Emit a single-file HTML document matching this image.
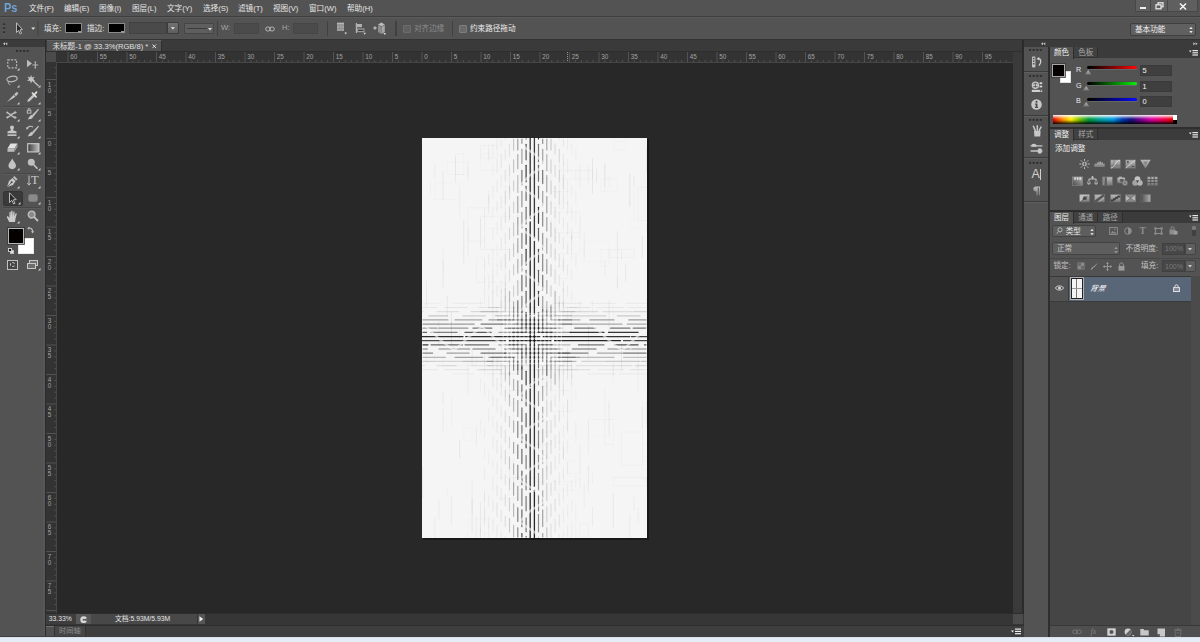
<!DOCTYPE html>
<html lang="zh-CN"><head><meta charset="utf-8"><title>Photoshop</title>
<style>
html,body{margin:0;padding:0;background:#535353;}
body{width:1200px;height:642px;overflow:hidden;position:relative;font-family:"Liberation Sans","Noto Sans CJK SC",sans-serif;}
#root{position:absolute;left:0;top:0;width:1200px;height:642px;overflow:hidden;background:#535353;}
#root div{position:absolute;box-sizing:border-box;}
#root svg{position:absolute;overflow:visible;}
.t{position:absolute;white-space:nowrap;line-height:10px;height:10px;}
</style></head>
<body><div id="root">
<div style="left:0px;top:0px;width:1200px;height:17px;background:#535353;"></div>
<div style="left:0px;top:16px;width:1200px;height:1px;background:#3e3e3e;"></div>
<div style="left:0px;top:17px;width:1200px;height:1px;background:#5c5c5c;"></div>
<span class="t" style="left:4px;top:2.3px;font-size:12.8px;color:#6fa4d9;font-weight:bold;line-height:12px;height:12px;transform:scaleX(0.86);transform-origin:0 0">Ps</span>
<span class="t" style="left:29px;top:3.5px;font-size:7.6px;color:#e6e6e6;">文件(F)</span>
<span class="t" style="left:64px;top:3.5px;font-size:7.6px;color:#e6e6e6;">编辑(E)</span>
<span class="t" style="left:99px;top:3.5px;font-size:7.6px;color:#e6e6e6;">图像(I)</span>
<span class="t" style="left:132px;top:3.5px;font-size:7.6px;color:#e6e6e6;">图层(L)</span>
<span class="t" style="left:167px;top:3.5px;font-size:7.6px;color:#e6e6e6;">文字(Y)</span>
<span class="t" style="left:203px;top:3.5px;font-size:7.6px;color:#e6e6e6;">选择(S)</span>
<span class="t" style="left:238px;top:3.5px;font-size:7.6px;color:#e6e6e6;">滤镜(T)</span>
<span class="t" style="left:273px;top:3.5px;font-size:7.6px;color:#e6e6e6;">视图(V)</span>
<span class="t" style="left:309px;top:3.5px;font-size:7.6px;color:#e6e6e6;">窗口(W)</span>
<span class="t" style="left:347px;top:3.5px;font-size:7.6px;color:#e6e6e6;">帮助(H)</span>
<div style="left:1135px;top:0px;width:16px;height:12px;background:#5f5f5f;border:1px solid #484848;border-top:none"></div>
<div style="left:1151px;top:0px;width:17px;height:12px;background:#5f5f5f;border:1px solid #484848;border-top:none;border-left:none"></div>
<div style="left:1168px;top:0px;width:30px;height:12px;background:#5f5f5f;border:1px solid #484848;border-top:none;border-left:none"></div>
<div style="left:1140px;top:7px;width:6px;height:2px;background:#f0f0f0;"></div>
<svg style="left:1155px;top:2px" width="10" height="8" viewBox="0 0 10 8"><rect x="3" y="0.8" width="5" height="4" fill="none" stroke="#f0f0f0" stroke-width="1.2"/><rect x="1" y="2.8" width="5" height="4" fill="#5f5f5f" stroke="#f0f0f0" stroke-width="1.2"/></svg>
<svg style="left:1179px;top:3px" width="8" height="7" viewBox="0 0 8 7"><path d="M1 0.5 L7 6.5 M7 0.5 L1 6.5" stroke="#f4f4f4" stroke-width="1.5" fill="none"/></svg>
<div style="left:0px;top:18px;width:1200px;height:21px;background:#535353;"></div>
<div style="left:0px;top:39px;width:1200px;height:1px;background:#333;"></div>
<svg style="left:3px;top:23px" width="3" height="13" viewBox="0 0 3 13"><rect x="0" y="0.4" width="2.2" height="1.7" fill="#2d2d2d"/><rect x="0" y="4.4" width="2.2" height="1.7" fill="#2d2d2d"/><rect x="0" y="8.4" width="2.2" height="1.7" fill="#2d2d2d"/><rect x="0" y="2.4" width="2.2" height="0.8" fill="#636363"/><rect x="0" y="6.4" width="2.2" height="0.8" fill="#636363"/><rect x="0" y="10.4" width="2.2" height="0.8" fill="#636363"/></svg>
<svg style="left:15px;top:22px" width="10" height="13" viewBox="0 0 10 13"><path d="M1.5 0.8 L1.5 10.5 L3.6 8.4 L5.2 12 L6.6 11.3 L5 7.9 L7.4 7.6 Z" fill="#2b2b2b" stroke="#cfcfcf" stroke-width="0.85"/></svg>
<svg style="left:30.6px;top:27.2px" width="4.4" height="3" viewBox="0 0 6 4"><path d="M0.3 0.5 L5.7 0.5 L3 3.7 Z" fill="#e8e8e8"/></svg>
<div style="left:37.4px;top:21px;width:1.2px;height:15px;background:#4a4a4a;"></div>
<span class="t" style="left:44px;top:24px;font-size:7.6px;color:#e6e6e6;">填充:</span>
<div style="left:65.2px;top:23px;width:16.6px;height:10.2px;background:#000;border:1px solid #8a8a8a"></div>
<div style="left:78px;top:30.5px;width:3px;height:2px;background:#999;"></div>
<span class="t" style="left:87px;top:24px;font-size:7.6px;color:#e6e6e6;">描边:</span>
<div style="left:108.2px;top:23px;width:16.6px;height:10.2px;background:#000;border:1px solid #8a8a8a"></div>
<div style="left:121px;top:30.5px;width:3px;height:2px;background:#999;"></div>
<div style="left:129px;top:22.4px;width:38.2px;height:11.4px;background:#4a4a4a;border:1px solid #414141"></div>
<div style="left:167.2px;top:22.4px;width:12.2px;height:11.4px;background:linear-gradient(#727272,#5e5e5e);border:1px solid #3c3c3c;border-radius:1px"></div>
<svg style="left:171.4px;top:27.2px" width="3.8" height="2.6" viewBox="0 0 5 3"><path d="M0 0 L5 0 L2.5 3 Z" fill="#f0f0f0"/></svg>
<div style="left:184px;top:22.5px;width:30px;height:11.5px;background:#5e5e5e;border:1px solid #454545;border-radius:1px"></div>
<div style="left:187px;top:28px;width:20px;height:1px;background:#3c3c3c;"></div>
<svg style="left:208px;top:27.5px" width="4" height="3" viewBox="0 0 4 3"><path d="M0 0 L4 0 L2 2.5 Z" fill="#ddd"/></svg>
<div style="left:216.6px;top:21px;width:1.3px;height:15px;background:#404040;"></div>
<span class="t" style="left:221px;top:23.2px;font-size:7.6px;color:#a8a8a8;">W:</span>
<div style="left:234px;top:22.5px;width:25px;height:11.5px;background:#4b4b4b;border:1px solid #464646"></div>
<svg style="left:265px;top:25.5px" width="10" height="6" viewBox="0 0 10 6"><rect x="0.7" y="1" width="4.6" height="4" rx="2" fill="none" stroke="#c0c0c0" stroke-width="0.9"/><rect x="4.7" y="1" width="4.6" height="4" rx="2" fill="none" stroke="#c0c0c0" stroke-width="0.9"/></svg>
<span class="t" style="left:282px;top:23.2px;font-size:7.6px;color:#a8a8a8;">H:</span>
<div style="left:293px;top:22.5px;width:25px;height:11.5px;background:#4b4b4b;border:1px solid #464646"></div>
<div style="left:327.2px;top:21px;width:1.3px;height:15px;background:#404040;"></div>
<svg style="left:336px;top:22px" width="12" height="14" viewBox="0 0 12 14"><rect x="1" y="0.8" width="7" height="8.2" fill="#a2a2a2"/><path d="M1 3.2 L8 3.2 M1 6.6 L8 6.6 M3.4 0.8 L3.4 9 M5.7 0.8 L5.7 9" stroke="#8a8a8a" stroke-width="0.6"/><rect x="1" y="0.8" width="7" height="1" fill="#bdbdbd"/><path d="M8.4 10.6 L11 10.6 L9.7 12.6 Z" fill="#d8d8d8"/></svg>
<svg style="left:355px;top:22px" width="12" height="14" viewBox="0 0 12 14"><rect x="0.8" y="1" width="1.2" height="10" fill="#b4b4b4"/><rect x="2" y="2" width="5" height="3.2" fill="#b0b0b0"/><rect x="2" y="6.4" width="7.5" height="3.8" fill="#9a9a9a"/><rect x="3" y="7.8" width="5.5" height="1" fill="#222"/><path d="M8.4 10.8 L11 10.8 L9.7 12.8 Z" fill="#d8d8d8"/></svg>
<svg style="left:372px;top:22px" width="15" height="14" viewBox="0 0 15 14"><path d="M1.2 6 L4.8 6 M3 4.2 L3 7.8" stroke="#c8c8c8" stroke-width="1.1"/><path d="M9.4 0.6 L12.8 2.6 L9.4 4.6 L6 2.6 Z" fill="#bcbcbc"/><path d="M6 2.9 L9.3 4.9 L9.3 12 L6 10 Z" fill="#8e8e8e"/><path d="M12.8 2.9 L9.5 4.9 L9.5 12 L12.8 10 Z" fill="#a6a6a6"/><path d="M11.4 11 L14 11 L12.7 13 Z" fill="#d8d8d8"/></svg>
<div style="left:395.4px;top:21px;width:1.3px;height:15px;background:#404040;"></div>
<div style="left:403px;top:25px;width:7.5px;height:7.5px;background:#606060;border:1px solid #6c6c6c;border-radius:1px"></div>
<span class="t" style="left:414px;top:24px;font-size:7.6px;color:#8c8c8c;">对齐边缘</span>
<div style="left:451.6px;top:21px;width:1.3px;height:15px;background:#404040;"></div>
<div style="left:459px;top:25px;width:7.5px;height:7.5px;background:#6a6a6a;border:1px solid #7d7d7d;border-radius:1px"></div>
<span class="t" style="left:470px;top:24px;font-size:7.6px;color:#ececec;">约束路径拖动</span>
<div style="left:1130px;top:23px;width:66px;height:12.5px;background:#606060;border:1px solid #3f3f3f;border-radius:2px"></div>
<span class="t" style="left:1135px;top:24.5px;font-size:7.6px;color:#f0f0f0;">基本功能</span>
<svg style="left:1189px;top:26px" width="4" height="8" viewBox="0 0 4 8"><path d="M0.3 3 L3.7 3 L2 0.8 Z M0.3 5 L3.7 5 L2 7.2 Z" fill="#e8e8e8"/></svg>
<div style="left:0px;top:40px;width:44.8px;height:597px;background:#535353;"></div>
<div style="left:0px;top:40px;width:44.8px;height:7px;background:#3b3b3b;"></div>
<div style="left:44.8px;top:40px;width:1.5px;height:597px;background:#2b2b2b;"></div>
<div style="left:43px;top:47px;width:1.8px;height:589px;background:#575757;"></div>
<svg style="left:3.2px;top:41.8px" width="4.6" height="3.4" viewBox="0 0 6 4"><path d="M2.6 0 L2.6 4 L0 2 Z M5.6 0 L5.6 4 L3 2 Z" fill="#c8c8c8"/></svg>
<svg style="left:16.1px;top:49.5px" width="13" height="2" viewBox="0 0 13 2"><rect x="0.0" y="0" width="2.1" height="1.8" fill="#2d2d2d"/><rect x="3.55" y="0" width="2.1" height="1.8" fill="#2d2d2d"/><rect x="7.1" y="0" width="2.1" height="1.8" fill="#2d2d2d"/><rect x="10.649999999999999" y="0" width="2.1" height="1.8" fill="#2d2d2d"/></svg>
<div style="left:3px;top:106px;width:38px;height:1px;background:#474747;"></div>
<div style="left:3px;top:107px;width:38px;height:1px;background:#5b5b5b;"></div>
<div style="left:3px;top:173px;width:38px;height:1px;background:#474747;"></div>
<div style="left:3px;top:174px;width:38px;height:1px;background:#5b5b5b;"></div>
<div style="left:3px;top:207px;width:38px;height:1px;background:#474747;"></div>
<div style="left:3px;top:208px;width:38px;height:1px;background:#5b5b5b;"></div>
<div style="left:2.5px;top:190.5px;width:20px;height:15px;background:#3a3a3a;border-radius:2px;border:1px solid #343434"></div>
<svg style="left:6.6px;top:59.3px" width="11" height="10" viewBox="0 0 11 10"><rect x="0.8" y="0.8" width="8.8" height="8" fill="none" stroke="#b8b8b8" stroke-width="1.2" stroke-dasharray="2 1.3"/></svg>
<svg style="left:17px;top:68px" width="2.5" height="2.5" viewBox="0 0 3 3"><path d="M3 0 L3 3 L0 3 Z" fill="#d4d4d4"/></svg>
<svg style="left:26px;top:59px" width="14" height="11" viewBox="0 0 14 11"><path d="M1 0.8 L1 8.2 L6 4.5 Z" fill="#bcbcbc"/><path d="M9.3 2.6 L9.3 9.4 M6.4 6 L12.2 6" stroke="#c0c0c0" stroke-width="0.9"/><path d="M8.3 3.6 L9.3 2.2 L10.3 3.6 Z M8.3 8.4 L9.3 9.8 L10.3 8.4 Z" fill="#c0c0c0"/></svg>
<svg style="left:6px;top:75px" width="13" height="12" viewBox="0 0 13 12"><ellipse cx="6" cy="4" rx="5.2" ry="2.7" fill="none" stroke="#bababa" stroke-width="1.2" transform="rotate(-8 6 4)"/><path d="M2.6 6 C1.6 7.6 2.6 9.4 4.4 9.8" fill="none" stroke="#bababa" stroke-width="1"/></svg>
<svg style="left:17px;top:85px" width="2.5" height="2.5" viewBox="0 0 3 3"><path d="M3 0 L3 3 L0 3 Z" fill="#d4d4d4"/></svg>
<svg style="left:26px;top:74px" width="14" height="13" viewBox="0 0 14 13"><path d="M5 5 L12.6 12" stroke="#bcbcbc" stroke-width="1.5"/><path d="M5 0.8 L6 3.4 L8.8 2.6 L7.2 5 L9.2 7 L6.2 6.8 L5 9.4 L4 6.8 L1 7 L3 5 L1.4 2.6 L4.2 3.4 Z" fill="#c4c4c4"/></svg>
<svg style="left:38px;top:85px" width="2.5" height="2.5" viewBox="0 0 3 3"><path d="M3 0 L3 3 L0 3 Z" fill="#d4d4d4"/></svg>
<svg style="left:6px;top:91px" width="13" height="12" viewBox="0 0 13 12"><path d="M1 11 L7.5 4 L9.5 5.8 Z" fill="#c6c6c6"/><path d="M8 3.5 L10.8 0.8 L12.5 2.5 L10 5.3 Z" fill="#bdbdbd"/></svg>
<svg style="left:17px;top:101.5px" width="2.5" height="2.5" viewBox="0 0 3 3"><path d="M3 0 L3 3 L0 3 Z" fill="#d4d4d4"/></svg>
<svg style="left:26px;top:91px" width="13" height="12" viewBox="0 0 13 12"><path d="M1.2 11 L2 8.5 L7 3.5 L8.7 5.2 L3.7 10.2 Z" fill="#c6c6c6"/><path d="M6.5 2.2 L10 5.8 M8.5 3.5 L10.5 1.2" stroke="#e0e0e0" stroke-width="1.8" stroke-linecap="round"/></svg>
<svg style="left:38px;top:101.5px" width="2.5" height="2.5" viewBox="0 0 3 3"><path d="M3 0 L3 3 L0 3 Z" fill="#d4d4d4"/></svg>
<svg style="left:6px;top:110px" width="12" height="10" viewBox="0 0 12 10"><path d="M0.5 2.4 C3.6 2.4 6 7.6 9.6 7.6 M0.5 7.6 C3.6 7.6 6 2.4 9.6 2.4" fill="none" stroke="#bcbcbc" stroke-width="1.5"/><path d="M8.6 0.8 L11 2.4 L8.6 4 Z M8.6 6 L11 7.6 L8.6 9.2 Z M2 1.2 L0 2.4 L2 3.6 Z M2 6.4 L0 7.6 L2 8.8 Z" fill="#bcbcbc"/></svg>
<svg style="left:17px;top:119px" width="2.5" height="2.5" viewBox="0 0 3 3"><path d="M3 0 L3 3 L0 3 Z" fill="#d4d4d4"/></svg>
<svg style="left:26px;top:108px" width="14" height="13" viewBox="0 0 14 13"><path d="M13 1.4 L7.6 8.6 L5.8 7.2 L12.2 0.8 Z" fill="#c2c2c2"/><path d="M7.4 8.6 C6.4 11.2 3.6 11.6 1.6 11.2 C3.2 10.2 3 8.2 5.4 6.8 Z" fill="#c6c6c6"/><rect x="0.8" y="2.2" width="4.6" height="3.4" fill="#bebebe"/><rect x="1.8" y="3.2" width="2.6" height="1.4" fill="#444"/><path d="M2 2 L2 0.8 L4.2 0.8 L4.2 2" fill="none" stroke="#bebebe" stroke-width="0.9"/></svg>
<svg style="left:38px;top:119px" width="2.5" height="2.5" viewBox="0 0 3 3"><path d="M3 0 L3 3 L0 3 Z" fill="#d4d4d4"/></svg>
<svg style="left:6px;top:125px" width="13" height="12" viewBox="0 0 13 12"><path d="M4.6 0.8 L7.4 0.8 L8 2.6 L7 5.2 L10.5 6.4 L10.5 8.2 L1.5 8.2 L1.5 6.4 L5 5.2 L4 2.6 Z" fill="#c6c6c6"/><rect x="1.5" y="9.3" width="9" height="1.7" fill="#c0c0c0"/></svg>
<svg style="left:17px;top:135.5px" width="2.5" height="2.5" viewBox="0 0 3 3"><path d="M3 0 L3 3 L0 3 Z" fill="#d4d4d4"/></svg>
<svg style="left:26px;top:125px" width="14" height="13" viewBox="0 0 14 13"><path d="M13 1.4 L7.6 8.6 L5.8 7.2 L12.2 0.8 Z" fill="#c2c2c2"/><path d="M7.4 8.6 C6.4 11.2 3.6 11.6 1.6 11.2 C3.2 10.2 3 8.2 5.4 6.8 Z" fill="#c6c6c6"/><path d="M1 3.8 C2 1.2 5 0.6 7 2" fill="none" stroke="#bebebe" stroke-width="1.2"/><path d="M0 2.2 L2.6 3 L0.8 5 Z" fill="#bebebe"/></svg>
<svg style="left:38px;top:135.5px" width="2.5" height="2.5" viewBox="0 0 3 3"><path d="M3 0 L3 3 L0 3 Z" fill="#d4d4d4"/></svg>
<svg style="left:6px;top:142px" width="13" height="12" viewBox="0 0 13 12"><path d="M4.5 1.5 L11.5 1.5 L8.5 6.5 L1.5 6.5 Z" fill="#e2e2e2"/><path d="M1.5 6.5 L8.5 6.5 L8.5 9.8 L1.5 9.8 Z" fill="#bcbcbc"/><path d="M8.5 6.5 L11.5 1.5 L11.5 4.8 L8.5 9.8 Z" fill="#9d9d9d"/></svg>
<svg style="left:17px;top:152px" width="2.5" height="2.5" viewBox="0 0 3 3"><path d="M3 0 L3 3 L0 3 Z" fill="#d4d4d4"/></svg>
<svg style="left:26.5px;top:142.5px" width="13" height="10" viewBox="0 0 13 10"><defs><linearGradient id="gtool" x1="0" x2="1" y1="0" y2="0"><stop offset="0" stop-color="#3a3a3a"/><stop offset="1" stop-color="#c0c0c0"/></linearGradient></defs><rect x="0.7" y="0.7" width="11.2" height="8.2" fill="url(#gtool)" stroke="#c6c6c6" stroke-width="1.2"/></svg>
<svg style="left:38px;top:152px" width="2.5" height="2.5" viewBox="0 0 3 3"><path d="M3 0 L3 3 L0 3 Z" fill="#d4d4d4"/></svg>
<svg style="left:7px;top:158px" width="11" height="12" viewBox="0 0 11 12"><path d="M5.2 0.5 C6.5 3.5 9 5.2 9 7.6 C9 9.8 7.3 11.2 5.2 11.2 C3.1 11.2 1.4 9.8 1.4 7.6 C1.4 5.2 4 3.5 5.2 0.5 Z" fill="#c4c4c4"/></svg>
<svg style="left:17px;top:168px" width="2.5" height="2.5" viewBox="0 0 3 3"><path d="M3 0 L3 3 L0 3 Z" fill="#d4d4d4"/></svg>
<svg style="left:27px;top:158px" width="12" height="12" viewBox="0 0 12 12"><circle cx="4.3" cy="4.3" r="3.5" fill="#bebebe"/><path d="M6.5 6.5 L10.5 10.8" stroke="#c6c6c6" stroke-width="1.6"/></svg>
<svg style="left:38px;top:168px" width="2.5" height="2.5" viewBox="0 0 3 3"><path d="M3 0 L3 3 L0 3 Z" fill="#d4d4d4"/></svg>
<svg style="left:6px;top:175px" width="13" height="13" viewBox="0 0 13 13"><path d="M8.3 1 L11.6 4.3 L10.2 5.6 L7 2.4 Z" fill="#c0c0c0"/><path d="M6.5 3 L9.6 6 L7 10 L1 12 L3 6 Z" fill="#c8c8c8"/><circle cx="5.6" cy="7.2" r="1" fill="#444"/><path d="M1.2 11.8 L5 8" stroke="#444" stroke-width="0.7"/></svg>
<svg style="left:17px;top:186px" width="2.5" height="2.5" viewBox="0 0 3 3"><path d="M3 0 L3 3 L0 3 Z" fill="#d4d4d4"/></svg>
<svg style="left:26.5px;top:175px" width="14" height="12" viewBox="0 0 14 12"><path d="M2 0.5 L2 9.5 M0.3 8 L2 10.2 L3.7 8" stroke="#bebebe" stroke-width="1" fill="none"/></svg>
<span class="t" style="left:31px;top:174px;font-size:12.5px;color:#cacaca;font-family:'Liberation Serif',serif;line-height:13px;height:13px">T</span>
<svg style="left:38px;top:186px" width="2.5" height="2.5" viewBox="0 0 3 3"><path d="M3 0 L3 3 L0 3 Z" fill="#d4d4d4"/></svg>
<svg style="left:8px;top:192px" width="10" height="13" viewBox="0 0 10 13"><path d="M1.5 0.8 L1.5 10.5 L3.8 8.3 L5.6 12 L7 11.3 L5.3 7.8 L8.2 7.6 Z" fill="#2b2b2b" stroke="#c6c6c6" stroke-width="0.9"/></svg>
<svg style="left:18px;top:201.5px" width="2.5" height="2.5" viewBox="0 0 3 3"><path d="M3 0 L3 3 L0 3 Z" fill="#d4d4d4"/></svg>
<div style="left:27.5px;top:193.5px;width:10px;height:8px;background:#8a8a8a;border-radius:2.5px;border:1px solid #7a7a7a"></div>
<svg style="left:38px;top:202px" width="2.5" height="2.5" viewBox="0 0 3 3"><path d="M3 0 L3 3 L0 3 Z" fill="#d4d4d4"/></svg>
<svg style="left:6px;top:210px" width="13" height="13" viewBox="0 0 13 13"><path d="M3.2 12 L1 7.5 C0.5 6.3 1.8 5.8 2.5 6.8 L3.4 8 L3.4 2.5 C3.4 1.5 4.8 1.5 4.8 2.5 L4.9 6 L5.2 1.3 C5.3 0.3 6.6 0.4 6.6 1.4 L6.6 6 L7.3 2 C7.5 1 8.8 1.3 8.6 2.3 L8.2 6.4 L9.5 3.6 C10 2.8 11 3.3 10.7 4.2 L9.5 8.5 L9 12 Z" fill="#cacaca"/></svg>
<svg style="left:17px;top:220.5px" width="2.5" height="2.5" viewBox="0 0 3 3"><path d="M3 0 L3 3 L0 3 Z" fill="#d4d4d4"/></svg>
<svg style="left:27px;top:210px" width="13" height="13" viewBox="0 0 13 13"><circle cx="4.6" cy="4.6" r="3.4" fill="#8a8a8a" stroke="#bebebe" stroke-width="1.3"/><path d="M7.2 7.2 L11 11" stroke="#bebebe" stroke-width="1.9"/></svg>
<div style="left:17.5px;top:237.5px;width:16px;height:16px;background:#fff;border:1px solid #e8e8e8"></div>
<div style="left:7.7px;top:227.5px;width:16.3px;height:16px;background:#050100;border:1.4px solid #b4b4b4;box-shadow:0 0 0 0.8px #3a3a3a"></div>
<svg style="left:27px;top:226px" width="8" height="8" viewBox="0 0 8 8"><path d="M1 2.2 C4 1.5 5.8 3 5.6 6" fill="none" stroke="#c0c0c0" stroke-width="1.1"/><path d="M0.2 2.4 L2.3 0.6 L2.4 3.8 Z M4 5.2 L7.2 5.2 L5.6 7.6 Z" fill="#c0c0c0"/></svg>
<div style="left:9.5px;top:249.5px;width:4.5px;height:4.5px;background:#e8e8e8;border:0.8px solid #bbb"></div>
<div style="left:7.5px;top:247.5px;width:4.5px;height:4.5px;background:#111;border:0.8px solid #ccc"></div>
<div style="left:6.5px;top:260px;width:11.5px;height:9.5px;background:#444;border:1px solid #c0c0c0"></div>
<div style="left:9.5px;top:262.3px;width:5.5px;height:5px;background:transparent;border:1px dashed #c6c6c6;border-radius:2.5px"></div>
<div style="left:29px;top:259.5px;width:9px;height:6px;background:#6e6e6e;border:1px solid #c8c8c8"></div>
<div style="left:26.5px;top:262.5px;width:9px;height:6px;background:#6e6e6e;border:1px solid #c8c8c8"></div>
<svg style="left:38px;top:268px" width="2.5" height="2.5" viewBox="0 0 3 3"><path d="M3 0 L3 3 L0 3 Z" fill="#d4d4d4"/></svg>
<div style="left:46.3px;top:40px;width:977.7px;height:12px;background:#3a3a3a;"></div>
<div style="left:46.5px;top:40px;width:115px;height:11.5px;background:#535353;border-top:1px solid #626262;border-right:1px solid #2e2e2e"></div>
<span class="t" style="left:52.4px;top:41.5px;font-size:7.6px;color:#e0e0e0;">未标题-1 @ 33.3%(RGB/8) * </span>
<svg style="left:151.8px;top:43.7px" width="4.6" height="4.6" viewBox="0 0 5 5"><path d="M0.5 0.5 L4.5 4.5 M4.5 0.5 L0.5 4.5" stroke="#e8e8e8" stroke-width="1"/></svg>
<div style="left:46.3px;top:51.2px;width:977.7px;height:0.8px;background:#2e2e2e;"></div>
<div style="left:46.3px;top:52px;width:966.7px;height:562px;background:#282828;"></div>
<div style="left:46.3px;top:52px;width:966.7px;height:10px;background:#333333;"></div>
<div style="left:46.3px;top:52px;width:10px;height:562px;background:#333333;"></div>
<div style="left:46.3px;top:52px;width:10px;height:10px;background:#4b4b4b;"></div>
<div style="left:56.3px;top:62px;width:956.7px;height:1px;background:#464646;"></div>
<div style="left:56.1px;top:62px;width:1px;height:552px;background:#464646;"></div>
<svg style="left:0;top:0" width="1200" height="642" viewBox="0 0 1200 642" font-family="Liberation Sans, sans-serif"><rect x="67.50" y="52" width="1" height="10" fill="#525252"/><text x="70.20" y="59" font-size="6.3" fill="#a4a4a4">60</text><rect x="73.40" y="60" width="1" height="2" fill="#525252"/><rect x="79.30" y="60" width="1" height="2" fill="#525252"/><rect x="85.20" y="60" width="1" height="2" fill="#525252"/><rect x="91.10" y="60" width="1" height="2" fill="#525252"/><rect x="97.00" y="52" width="1" height="10" fill="#525252"/><text x="99.70" y="59" font-size="6.3" fill="#a4a4a4">55</text><rect x="102.90" y="60" width="1" height="2" fill="#525252"/><rect x="108.80" y="60" width="1" height="2" fill="#525252"/><rect x="114.70" y="60" width="1" height="2" fill="#525252"/><rect x="120.60" y="60" width="1" height="2" fill="#525252"/><rect x="126.50" y="52" width="1" height="10" fill="#525252"/><text x="129.20" y="59" font-size="6.3" fill="#a4a4a4">50</text><rect x="132.40" y="60" width="1" height="2" fill="#525252"/><rect x="138.30" y="60" width="1" height="2" fill="#525252"/><rect x="144.20" y="60" width="1" height="2" fill="#525252"/><rect x="150.10" y="60" width="1" height="2" fill="#525252"/><rect x="156.00" y="52" width="1" height="10" fill="#525252"/><text x="158.70" y="59" font-size="6.3" fill="#a4a4a4">45</text><rect x="161.90" y="60" width="1" height="2" fill="#525252"/><rect x="167.80" y="60" width="1" height="2" fill="#525252"/><rect x="173.70" y="60" width="1" height="2" fill="#525252"/><rect x="179.60" y="60" width="1" height="2" fill="#525252"/><rect x="185.50" y="52" width="1" height="10" fill="#525252"/><text x="188.20" y="59" font-size="6.3" fill="#a4a4a4">40</text><rect x="191.40" y="60" width="1" height="2" fill="#525252"/><rect x="197.30" y="60" width="1" height="2" fill="#525252"/><rect x="203.20" y="60" width="1" height="2" fill="#525252"/><rect x="209.10" y="60" width="1" height="2" fill="#525252"/><rect x="215.00" y="52" width="1" height="10" fill="#525252"/><text x="217.70" y="59" font-size="6.3" fill="#a4a4a4">35</text><rect x="220.90" y="60" width="1" height="2" fill="#525252"/><rect x="226.80" y="60" width="1" height="2" fill="#525252"/><rect x="232.70" y="60" width="1" height="2" fill="#525252"/><rect x="238.60" y="60" width="1" height="2" fill="#525252"/><rect x="244.50" y="52" width="1" height="10" fill="#525252"/><text x="247.20" y="59" font-size="6.3" fill="#a4a4a4">30</text><rect x="250.40" y="60" width="1" height="2" fill="#525252"/><rect x="256.30" y="60" width="1" height="2" fill="#525252"/><rect x="262.20" y="60" width="1" height="2" fill="#525252"/><rect x="268.10" y="60" width="1" height="2" fill="#525252"/><rect x="274.00" y="52" width="1" height="10" fill="#525252"/><text x="276.70" y="59" font-size="6.3" fill="#a4a4a4">25</text><rect x="279.90" y="60" width="1" height="2" fill="#525252"/><rect x="285.80" y="60" width="1" height="2" fill="#525252"/><rect x="291.70" y="60" width="1" height="2" fill="#525252"/><rect x="297.60" y="60" width="1" height="2" fill="#525252"/><rect x="303.50" y="52" width="1" height="10" fill="#525252"/><text x="306.20" y="59" font-size="6.3" fill="#a4a4a4">20</text><rect x="309.40" y="60" width="1" height="2" fill="#525252"/><rect x="315.30" y="60" width="1" height="2" fill="#525252"/><rect x="321.20" y="60" width="1" height="2" fill="#525252"/><rect x="327.10" y="60" width="1" height="2" fill="#525252"/><rect x="333.00" y="52" width="1" height="10" fill="#525252"/><text x="335.70" y="59" font-size="6.3" fill="#a4a4a4">15</text><rect x="338.90" y="60" width="1" height="2" fill="#525252"/><rect x="344.80" y="60" width="1" height="2" fill="#525252"/><rect x="350.70" y="60" width="1" height="2" fill="#525252"/><rect x="356.60" y="60" width="1" height="2" fill="#525252"/><rect x="362.50" y="52" width="1" height="10" fill="#525252"/><text x="365.20" y="59" font-size="6.3" fill="#a4a4a4">10</text><rect x="368.40" y="60" width="1" height="2" fill="#525252"/><rect x="374.30" y="60" width="1" height="2" fill="#525252"/><rect x="380.20" y="60" width="1" height="2" fill="#525252"/><rect x="386.10" y="60" width="1" height="2" fill="#525252"/><rect x="392.00" y="52" width="1" height="10" fill="#525252"/><text x="394.70" y="59" font-size="6.3" fill="#a4a4a4">5</text><rect x="397.90" y="60" width="1" height="2" fill="#525252"/><rect x="403.80" y="60" width="1" height="2" fill="#525252"/><rect x="409.70" y="60" width="1" height="2" fill="#525252"/><rect x="415.60" y="60" width="1" height="2" fill="#525252"/><rect x="421.50" y="52" width="1" height="10" fill="#525252"/><text x="424.20" y="59" font-size="6.3" fill="#a4a4a4">0</text><rect x="427.40" y="60" width="1" height="2" fill="#525252"/><rect x="433.30" y="60" width="1" height="2" fill="#525252"/><rect x="439.20" y="60" width="1" height="2" fill="#525252"/><rect x="445.10" y="60" width="1" height="2" fill="#525252"/><rect x="451.00" y="52" width="1" height="10" fill="#525252"/><text x="453.70" y="59" font-size="6.3" fill="#a4a4a4">5</text><rect x="456.90" y="60" width="1" height="2" fill="#525252"/><rect x="462.80" y="60" width="1" height="2" fill="#525252"/><rect x="468.70" y="60" width="1" height="2" fill="#525252"/><rect x="474.60" y="60" width="1" height="2" fill="#525252"/><rect x="480.50" y="52" width="1" height="10" fill="#525252"/><text x="483.20" y="59" font-size="6.3" fill="#a4a4a4">10</text><rect x="486.40" y="60" width="1" height="2" fill="#525252"/><rect x="492.30" y="60" width="1" height="2" fill="#525252"/><rect x="498.20" y="60" width="1" height="2" fill="#525252"/><rect x="504.10" y="60" width="1" height="2" fill="#525252"/><rect x="510.00" y="52" width="1" height="10" fill="#525252"/><text x="512.70" y="59" font-size="6.3" fill="#a4a4a4">15</text><rect x="515.90" y="60" width="1" height="2" fill="#525252"/><rect x="521.80" y="60" width="1" height="2" fill="#525252"/><rect x="527.70" y="60" width="1" height="2" fill="#525252"/><rect x="533.60" y="60" width="1" height="2" fill="#525252"/><rect x="539.50" y="52" width="1" height="10" fill="#525252"/><text x="542.20" y="59" font-size="6.3" fill="#a4a4a4">20</text><rect x="545.40" y="60" width="1" height="2" fill="#525252"/><rect x="551.30" y="60" width="1" height="2" fill="#525252"/><rect x="557.20" y="60" width="1" height="2" fill="#525252"/><rect x="563.10" y="60" width="1" height="2" fill="#525252"/><rect x="569.00" y="52" width="1" height="10" fill="#525252"/><text x="571.70" y="59" font-size="6.3" fill="#a4a4a4">25</text><rect x="574.90" y="60" width="1" height="2" fill="#525252"/><rect x="580.80" y="60" width="1" height="2" fill="#525252"/><rect x="586.70" y="60" width="1" height="2" fill="#525252"/><rect x="592.60" y="60" width="1" height="2" fill="#525252"/><rect x="598.50" y="52" width="1" height="10" fill="#525252"/><text x="601.20" y="59" font-size="6.3" fill="#a4a4a4">30</text><rect x="604.40" y="60" width="1" height="2" fill="#525252"/><rect x="610.30" y="60" width="1" height="2" fill="#525252"/><rect x="616.20" y="60" width="1" height="2" fill="#525252"/><rect x="622.10" y="60" width="1" height="2" fill="#525252"/><rect x="628.00" y="52" width="1" height="10" fill="#525252"/><text x="630.70" y="59" font-size="6.3" fill="#a4a4a4">35</text><rect x="633.90" y="60" width="1" height="2" fill="#525252"/><rect x="639.80" y="60" width="1" height="2" fill="#525252"/><rect x="645.70" y="60" width="1" height="2" fill="#525252"/><rect x="651.60" y="60" width="1" height="2" fill="#525252"/><rect x="657.50" y="52" width="1" height="10" fill="#525252"/><text x="660.20" y="59" font-size="6.3" fill="#a4a4a4">40</text><rect x="663.40" y="60" width="1" height="2" fill="#525252"/><rect x="669.30" y="60" width="1" height="2" fill="#525252"/><rect x="675.20" y="60" width="1" height="2" fill="#525252"/><rect x="681.10" y="60" width="1" height="2" fill="#525252"/><rect x="687.00" y="52" width="1" height="10" fill="#525252"/><text x="689.70" y="59" font-size="6.3" fill="#a4a4a4">45</text><rect x="692.90" y="60" width="1" height="2" fill="#525252"/><rect x="698.80" y="60" width="1" height="2" fill="#525252"/><rect x="704.70" y="60" width="1" height="2" fill="#525252"/><rect x="710.60" y="60" width="1" height="2" fill="#525252"/><rect x="716.50" y="52" width="1" height="10" fill="#525252"/><text x="719.20" y="59" font-size="6.3" fill="#a4a4a4">50</text><rect x="722.40" y="60" width="1" height="2" fill="#525252"/><rect x="728.30" y="60" width="1" height="2" fill="#525252"/><rect x="734.20" y="60" width="1" height="2" fill="#525252"/><rect x="740.10" y="60" width="1" height="2" fill="#525252"/><rect x="746.00" y="52" width="1" height="10" fill="#525252"/><text x="748.70" y="59" font-size="6.3" fill="#a4a4a4">55</text><rect x="751.90" y="60" width="1" height="2" fill="#525252"/><rect x="757.80" y="60" width="1" height="2" fill="#525252"/><rect x="763.70" y="60" width="1" height="2" fill="#525252"/><rect x="769.60" y="60" width="1" height="2" fill="#525252"/><rect x="775.50" y="52" width="1" height="10" fill="#525252"/><text x="778.20" y="59" font-size="6.3" fill="#a4a4a4">60</text><rect x="781.40" y="60" width="1" height="2" fill="#525252"/><rect x="787.30" y="60" width="1" height="2" fill="#525252"/><rect x="793.20" y="60" width="1" height="2" fill="#525252"/><rect x="799.10" y="60" width="1" height="2" fill="#525252"/><rect x="805.00" y="52" width="1" height="10" fill="#525252"/><text x="807.70" y="59" font-size="6.3" fill="#a4a4a4">65</text><rect x="810.90" y="60" width="1" height="2" fill="#525252"/><rect x="816.80" y="60" width="1" height="2" fill="#525252"/><rect x="822.70" y="60" width="1" height="2" fill="#525252"/><rect x="828.60" y="60" width="1" height="2" fill="#525252"/><rect x="834.50" y="52" width="1" height="10" fill="#525252"/><text x="837.20" y="59" font-size="6.3" fill="#a4a4a4">70</text><rect x="840.40" y="60" width="1" height="2" fill="#525252"/><rect x="846.30" y="60" width="1" height="2" fill="#525252"/><rect x="852.20" y="60" width="1" height="2" fill="#525252"/><rect x="858.10" y="60" width="1" height="2" fill="#525252"/><rect x="864.00" y="52" width="1" height="10" fill="#525252"/><text x="866.70" y="59" font-size="6.3" fill="#a4a4a4">75</text><rect x="869.90" y="60" width="1" height="2" fill="#525252"/><rect x="875.80" y="60" width="1" height="2" fill="#525252"/><rect x="881.70" y="60" width="1" height="2" fill="#525252"/><rect x="887.60" y="60" width="1" height="2" fill="#525252"/><rect x="893.50" y="52" width="1" height="10" fill="#525252"/><text x="896.20" y="59" font-size="6.3" fill="#a4a4a4">80</text><rect x="899.40" y="60" width="1" height="2" fill="#525252"/><rect x="905.30" y="60" width="1" height="2" fill="#525252"/><rect x="911.20" y="60" width="1" height="2" fill="#525252"/><rect x="917.10" y="60" width="1" height="2" fill="#525252"/><rect x="923.00" y="52" width="1" height="10" fill="#525252"/><text x="925.70" y="59" font-size="6.3" fill="#a4a4a4">85</text><rect x="928.90" y="60" width="1" height="2" fill="#525252"/><rect x="934.80" y="60" width="1" height="2" fill="#525252"/><rect x="940.70" y="60" width="1" height="2" fill="#525252"/><rect x="946.60" y="60" width="1" height="2" fill="#525252"/><rect x="952.50" y="52" width="1" height="10" fill="#525252"/><text x="955.20" y="59" font-size="6.3" fill="#a4a4a4">90</text><rect x="958.40" y="60" width="1" height="2" fill="#525252"/><rect x="964.30" y="60" width="1" height="2" fill="#525252"/><rect x="970.20" y="60" width="1" height="2" fill="#525252"/><rect x="976.10" y="60" width="1" height="2" fill="#525252"/><rect x="982.00" y="52" width="1" height="10" fill="#525252"/><text x="984.70" y="59" font-size="6.3" fill="#a4a4a4">95</text><rect x="987.90" y="60" width="1" height="2" fill="#525252"/><rect x="993.80" y="60" width="1" height="2" fill="#525252"/><rect x="999.70" y="60" width="1" height="2" fill="#525252"/><rect x="1005.60" y="60" width="1" height="2" fill="#525252"/><rect x="54.3" y="67.20" width="2" height="1" fill="#525252"/><rect x="54.3" y="73.10" width="2" height="1" fill="#525252"/><rect x="46.3" y="79.00" width="10" height="1" fill="#525252"/><text x="47.8" y="86.50" font-size="6.3" fill="#a4a4a4">1</text><text x="47.8" y="92.50" font-size="6.3" fill="#a4a4a4">0</text><rect x="54.3" y="84.90" width="2" height="1" fill="#525252"/><rect x="54.3" y="90.80" width="2" height="1" fill="#525252"/><rect x="54.3" y="96.70" width="2" height="1" fill="#525252"/><rect x="54.3" y="102.60" width="2" height="1" fill="#525252"/><rect x="46.3" y="108.50" width="10" height="1" fill="#525252"/><text x="47.8" y="116.00" font-size="6.3" fill="#a4a4a4">5</text><rect x="54.3" y="114.40" width="2" height="1" fill="#525252"/><rect x="54.3" y="120.30" width="2" height="1" fill="#525252"/><rect x="54.3" y="126.20" width="2" height="1" fill="#525252"/><rect x="54.3" y="132.10" width="2" height="1" fill="#525252"/><rect x="46.3" y="138.00" width="10" height="1" fill="#525252"/><text x="47.8" y="145.50" font-size="6.3" fill="#a4a4a4">0</text><rect x="54.3" y="143.90" width="2" height="1" fill="#525252"/><rect x="54.3" y="149.80" width="2" height="1" fill="#525252"/><rect x="54.3" y="155.70" width="2" height="1" fill="#525252"/><rect x="54.3" y="161.60" width="2" height="1" fill="#525252"/><rect x="46.3" y="167.50" width="10" height="1" fill="#525252"/><text x="47.8" y="175.00" font-size="6.3" fill="#a4a4a4">5</text><rect x="54.3" y="173.40" width="2" height="1" fill="#525252"/><rect x="54.3" y="179.30" width="2" height="1" fill="#525252"/><rect x="54.3" y="185.20" width="2" height="1" fill="#525252"/><rect x="54.3" y="191.10" width="2" height="1" fill="#525252"/><rect x="46.3" y="197.00" width="10" height="1" fill="#525252"/><text x="47.8" y="204.50" font-size="6.3" fill="#a4a4a4">1</text><text x="47.8" y="210.50" font-size="6.3" fill="#a4a4a4">0</text><rect x="54.3" y="202.90" width="2" height="1" fill="#525252"/><rect x="54.3" y="208.80" width="2" height="1" fill="#525252"/><rect x="54.3" y="214.70" width="2" height="1" fill="#525252"/><rect x="54.3" y="220.60" width="2" height="1" fill="#525252"/><rect x="46.3" y="226.50" width="10" height="1" fill="#525252"/><text x="47.8" y="234.00" font-size="6.3" fill="#a4a4a4">1</text><text x="47.8" y="240.00" font-size="6.3" fill="#a4a4a4">5</text><rect x="54.3" y="232.40" width="2" height="1" fill="#525252"/><rect x="54.3" y="238.30" width="2" height="1" fill="#525252"/><rect x="54.3" y="244.20" width="2" height="1" fill="#525252"/><rect x="54.3" y="250.10" width="2" height="1" fill="#525252"/><rect x="46.3" y="256.00" width="10" height="1" fill="#525252"/><text x="47.8" y="263.50" font-size="6.3" fill="#a4a4a4">2</text><text x="47.8" y="269.50" font-size="6.3" fill="#a4a4a4">0</text><rect x="54.3" y="261.90" width="2" height="1" fill="#525252"/><rect x="54.3" y="267.80" width="2" height="1" fill="#525252"/><rect x="54.3" y="273.70" width="2" height="1" fill="#525252"/><rect x="54.3" y="279.60" width="2" height="1" fill="#525252"/><rect x="46.3" y="285.50" width="10" height="1" fill="#525252"/><text x="47.8" y="293.00" font-size="6.3" fill="#a4a4a4">2</text><text x="47.8" y="299.00" font-size="6.3" fill="#a4a4a4">5</text><rect x="54.3" y="291.40" width="2" height="1" fill="#525252"/><rect x="54.3" y="297.30" width="2" height="1" fill="#525252"/><rect x="54.3" y="303.20" width="2" height="1" fill="#525252"/><rect x="54.3" y="309.10" width="2" height="1" fill="#525252"/><rect x="46.3" y="315.00" width="10" height="1" fill="#525252"/><text x="47.8" y="322.50" font-size="6.3" fill="#a4a4a4">3</text><text x="47.8" y="328.50" font-size="6.3" fill="#a4a4a4">0</text><rect x="54.3" y="320.90" width="2" height="1" fill="#525252"/><rect x="54.3" y="326.80" width="2" height="1" fill="#525252"/><rect x="54.3" y="332.70" width="2" height="1" fill="#525252"/><rect x="54.3" y="338.60" width="2" height="1" fill="#525252"/><rect x="46.3" y="344.50" width="10" height="1" fill="#525252"/><text x="47.8" y="352.00" font-size="6.3" fill="#a4a4a4">3</text><text x="47.8" y="358.00" font-size="6.3" fill="#a4a4a4">5</text><rect x="54.3" y="350.40" width="2" height="1" fill="#525252"/><rect x="54.3" y="356.30" width="2" height="1" fill="#525252"/><rect x="54.3" y="362.20" width="2" height="1" fill="#525252"/><rect x="54.3" y="368.10" width="2" height="1" fill="#525252"/><rect x="46.3" y="374.00" width="10" height="1" fill="#525252"/><text x="47.8" y="381.50" font-size="6.3" fill="#a4a4a4">4</text><text x="47.8" y="387.50" font-size="6.3" fill="#a4a4a4">0</text><rect x="54.3" y="379.90" width="2" height="1" fill="#525252"/><rect x="54.3" y="385.80" width="2" height="1" fill="#525252"/><rect x="54.3" y="391.70" width="2" height="1" fill="#525252"/><rect x="54.3" y="397.60" width="2" height="1" fill="#525252"/><rect x="46.3" y="403.50" width="10" height="1" fill="#525252"/><text x="47.8" y="411.00" font-size="6.3" fill="#a4a4a4">4</text><text x="47.8" y="417.00" font-size="6.3" fill="#a4a4a4">5</text><rect x="54.3" y="409.40" width="2" height="1" fill="#525252"/><rect x="54.3" y="415.30" width="2" height="1" fill="#525252"/><rect x="54.3" y="421.20" width="2" height="1" fill="#525252"/><rect x="54.3" y="427.10" width="2" height="1" fill="#525252"/><rect x="46.3" y="433.00" width="10" height="1" fill="#525252"/><text x="47.8" y="440.50" font-size="6.3" fill="#a4a4a4">5</text><text x="47.8" y="446.50" font-size="6.3" fill="#a4a4a4">0</text><rect x="54.3" y="438.90" width="2" height="1" fill="#525252"/><rect x="54.3" y="444.80" width="2" height="1" fill="#525252"/><rect x="54.3" y="450.70" width="2" height="1" fill="#525252"/><rect x="54.3" y="456.60" width="2" height="1" fill="#525252"/><rect x="46.3" y="462.50" width="10" height="1" fill="#525252"/><text x="47.8" y="470.00" font-size="6.3" fill="#a4a4a4">5</text><text x="47.8" y="476.00" font-size="6.3" fill="#a4a4a4">5</text><rect x="54.3" y="468.40" width="2" height="1" fill="#525252"/><rect x="54.3" y="474.30" width="2" height="1" fill="#525252"/><rect x="54.3" y="480.20" width="2" height="1" fill="#525252"/><rect x="54.3" y="486.10" width="2" height="1" fill="#525252"/><rect x="46.3" y="492.00" width="10" height="1" fill="#525252"/><text x="47.8" y="499.50" font-size="6.3" fill="#a4a4a4">6</text><text x="47.8" y="505.50" font-size="6.3" fill="#a4a4a4">0</text><rect x="54.3" y="497.90" width="2" height="1" fill="#525252"/><rect x="54.3" y="503.80" width="2" height="1" fill="#525252"/><rect x="54.3" y="509.70" width="2" height="1" fill="#525252"/><rect x="54.3" y="515.60" width="2" height="1" fill="#525252"/><rect x="46.3" y="521.50" width="10" height="1" fill="#525252"/><text x="47.8" y="529.00" font-size="6.3" fill="#a4a4a4">6</text><text x="47.8" y="535.00" font-size="6.3" fill="#a4a4a4">5</text><rect x="54.3" y="527.40" width="2" height="1" fill="#525252"/><rect x="54.3" y="533.30" width="2" height="1" fill="#525252"/><rect x="54.3" y="539.20" width="2" height="1" fill="#525252"/><rect x="54.3" y="545.10" width="2" height="1" fill="#525252"/><rect x="46.3" y="551.00" width="10" height="1" fill="#525252"/><text x="47.8" y="558.50" font-size="6.3" fill="#a4a4a4">7</text><text x="47.8" y="564.50" font-size="6.3" fill="#a4a4a4">0</text><rect x="54.3" y="556.90" width="2" height="1" fill="#525252"/><rect x="54.3" y="562.80" width="2" height="1" fill="#525252"/><rect x="54.3" y="568.70" width="2" height="1" fill="#525252"/><rect x="54.3" y="574.60" width="2" height="1" fill="#525252"/><rect x="46.3" y="580.50" width="10" height="1" fill="#525252"/><text x="47.8" y="588.00" font-size="6.3" fill="#a4a4a4">7</text><text x="47.8" y="594.00" font-size="6.3" fill="#a4a4a4">5</text><rect x="54.3" y="586.40" width="2" height="1" fill="#525252"/><rect x="54.3" y="592.30" width="2" height="1" fill="#525252"/><rect x="54.3" y="598.20" width="2" height="1" fill="#525252"/><rect x="54.3" y="604.10" width="2" height="1" fill="#525252"/><rect x="46.3" y="610.00" width="10" height="1" fill="#525252"/><text x="47.8" y="617.50" font-size="6.3" fill="#a4a4a4">8</text><text x="47.8" y="623.50" font-size="6.3" fill="#a4a4a4">0</text></svg>
<svg style="left:567px;top:52px" width="1" height="10" viewBox="0 0 1 10"><path d="M0.5 0 L0.5 10" stroke="#9a9a9a" stroke-width="1" stroke-dasharray="1 1"/></svg>
<div style="left:1013px;top:52px;width:10px;height:562px;background:#3a3a3a;"></div>
<div style="left:1022.4px;top:40px;width:1.9px;height:597px;background:#2b2b2b;"></div>
<div style="left:46.3px;top:614px;width:977.7px;height:10.5px;background:#363636;"></div>
<div style="left:46.3px;top:613.3px;width:977.7px;height:0.9px;background:#2c2c2c;"></div>
<div style="left:46.3px;top:614.2px;width:30px;height:10px;background:#3e3e3e;"></div>
<span class="t" style="left:48.8px;top:614.3px;font-size:6.8px;color:#e2e2e2;">33.33%</span>
<div style="left:76.3px;top:614.2px;width:14.5px;height:10px;background:#585858;"></div>
<svg style="left:80.2px;top:615.6px" width="7.4" height="7.4" viewBox="0 0 7 7"><circle cx="3.5" cy="3.5" r="3.2" fill="#d8d8d8"/><path d="M3.5 3.5 L6.5 1.8 L6.5 5.2 Z" fill="#585858"/><circle cx="3.5" cy="3.5" r="1" fill="#585858"/></svg>
<div style="left:91.2px;top:614.2px;width:106.3px;height:10px;background:#484848;"></div>
<div style="left:197.7px;top:614.2px;width:7.6px;height:10px;background:#555;"></div>
<span class="t" style="left:115px;top:614.3px;font-size:6.8px;color:#e6e6e6;">文档:5.93M/5.93M</span>
<svg style="left:199.3px;top:616.2px" width="4.6" height="6" viewBox="0 0 5 6"><path d="M0.5 0 L4.5 3 L0.5 6 Z" fill="#f0f0f0"/></svg>
<div style="left:1013px;top:614.2px;width:10px;height:10px;background:#4c4c4c;"></div>
<div style="left:46.3px;top:624.5px;width:977.7px;height:12.5px;background:#3e3e3e;"></div>
<div style="left:46.3px;top:624.5px;width:977.7px;height:1.2px;background:#2d2d2d;"></div>
<div style="left:46.3px;top:625.7px;width:8px;height:11px;background:#505050;border-top:1px solid #707070"></div>
<div style="left:54.3px;top:625.7px;width:31.5px;height:11px;background:#464646;border-right:1px solid #333;border-left:1px solid #333"></div>
<span class="t" style="left:59px;top:626.3px;font-size:7.2px;color:#8e8e8e;">时间轴</span>
<svg style="left:1011px;top:627.5px" width="10" height="7" viewBox="0 0 10 7"><path d="M0 2.5 L3 2.5 L1.5 4.5 Z" fill="#eee"/><rect x="4" y="0.5" width="6" height="1.2" fill="#eee"/><rect x="4" y="2.8" width="6" height="1.2" fill="#eee"/><rect x="4" y="5.1" width="6" height="1.2" fill="#eee"/></svg>
<div style="left:0px;top:636px;width:1200px;height:1px;background:#3d3d3d;"></div>
<div style="left:0px;top:636.9px;width:1200px;height:5.1px;background:linear-gradient(to bottom,#d4deea 0%,#e3ebf6 30%,#e6eef8 100%);"></div>
<div style="left:423px;top:139px;width:225.6px;height:400.6px;background:rgba(0,0,0,0.4);filter:blur(0.6px)"></div>
<svg style="left:422px;top:138px;overflow:hidden;background:#f5f5f5" width="225" height="400" viewBox="0 0 225 400"><defs><filter id="cvb" x="-5%" y="-5%" width="110%" height="110%"><feGaussianBlur stdDeviation="0.7"/></filter><filter id="cvs" x="0" y="0" width="100%" height="100%"><feGaussianBlur stdDeviation="0.35"/></filter></defs><g filter="url(#cvs)"><rect x="0" y="0" width="225" height="400" fill="#f5f5f5"/><rect x="104.1" y="227.6" width="20.8" height="20.8" fill="none" stroke="#000" stroke-opacity="0.03" stroke-width="0.8"/><rect x="133.1" y="74.0" width="24.9" height="20.8" fill="none" stroke="#000" stroke-opacity="0.03" stroke-width="0.8"/><rect x="178.8" y="40.8" width="16.6" height="12.5" fill="none" stroke="#000" stroke-opacity="0.02" stroke-width="0.8"/><rect x="182.9" y="281.5" width="8.3" height="24.9" fill="none" stroke="#000" stroke-opacity="0.03" stroke-width="0.8"/><rect x="220.3" y="264.9" width="24.9" height="33.2" fill="none" stroke="#000" stroke-opacity="0.02" stroke-width="0.8"/><rect x="4.5" y="215.1" width="8.3" height="8.3" fill="none" stroke="#000" stroke-opacity="0.02" stroke-width="0.8"/><rect x="58.4" y="15.9" width="20.8" height="16.6" fill="none" stroke="#000" stroke-opacity="0.02" stroke-width="0.8"/><rect x="191.2" y="211.0" width="33.2" height="16.6" fill="none" stroke="#000" stroke-opacity="0.02" stroke-width="0.8"/><rect x="149.7" y="186.1" width="16.6" height="20.8" fill="none" stroke="#000" stroke-opacity="0.03" stroke-width="0.8"/><rect x="224.4" y="339.6" width="33.2" height="16.6" fill="none" stroke="#000" stroke-opacity="0.02" stroke-width="0.8"/><rect x="54.3" y="119.7" width="8.3" height="24.9" fill="none" stroke="#000" stroke-opacity="0.03" stroke-width="0.8"/><rect x="91.6" y="339.6" width="20.8" height="8.3" fill="none" stroke="#000" stroke-opacity="0.03" stroke-width="0.8"/><rect x="191.2" y="3.5" width="12.5" height="8.3" fill="none" stroke="#000" stroke-opacity="0.02" stroke-width="0.8"/><rect x="224.4" y="161.2" width="8.3" height="24.9" fill="none" stroke="#000" stroke-opacity="0.03" stroke-width="0.8"/><rect x="178.8" y="111.4" width="8.3" height="16.6" fill="none" stroke="#000" stroke-opacity="0.02" stroke-width="0.8"/><rect x="220.3" y="306.4" width="8.3" height="12.5" fill="none" stroke="#000" stroke-opacity="0.02" stroke-width="0.8"/><rect x="25.2" y="24.2" width="20.8" height="12.5" fill="none" stroke="#000" stroke-opacity="0.03" stroke-width="0.8"/><rect x="46.0" y="206.8" width="33.2" height="12.5" fill="none" stroke="#000" stroke-opacity="0.02" stroke-width="0.8"/><rect x="87.5" y="161.2" width="12.5" height="8.3" fill="none" stroke="#000" stroke-opacity="0.02" stroke-width="0.8"/><rect x="220.3" y="323.0" width="16.6" height="8.3" fill="none" stroke="#000" stroke-opacity="0.02" stroke-width="0.8"/><rect x="91.6" y="343.8" width="33.2" height="24.9" fill="none" stroke="#000" stroke-opacity="0.02" stroke-width="0.8"/><rect x="224.4" y="86.5" width="16.6" height="8.3" fill="none" stroke="#000" stroke-opacity="0.03" stroke-width="0.8"/><rect x="75.0" y="119.7" width="8.3" height="8.3" fill="none" stroke="#000" stroke-opacity="0.02" stroke-width="0.8"/><rect x="133.1" y="98.9" width="24.9" height="16.6" fill="none" stroke="#000" stroke-opacity="0.02" stroke-width="0.8"/><rect x="104.1" y="385.3" width="20.8" height="24.9" fill="none" stroke="#000" stroke-opacity="0.02" stroke-width="0.8"/><rect x="87.5" y="252.5" width="16.6" height="12.5" fill="none" stroke="#000" stroke-opacity="0.03" stroke-width="0.8"/><rect x="58.4" y="78.2" width="33.2" height="33.2" fill="none" stroke="#000" stroke-opacity="0.03" stroke-width="0.8"/><rect x="46.0" y="381.1" width="20.8" height="24.9" fill="none" stroke="#000" stroke-opacity="0.02" stroke-width="0.8"/><rect x="12.8" y="45.0" width="24.9" height="16.6" fill="none" stroke="#000" stroke-opacity="0.02" stroke-width="0.8"/><rect x="162.2" y="103.1" width="24.9" height="20.8" fill="none" stroke="#000" stroke-opacity="0.02" stroke-width="0.8"/><rect x="41.8" y="289.8" width="8.3" height="12.5" fill="none" stroke="#000" stroke-opacity="0.02" stroke-width="0.8"/><rect x="129.0" y="343.8" width="24.9" height="8.3" fill="none" stroke="#000" stroke-opacity="0.02" stroke-width="0.8"/><rect x="207.8" y="82.3" width="8.3" height="8.3" fill="none" stroke="#000" stroke-opacity="0.02" stroke-width="0.8"/><rect x="104.1" y="24.2" width="12.5" height="16.6" fill="none" stroke="#000" stroke-opacity="0.02" stroke-width="0.8"/><rect x="129.0" y="53.3" width="16.6" height="12.5" fill="none" stroke="#000" stroke-opacity="0.03" stroke-width="0.8"/><rect x="224.4" y="264.9" width="33.2" height="24.9" fill="none" stroke="#000" stroke-opacity="0.03" stroke-width="0.8"/><rect x="33.5" y="15.9" width="8.3" height="20.8" fill="none" stroke="#000" stroke-opacity="0.03" stroke-width="0.8"/><rect x="158.0" y="385.3" width="8.3" height="24.9" fill="none" stroke="#000" stroke-opacity="0.03" stroke-width="0.8"/><rect x="112.4" y="294.0" width="16.6" height="12.5" fill="none" stroke="#000" stroke-opacity="0.03" stroke-width="0.8"/><rect x="21.1" y="219.3" width="33.2" height="8.3" fill="none" stroke="#000" stroke-opacity="0.03" stroke-width="0.8"/><rect x="166.3" y="281.5" width="16.6" height="16.6" fill="none" stroke="#000" stroke-opacity="0.02" stroke-width="0.8"/><rect x="108.2" y="32.5" width="20.8" height="8.3" fill="none" stroke="#000" stroke-opacity="0.03" stroke-width="0.8"/><rect x="129.0" y="252.5" width="20.8" height="20.8" fill="none" stroke="#000" stroke-opacity="0.03" stroke-width="0.8"/><rect x="137.3" y="32.5" width="33.2" height="8.3" fill="none" stroke="#000" stroke-opacity="0.03" stroke-width="0.8"/><rect x="199.5" y="294.0" width="20.8" height="33.2" fill="none" stroke="#000" stroke-opacity="0.03" stroke-width="0.8"/><rect x="104.1" y="186.1" width="24.9" height="8.3" fill="none" stroke="#000" stroke-opacity="0.03" stroke-width="0.8"/><rect x="116.5" y="128.0" width="8.3" height="20.8" fill="none" stroke="#000" stroke-opacity="0.02" stroke-width="0.8"/><rect x="216.1" y="49.1" width="24.9" height="33.2" fill="none" stroke="#000" stroke-opacity="0.03" stroke-width="0.8"/><rect x="58.4" y="7.6" width="16.6" height="12.5" fill="none" stroke="#000" stroke-opacity="0.03" stroke-width="0.8"/><rect x="46.0" y="69.9" width="16.6" height="33.2" fill="none" stroke="#000" stroke-opacity="0.03" stroke-width="0.8"/><rect x="112.4" y="98.9" width="20.8" height="33.2" fill="none" stroke="#000" stroke-opacity="0.02" stroke-width="0.8"/><rect x="145.6" y="323.0" width="12.5" height="12.5" fill="none" stroke="#000" stroke-opacity="0.02" stroke-width="0.8"/><rect x="133.1" y="128.0" width="12.5" height="12.5" fill="none" stroke="#000" stroke-opacity="0.02" stroke-width="0.8"/><rect x="191.2" y="339.6" width="33.2" height="8.3" fill="none" stroke="#000" stroke-opacity="0.03" stroke-width="0.8"/><rect x="62.6" y="69.9" width="20.8" height="20.8" fill="none" stroke="#000" stroke-opacity="0.02" stroke-width="0.8"/><rect x="50.1" y="169.5" width="33.2" height="24.9" fill="none" stroke="#000" stroke-opacity="0.02" stroke-width="0.8"/><rect x="75.0" y="339.6" width="24.9" height="20.8" fill="none" stroke="#000" stroke-opacity="0.02" stroke-width="0.8"/><rect x="187.1" y="111.4" width="24.9" height="8.3" fill="none" stroke="#000" stroke-opacity="0.03" stroke-width="0.8"/><rect x="66.7" y="144.6" width="33.2" height="24.9" fill="none" stroke="#000" stroke-opacity="0.02" stroke-width="0.8"/><rect x="33.5" y="186.1" width="8.3" height="16.6" fill="none" stroke="#000" stroke-opacity="0.02" stroke-width="0.8"/><line x1="33.5" y1="18.8" x2="33.5" y2="44.4" stroke="#000" stroke-opacity="0.05" stroke-width="0.8" stroke-linecap="butt"/><line x1="145.6" y1="262.0" x2="145.6" y2="292.6" stroke="#000" stroke-opacity="0.08" stroke-width="0.8" stroke-linecap="butt"/><line x1="158.0" y1="79.7" x2="158.0" y2="101.0" stroke="#000" stroke-opacity="0.04" stroke-width="0.8" stroke-linecap="butt"/><line x1="4.5" y1="188.9" x2="4.5" y2="216.9" stroke="#000" stroke-opacity="0.04" stroke-width="0.8" stroke-linecap="butt"/><line x1="62.6" y1="138.3" x2="62.6" y2="165.8" stroke="#000" stroke-opacity="0.06" stroke-width="0.8" stroke-linecap="butt"/><line x1="141.4" y1="302.5" x2="141.4" y2="321.5" stroke="#000" stroke-opacity="0.07" stroke-width="0.8" stroke-linecap="butt"/><line x1="207.8" y1="34.9" x2="207.8" y2="69.0" stroke="#000" stroke-opacity="0.07" stroke-width="0.8" stroke-linecap="butt"/><line x1="29.4" y1="181.4" x2="29.4" y2="206.9" stroke="#000" stroke-opacity="0.08" stroke-width="0.8" stroke-linecap="butt"/><line x1="87.5" y1="227.5" x2="87.5" y2="260.1" stroke="#000" stroke-opacity="0.07" stroke-width="0.8" stroke-linecap="butt"/><line x1="216.1" y1="185.5" x2="216.1" y2="211.7" stroke="#000" stroke-opacity="0.04" stroke-width="0.8" stroke-linecap="butt"/><line x1="166.3" y1="327.3" x2="166.3" y2="353.3" stroke="#000" stroke-opacity="0.07" stroke-width="0.8" stroke-linecap="butt"/><line x1="50.1" y1="360.0" x2="50.1" y2="395.4" stroke="#000" stroke-opacity="0.08" stroke-width="0.8" stroke-linecap="butt"/><line x1="124.8" y1="316.3" x2="124.8" y2="333.3" stroke="#000" stroke-opacity="0.08" stroke-width="0.8" stroke-linecap="butt"/><line x1="195.4" y1="139.4" x2="195.4" y2="149.7" stroke="#000" stroke-opacity="0.05" stroke-width="0.8" stroke-linecap="butt"/><line x1="124.8" y1="307.3" x2="124.8" y2="328.9" stroke="#000" stroke-opacity="0.03" stroke-width="0.8" stroke-linecap="butt"/><line x1="182.9" y1="25.6" x2="182.9" y2="56.0" stroke="#000" stroke-opacity="0.04" stroke-width="0.8" stroke-linecap="butt"/><line x1="79.2" y1="315.2" x2="79.2" y2="327.1" stroke="#000" stroke-opacity="0.04" stroke-width="0.8" stroke-linecap="butt"/><line x1="116.5" y1="289.4" x2="116.5" y2="320.9" stroke="#000" stroke-opacity="0.07" stroke-width="0.8" stroke-linecap="butt"/><line x1="216.1" y1="197.0" x2="216.1" y2="231.6" stroke="#000" stroke-opacity="0.03" stroke-width="0.8" stroke-linecap="butt"/><line x1="50.1" y1="210.7" x2="50.1" y2="226.8" stroke="#000" stroke-opacity="0.07" stroke-width="0.8" stroke-linecap="butt"/><line x1="145.6" y1="209.1" x2="145.6" y2="240.7" stroke="#000" stroke-opacity="0.06" stroke-width="0.8" stroke-linecap="butt"/><line x1="70.9" y1="152.5" x2="70.9" y2="184.2" stroke="#000" stroke-opacity="0.08" stroke-width="0.8" stroke-linecap="butt"/><line x1="50.1" y1="340.3" x2="50.1" y2="375.4" stroke="#000" stroke-opacity="0.06" stroke-width="0.8" stroke-linecap="butt"/><line x1="129.0" y1="80.4" x2="129.0" y2="103.4" stroke="#000" stroke-opacity="0.06" stroke-width="0.8" stroke-linecap="butt"/><line x1="137.3" y1="11.1" x2="137.3" y2="46.2" stroke="#000" stroke-opacity="0.06" stroke-width="0.8" stroke-linecap="butt"/><line x1="91.6" y1="320.4" x2="91.6" y2="344.2" stroke="#000" stroke-opacity="0.06" stroke-width="0.8" stroke-linecap="butt"/><line x1="158.0" y1="26.4" x2="158.0" y2="49.4" stroke="#000" stroke-opacity="0.05" stroke-width="0.8" stroke-linecap="butt"/><line x1="216.1" y1="369.4" x2="216.1" y2="384.9" stroke="#000" stroke-opacity="0.06" stroke-width="0.8" stroke-linecap="butt"/><line x1="29.4" y1="173.5" x2="29.4" y2="204.3" stroke="#000" stroke-opacity="0.08" stroke-width="0.8" stroke-linecap="butt"/><line x1="108.2" y1="126.9" x2="108.2" y2="140.2" stroke="#000" stroke-opacity="0.06" stroke-width="0.8" stroke-linecap="butt"/><line x1="212.0" y1="51.8" x2="212.0" y2="81.6" stroke="#000" stroke-opacity="0.03" stroke-width="0.8" stroke-linecap="butt"/><line x1="46.0" y1="90.9" x2="46.0" y2="118.1" stroke="#000" stroke-opacity="0.05" stroke-width="0.8" stroke-linecap="butt"/><line x1="83.3" y1="247.9" x2="83.3" y2="258.8" stroke="#000" stroke-opacity="0.07" stroke-width="0.8" stroke-linecap="butt"/><line x1="29.4" y1="204.2" x2="29.4" y2="219.2" stroke="#000" stroke-opacity="0.04" stroke-width="0.8" stroke-linecap="butt"/><line x1="120.7" y1="174.7" x2="120.7" y2="193.2" stroke="#000" stroke-opacity="0.05" stroke-width="0.8" stroke-linecap="butt"/><line x1="120.7" y1="63.9" x2="120.7" y2="77.6" stroke="#000" stroke-opacity="0.06" stroke-width="0.8" stroke-linecap="butt"/><line x1="145.6" y1="211.8" x2="145.6" y2="243.7" stroke="#000" stroke-opacity="0.06" stroke-width="0.8" stroke-linecap="butt"/><line x1="195.4" y1="93.1" x2="195.4" y2="121.8" stroke="#000" stroke-opacity="0.07" stroke-width="0.8" stroke-linecap="butt"/><line x1="203.7" y1="126.3" x2="203.7" y2="143.2" stroke="#000" stroke-opacity="0.08" stroke-width="0.8" stroke-linecap="butt"/><line x1="50.1" y1="399.3" x2="50.1" y2="400.0" stroke="#000" stroke-opacity="0.04" stroke-width="0.8" stroke-linecap="butt"/><line x1="54.3" y1="290.6" x2="54.3" y2="305.9" stroke="#000" stroke-opacity="0.04" stroke-width="0.8" stroke-linecap="butt"/><line x1="191.2" y1="168.7" x2="191.2" y2="198.8" stroke="#000" stroke-opacity="0.04" stroke-width="0.8" stroke-linecap="butt"/><line x1="91.6" y1="274.1" x2="91.6" y2="282.6" stroke="#000" stroke-opacity="0.04" stroke-width="0.8" stroke-linecap="butt"/><line x1="153.9" y1="364.5" x2="153.9" y2="399.7" stroke="#000" stroke-opacity="0.04" stroke-width="0.8" stroke-linecap="butt"/><line x1="116.5" y1="303.3" x2="116.5" y2="325.3" stroke="#000" stroke-opacity="0.07" stroke-width="0.8" stroke-linecap="butt"/><line x1="46.0" y1="28.2" x2="46.0" y2="39.2" stroke="#000" stroke-opacity="0.03" stroke-width="0.8" stroke-linecap="butt"/><line x1="124.8" y1="205.9" x2="124.8" y2="229.9" stroke="#000" stroke-opacity="0.04" stroke-width="0.8" stroke-linecap="butt"/><line x1="41.8" y1="81.6" x2="41.8" y2="113.1" stroke="#000" stroke-opacity="0.08" stroke-width="0.8" stroke-linecap="butt"/><line x1="212.0" y1="38.1" x2="212.0" y2="47.8" stroke="#000" stroke-opacity="0.08" stroke-width="0.8" stroke-linecap="butt"/><line x1="104.1" y1="305.9" x2="104.1" y2="323.0" stroke="#000" stroke-opacity="0.06" stroke-width="0.8" stroke-linecap="butt"/><line x1="116.5" y1="172.0" x2="116.5" y2="196.9" stroke="#000" stroke-opacity="0.03" stroke-width="0.8" stroke-linecap="butt"/><line x1="158.0" y1="337.7" x2="158.0" y2="350.8" stroke="#000" stroke-opacity="0.05" stroke-width="0.8" stroke-linecap="butt"/><line x1="170.5" y1="162.1" x2="170.5" y2="175.6" stroke="#000" stroke-opacity="0.04" stroke-width="0.8" stroke-linecap="butt"/><line x1="116.5" y1="6.2" x2="116.5" y2="39.2" stroke="#000" stroke-opacity="0.07" stroke-width="0.8" stroke-linecap="butt"/><line x1="162.2" y1="344.3" x2="162.2" y2="369.9" stroke="#000" stroke-opacity="0.05" stroke-width="0.8" stroke-linecap="butt"/><line x1="137.3" y1="201.7" x2="137.3" y2="237.2" stroke="#000" stroke-opacity="0.07" stroke-width="0.8" stroke-linecap="butt"/><line x1="58.4" y1="364.5" x2="58.4" y2="393.4" stroke="#000" stroke-opacity="0.07" stroke-width="0.8" stroke-linecap="butt"/><line x1="187.1" y1="162.3" x2="187.1" y2="195.4" stroke="#000" stroke-opacity="0.08" stroke-width="0.8" stroke-linecap="butt"/><line x1="158.0" y1="306.9" x2="158.0" y2="336.3" stroke="#000" stroke-opacity="0.05" stroke-width="0.8" stroke-linecap="butt"/><line x1="166.3" y1="28.2" x2="166.3" y2="45.8" stroke="#000" stroke-opacity="0.06" stroke-width="0.8" stroke-linecap="butt"/><line x1="4.5" y1="142.3" x2="4.5" y2="168.1" stroke="#000" stroke-opacity="0.06" stroke-width="0.8" stroke-linecap="butt"/><line x1="54.3" y1="377.9" x2="54.3" y2="400.0" stroke="#000" stroke-opacity="0.05" stroke-width="0.8" stroke-linecap="butt"/><line x1="149.7" y1="227.8" x2="149.7" y2="250.8" stroke="#000" stroke-opacity="0.05" stroke-width="0.8" stroke-linecap="butt"/><line x1="228.6" y1="256.9" x2="228.6" y2="284.5" stroke="#000" stroke-opacity="0.07" stroke-width="0.8" stroke-linecap="butt"/><line x1="224.4" y1="9.1" x2="224.4" y2="34.4" stroke="#000" stroke-opacity="0.07" stroke-width="0.8" stroke-linecap="butt"/><line x1="58.4" y1="160.6" x2="58.4" y2="170.0" stroke="#000" stroke-opacity="0.04" stroke-width="0.8" stroke-linecap="butt"/><line x1="87.5" y1="39.4" x2="87.5" y2="54.4" stroke="#000" stroke-opacity="0.08" stroke-width="0.8" stroke-linecap="butt"/><line x1="124.8" y1="203.1" x2="124.8" y2="238.2" stroke="#000" stroke-opacity="0.06" stroke-width="0.8" stroke-linecap="butt"/><line x1="224.4" y1="255.2" x2="224.4" y2="285.9" stroke="#000" stroke-opacity="0.03" stroke-width="0.8" stroke-linecap="butt"/><line x1="137.3" y1="303.7" x2="137.3" y2="313.0" stroke="#000" stroke-opacity="0.08" stroke-width="0.8" stroke-linecap="butt"/><line x1="37.7" y1="188.7" x2="37.7" y2="201.4" stroke="#000" stroke-opacity="0.06" stroke-width="0.8" stroke-linecap="butt"/><line x1="141.4" y1="23.4" x2="141.4" y2="57.9" stroke="#000" stroke-opacity="0.05" stroke-width="0.8" stroke-linecap="butt"/><line x1="120.7" y1="239.1" x2="120.7" y2="257.4" stroke="#000" stroke-opacity="0.05" stroke-width="0.8" stroke-linecap="butt"/><line x1="149.7" y1="224.3" x2="149.7" y2="240.2" stroke="#000" stroke-opacity="0.07" stroke-width="0.8" stroke-linecap="butt"/><line x1="66.7" y1="5.6" x2="66.7" y2="20.5" stroke="#000" stroke-opacity="0.03" stroke-width="0.8" stroke-linecap="butt"/><line x1="37.7" y1="301.9" x2="37.7" y2="320.8" stroke="#000" stroke-opacity="0.08" stroke-width="0.8" stroke-linecap="butt"/><line x1="170.5" y1="20.1" x2="170.5" y2="55.7" stroke="#000" stroke-opacity="0.08" stroke-width="0.8" stroke-linecap="butt"/><line x1="16.9" y1="362.2" x2="16.9" y2="382.2" stroke="#000" stroke-opacity="0.06" stroke-width="0.8" stroke-linecap="butt"/><line x1="220.3" y1="97.5" x2="220.3" y2="120.1" stroke="#000" stroke-opacity="0.08" stroke-width="0.8" stroke-linecap="butt"/><line x1="166.3" y1="187.3" x2="166.3" y2="222.7" stroke="#000" stroke-opacity="0.07" stroke-width="0.8" stroke-linecap="butt"/><line x1="137.3" y1="46.0" x2="137.3" y2="71.5" stroke="#000" stroke-opacity="0.06" stroke-width="0.8" stroke-linecap="butt"/><line x1="46.0" y1="20.8" x2="46.0" y2="43.6" stroke="#000" stroke-opacity="0.04" stroke-width="0.8" stroke-linecap="butt"/><line x1="99.9" y1="267.2" x2="99.9" y2="287.9" stroke="#000" stroke-opacity="0.04" stroke-width="0.8" stroke-linecap="butt"/><line x1="133.1" y1="167.8" x2="133.1" y2="197.6" stroke="#000" stroke-opacity="0.06" stroke-width="0.8" stroke-linecap="butt"/><line x1="228.6" y1="381.1" x2="228.6" y2="400.0" stroke="#000" stroke-opacity="0.04" stroke-width="0.8" stroke-linecap="butt"/><line x1="29.4" y1="357.1" x2="29.4" y2="387.0" stroke="#000" stroke-opacity="0.06" stroke-width="0.8" stroke-linecap="butt"/><line x1="83.3" y1="108.6" x2="83.3" y2="135.8" stroke="#000" stroke-opacity="0.06" stroke-width="0.8" stroke-linecap="butt"/><line x1="137.3" y1="253.2" x2="137.3" y2="282.3" stroke="#000" stroke-opacity="0.04" stroke-width="0.8" stroke-linecap="butt"/><line x1="58.4" y1="391.9" x2="58.4" y2="400.0" stroke="#000" stroke-opacity="0.08" stroke-width="0.8" stroke-linecap="butt"/><line x1="12.8" y1="24.3" x2="12.8" y2="39.9" stroke="#000" stroke-opacity="0.05" stroke-width="0.8" stroke-linecap="butt"/><line x1="141.4" y1="41.0" x2="141.4" y2="64.2" stroke="#000" stroke-opacity="0.03" stroke-width="0.8" stroke-linecap="butt"/><line x1="21.1" y1="270.5" x2="21.1" y2="293.9" stroke="#000" stroke-opacity="0.06" stroke-width="0.8" stroke-linecap="butt"/><line x1="87.5" y1="191.4" x2="87.5" y2="205.3" stroke="#000" stroke-opacity="0.05" stroke-width="0.8" stroke-linecap="butt"/><line x1="170.5" y1="335.4" x2="170.5" y2="345.5" stroke="#000" stroke-opacity="0.04" stroke-width="0.8" stroke-linecap="butt"/><line x1="182.9" y1="249.5" x2="182.9" y2="279.0" stroke="#000" stroke-opacity="0.04" stroke-width="0.8" stroke-linecap="butt"/><line x1="95.8" y1="103.2" x2="95.8" y2="133.9" stroke="#000" stroke-opacity="0.05" stroke-width="0.8" stroke-linecap="butt"/><line x1="149.7" y1="395.7" x2="149.7" y2="400.0" stroke="#000" stroke-opacity="0.06" stroke-width="0.8" stroke-linecap="butt"/><line x1="170.5" y1="368.3" x2="170.5" y2="388.3" stroke="#000" stroke-opacity="0.05" stroke-width="0.8" stroke-linecap="butt"/><line x1="25.2" y1="350.1" x2="25.2" y2="360.3" stroke="#000" stroke-opacity="0.03" stroke-width="0.8" stroke-linecap="butt"/><line x1="129.0" y1="193.9" x2="129.0" y2="221.1" stroke="#000" stroke-opacity="0.05" stroke-width="0.8" stroke-linecap="butt"/><line x1="174.6" y1="30.4" x2="174.6" y2="44.4" stroke="#000" stroke-opacity="0.07" stroke-width="0.8" stroke-linecap="butt"/><line x1="21.1" y1="121.5" x2="21.1" y2="149.8" stroke="#000" stroke-opacity="0.07" stroke-width="0.8" stroke-linecap="butt"/><line x1="66.7" y1="57.2" x2="66.7" y2="75.2" stroke="#000" stroke-opacity="0.07" stroke-width="0.8" stroke-linecap="butt"/><line x1="83.3" y1="47.0" x2="83.3" y2="74.8" stroke="#000" stroke-opacity="0.06" stroke-width="0.8" stroke-linecap="butt"/><line x1="207.8" y1="376.0" x2="207.8" y2="400.0" stroke="#000" stroke-opacity="0.05" stroke-width="0.8" stroke-linecap="butt"/><line x1="182.9" y1="121.9" x2="182.9" y2="138.8" stroke="#000" stroke-opacity="0.05" stroke-width="0.8" stroke-linecap="butt"/><line x1="212.0" y1="357.9" x2="212.0" y2="372.8" stroke="#000" stroke-opacity="0.05" stroke-width="0.8" stroke-linecap="butt"/><line x1="83.3" y1="145.3" x2="83.3" y2="164.4" stroke="#000" stroke-opacity="0.05" stroke-width="0.8" stroke-linecap="butt"/><line x1="46.0" y1="225.5" x2="46.0" y2="255.8" stroke="#000" stroke-opacity="0.06" stroke-width="0.8" stroke-linecap="butt"/><line x1="191.2" y1="225.1" x2="191.2" y2="238.1" stroke="#000" stroke-opacity="0.07" stroke-width="0.8" stroke-linecap="butt"/><line x1="199.5" y1="112.6" x2="199.5" y2="121.2" stroke="#000" stroke-opacity="0.06" stroke-width="0.8" stroke-linecap="butt"/><line x1="124.8" y1="227.0" x2="124.8" y2="262.0" stroke="#000" stroke-opacity="0.07" stroke-width="0.8" stroke-linecap="butt"/><line x1="182.9" y1="25.6" x2="182.9" y2="48.9" stroke="#000" stroke-opacity="0.07" stroke-width="0.8" stroke-linecap="butt"/><line x1="21.1" y1="32.7" x2="21.1" y2="61.3" stroke="#000" stroke-opacity="0.08" stroke-width="0.8" stroke-linecap="butt"/><line x1="21.1" y1="253.7" x2="21.1" y2="265.7" stroke="#000" stroke-opacity="0.07" stroke-width="0.8" stroke-linecap="butt"/><line x1="149.7" y1="98.2" x2="149.7" y2="112.4" stroke="#000" stroke-opacity="0.07" stroke-width="0.8" stroke-linecap="butt"/><line x1="120.7" y1="305.9" x2="120.7" y2="324.9" stroke="#000" stroke-opacity="0.05" stroke-width="0.8" stroke-linecap="butt"/><line x1="220.3" y1="269.0" x2="220.3" y2="290.8" stroke="#000" stroke-opacity="0.06" stroke-width="0.8" stroke-linecap="butt"/><line x1="166.3" y1="283.3" x2="166.3" y2="316.9" stroke="#000" stroke-opacity="0.05" stroke-width="0.8" stroke-linecap="butt"/><line x1="187.1" y1="266.7" x2="187.1" y2="298.6" stroke="#000" stroke-opacity="0.07" stroke-width="0.8" stroke-linecap="butt"/><line x1="191.2" y1="355.5" x2="191.2" y2="390.3" stroke="#000" stroke-opacity="0.07" stroke-width="0.8" stroke-linecap="butt"/><line x1="120.7" y1="284.0" x2="120.7" y2="314.5" stroke="#000" stroke-opacity="0.05" stroke-width="0.8" stroke-linecap="butt"/><line x1="95.8" y1="58.5" x2="95.8" y2="87.2" stroke="#000" stroke-opacity="0.08" stroke-width="0.8" stroke-linecap="butt"/><line x1="87.5" y1="67.1" x2="87.5" y2="80.8" stroke="#000" stroke-opacity="0.05" stroke-width="0.8" stroke-linecap="butt"/><line x1="66.7" y1="387.9" x2="66.7" y2="397.6" stroke="#000" stroke-opacity="0.05" stroke-width="0.8" stroke-linecap="butt"/><line x1="29.4" y1="259.2" x2="29.4" y2="288.9" stroke="#000" stroke-opacity="0.04" stroke-width="0.8" stroke-linecap="butt"/><line x1="16.9" y1="183.5" x2="16.9" y2="207.9" stroke="#000" stroke-opacity="0.08" stroke-width="0.8" stroke-linecap="butt"/><line x1="8.6" y1="43.5" x2="8.6" y2="56.6" stroke="#000" stroke-opacity="0.04" stroke-width="0.8" stroke-linecap="butt"/><line x1="54.3" y1="286.9" x2="54.3" y2="311.6" stroke="#000" stroke-opacity="0.04" stroke-width="0.8" stroke-linecap="butt"/><line x1="41.8" y1="112.4" x2="41.8" y2="125.3" stroke="#000" stroke-opacity="0.07" stroke-width="0.8" stroke-linecap="butt"/><line x1="70.9" y1="219.3" x2="70.9" y2="250.2" stroke="#000" stroke-opacity="0.06" stroke-width="0.8" stroke-linecap="butt"/><line x1="62.6" y1="355.0" x2="62.6" y2="388.6" stroke="#000" stroke-opacity="0.05" stroke-width="0.8" stroke-linecap="butt"/><line x1="124.8" y1="382.8" x2="124.8" y2="400.0" stroke="#000" stroke-opacity="0.04" stroke-width="0.8" stroke-linecap="butt"/><line x1="12.8" y1="379.0" x2="12.8" y2="400.0" stroke="#000" stroke-opacity="0.05" stroke-width="0.8" stroke-linecap="butt"/><line x1="120.7" y1="206.3" x2="120.7" y2="222.0" stroke="#000" stroke-opacity="0.08" stroke-width="0.8" stroke-linecap="butt"/><line x1="149.7" y1="95.0" x2="149.7" y2="103.4" stroke="#000" stroke-opacity="0.06" stroke-width="0.8" stroke-linecap="butt"/><line x1="87.5" y1="318.7" x2="87.5" y2="346.7" stroke="#000" stroke-opacity="0.06" stroke-width="0.8" stroke-linecap="butt"/><line x1="37.7" y1="62.8" x2="37.7" y2="79.8" stroke="#000" stroke-opacity="0.04" stroke-width="0.8" stroke-linecap="butt"/><line x1="199.5" y1="206.5" x2="199.5" y2="232.3" stroke="#000" stroke-opacity="0.08" stroke-width="0.8" stroke-linecap="butt"/><line x1="62.6" y1="213.8" x2="62.6" y2="226.0" stroke="#000" stroke-opacity="0.07" stroke-width="0.8" stroke-linecap="butt"/><line x1="0.3" y1="328.6" x2="0.3" y2="360.3" stroke="#000" stroke-opacity="0.08" stroke-width="0.8" stroke-linecap="butt"/><line x1="21.1" y1="108.0" x2="21.1" y2="136.0" stroke="#000" stroke-opacity="0.04" stroke-width="0.8" stroke-linecap="butt"/><line x1="108.2" y1="187.5" x2="108.2" y2="222.2" stroke="#000" stroke-opacity="0.06" stroke-width="0.8" stroke-linecap="butt"/><line x1="195.4" y1="121.4" x2="195.4" y2="151.5" stroke="#000" stroke-opacity="0.05" stroke-width="0.8" stroke-linecap="butt"/><line x1="207.8" y1="36.4" x2="207.8" y2="67.5" stroke="#000" stroke-opacity="0.04" stroke-width="0.8" stroke-linecap="butt"/><line x1="124.8" y1="210.3" x2="124.8" y2="222.7" stroke="#000" stroke-opacity="0.08" stroke-width="0.8" stroke-linecap="butt"/><line x1="70.9" y1="124.3" x2="70.9" y2="134.4" stroke="#000" stroke-opacity="0.05" stroke-width="0.8" stroke-linecap="butt"/><line x1="108.2" y1="286.1" x2="108.2" y2="304.1" stroke="#000" stroke-opacity="0.07" stroke-width="0.8" stroke-linecap="butt"/><line x1="25.2" y1="157.7" x2="25.2" y2="178.6" stroke="#000" stroke-opacity="0.08" stroke-width="0.8" stroke-linecap="butt"/><line x1="187.1" y1="261.6" x2="187.1" y2="269.9" stroke="#000" stroke-opacity="0.05" stroke-width="0.8" stroke-linecap="butt"/><line x1="162.2" y1="95.0" x2="162.2" y2="118.8" stroke="#000" stroke-opacity="0.06" stroke-width="0.8" stroke-linecap="butt"/><line x1="4.5" y1="396.6" x2="4.5" y2="400.0" stroke="#000" stroke-opacity="0.04" stroke-width="0.8" stroke-linecap="butt"/><line x1="141.4" y1="116.2" x2="141.4" y2="134.7" stroke="#000" stroke-opacity="0.06" stroke-width="0.8" stroke-linecap="butt"/><line x1="70.9" y1="135.0" x2="70.9" y2="153.9" stroke="#000" stroke-opacity="0.07" stroke-width="0.8" stroke-linecap="butt"/><line x1="58.4" y1="80.0" x2="58.4" y2="108.5" stroke="#000" stroke-opacity="0.05" stroke-width="0.8" stroke-linecap="butt"/><line x1="216.1" y1="225.1" x2="216.1" y2="253.4" stroke="#000" stroke-opacity="0.05" stroke-width="0.8" stroke-linecap="butt"/><line x1="187.1" y1="36.9" x2="187.1" y2="48.9" stroke="#000" stroke-opacity="0.04" stroke-width="0.8" stroke-linecap="butt"/><line x1="153.9" y1="283.3" x2="153.9" y2="296.4" stroke="#000" stroke-opacity="0.05" stroke-width="0.8" stroke-linecap="butt"/><line x1="191.2" y1="237.1" x2="191.2" y2="247.6" stroke="#000" stroke-opacity="0.04" stroke-width="0.8" stroke-linecap="butt"/><line x1="37.7" y1="49.6" x2="37.7" y2="69.0" stroke="#000" stroke-opacity="0.03" stroke-width="0.8" stroke-linecap="butt"/><line x1="58.4" y1="388.7" x2="58.4" y2="399.0" stroke="#111" stroke-opacity="0.03" stroke-width="1.15" stroke-linecap="round"/><line x1="58.4" y1="281.2" x2="58.4" y2="294.6" stroke="#111" stroke-opacity="0.03" stroke-width="1.15" stroke-linecap="round"/><line x1="58.4" y1="240.4" x2="58.4" y2="252.6" stroke="#111" stroke-opacity="0.03" stroke-width="1.15" stroke-linecap="round"/><line x1="62.6" y1="100.2" x2="62.6" y2="110.2" stroke="#111" stroke-opacity="0.03" stroke-width="1.15" stroke-linecap="round"/><line x1="62.6" y1="121.2" x2="62.6" y2="131.6" stroke="#111" stroke-opacity="0.03" stroke-width="1.15" stroke-linecap="round"/><line x1="62.6" y1="393.2" x2="62.6" y2="399.0" stroke="#111" stroke-opacity="0.04" stroke-width="1.15" stroke-linecap="round"/><line x1="62.6" y1="371.0" x2="62.6" y2="383.8" stroke="#111" stroke-opacity="0.04" stroke-width="1.15" stroke-linecap="round"/><line x1="62.6" y1="351.5" x2="62.6" y2="362.8" stroke="#111" stroke-opacity="0.03" stroke-width="1.15" stroke-linecap="round"/><line x1="62.6" y1="329.9" x2="62.6" y2="341.8" stroke="#111" stroke-opacity="0.04" stroke-width="1.15" stroke-linecap="round"/><line x1="62.6" y1="309.1" x2="62.6" y2="320.8" stroke="#111" stroke-opacity="0.03" stroke-width="1.15" stroke-linecap="round"/><line x1="62.6" y1="288.4" x2="62.6" y2="299.8" stroke="#111" stroke-opacity="0.04" stroke-width="1.15" stroke-linecap="round"/><line x1="62.6" y1="245.4" x2="62.6" y2="257.8" stroke="#111" stroke-opacity="0.04" stroke-width="1.15" stroke-linecap="round"/><line x1="62.6" y1="224.3" x2="62.6" y2="236.8" stroke="#111" stroke-opacity="0.03" stroke-width="1.15" stroke-linecap="round"/><line x1="66.7" y1="11.0" x2="66.7" y2="22.5" stroke="#111" stroke-opacity="0.03" stroke-width="1.15" stroke-linecap="round"/><line x1="66.7" y1="53.0" x2="66.7" y2="65.3" stroke="#111" stroke-opacity="0.03" stroke-width="1.15" stroke-linecap="round"/><line x1="66.7" y1="116.0" x2="66.7" y2="126.1" stroke="#111" stroke-opacity="0.04" stroke-width="1.15" stroke-linecap="round"/><line x1="66.7" y1="137.0" x2="66.7" y2="150.3" stroke="#111" stroke-opacity="0.03" stroke-width="1.15" stroke-linecap="round"/><line x1="66.7" y1="158.0" x2="66.7" y2="170.9" stroke="#111" stroke-opacity="0.03" stroke-width="1.15" stroke-linecap="round"/><line x1="66.7" y1="398.1" x2="66.7" y2="399.0" stroke="#111" stroke-opacity="0.04" stroke-width="1.15" stroke-linecap="round"/><line x1="66.7" y1="378.8" x2="66.7" y2="389.0" stroke="#111" stroke-opacity="0.04" stroke-width="1.15" stroke-linecap="round"/><line x1="66.7" y1="357.7" x2="66.7" y2="368.0" stroke="#111" stroke-opacity="0.04" stroke-width="1.15" stroke-linecap="round"/><line x1="66.7" y1="315.2" x2="66.7" y2="326.0" stroke="#111" stroke-opacity="0.03" stroke-width="1.15" stroke-linecap="round"/><line x1="66.7" y1="271.0" x2="66.7" y2="284.0" stroke="#111" stroke-opacity="0.04" stroke-width="1.15" stroke-linecap="round"/><line x1="66.7" y1="251.7" x2="66.7" y2="263.0" stroke="#111" stroke-opacity="0.03" stroke-width="1.15" stroke-linecap="round"/><line x1="66.7" y1="211.0" x2="66.7" y2="221.0" stroke="#111" stroke-opacity="0.03" stroke-width="1.15" stroke-linecap="round"/><line x1="70.9" y1="5.8" x2="70.9" y2="19.1" stroke="#111" stroke-opacity="0.04" stroke-width="1.15" stroke-linecap="round"/><line x1="70.9" y1="26.8" x2="70.9" y2="37.4" stroke="#111" stroke-opacity="0.03" stroke-width="1.15" stroke-linecap="round"/><line x1="70.9" y1="47.8" x2="70.9" y2="60.9" stroke="#111" stroke-opacity="0.04" stroke-width="1.15" stroke-linecap="round"/><line x1="70.9" y1="68.8" x2="70.9" y2="79.4" stroke="#111" stroke-opacity="0.04" stroke-width="1.15" stroke-linecap="round"/><line x1="70.9" y1="89.8" x2="70.9" y2="100.9" stroke="#111" stroke-opacity="0.04" stroke-width="1.15" stroke-linecap="round"/><line x1="70.9" y1="110.8" x2="70.9" y2="121.3" stroke="#111" stroke-opacity="0.04" stroke-width="1.15" stroke-linecap="round"/><line x1="70.9" y1="131.8" x2="70.9" y2="145.2" stroke="#111" stroke-opacity="0.03" stroke-width="1.15" stroke-linecap="round"/><line x1="70.9" y1="152.8" x2="70.9" y2="164.9" stroke="#111" stroke-opacity="0.03" stroke-width="1.15" stroke-linecap="round"/><line x1="70.9" y1="381.3" x2="70.9" y2="394.2" stroke="#111" stroke-opacity="0.05" stroke-width="1.15" stroke-linecap="round"/><line x1="70.9" y1="362.8" x2="70.9" y2="373.2" stroke="#111" stroke-opacity="0.05" stroke-width="1.15" stroke-linecap="round"/><line x1="70.9" y1="339.0" x2="70.9" y2="352.2" stroke="#111" stroke-opacity="0.04" stroke-width="1.15" stroke-linecap="round"/><line x1="70.9" y1="321.0" x2="70.9" y2="331.2" stroke="#111" stroke-opacity="0.04" stroke-width="1.15" stroke-linecap="round"/><line x1="70.9" y1="299.2" x2="70.9" y2="310.2" stroke="#111" stroke-opacity="0.05" stroke-width="1.15" stroke-linecap="round"/><line x1="70.9" y1="278.6" x2="70.9" y2="289.2" stroke="#111" stroke-opacity="0.04" stroke-width="1.15" stroke-linecap="round"/><line x1="70.9" y1="257.5" x2="70.9" y2="268.2" stroke="#111" stroke-opacity="0.05" stroke-width="1.15" stroke-linecap="round"/><line x1="70.9" y1="234.5" x2="70.9" y2="247.2" stroke="#111" stroke-opacity="0.04" stroke-width="1.15" stroke-linecap="round"/><line x1="70.9" y1="214.0" x2="70.9" y2="226.2" stroke="#111" stroke-opacity="0.04" stroke-width="1.15" stroke-linecap="round"/><line x1="75.0" y1="1.0" x2="75.0" y2="11.3" stroke="#111" stroke-opacity="0.04" stroke-width="1.15" stroke-linecap="round"/><line x1="75.0" y1="21.6" x2="75.0" y2="34.7" stroke="#111" stroke-opacity="0.05" stroke-width="1.15" stroke-linecap="round"/><line x1="75.0" y1="42.6" x2="75.0" y2="53.5" stroke="#111" stroke-opacity="0.05" stroke-width="1.15" stroke-linecap="round"/><line x1="75.0" y1="63.6" x2="75.0" y2="73.8" stroke="#111" stroke-opacity="0.05" stroke-width="1.15" stroke-linecap="round"/><line x1="75.0" y1="84.6" x2="75.0" y2="96.0" stroke="#111" stroke-opacity="0.04" stroke-width="1.15" stroke-linecap="round"/><line x1="75.0" y1="105.6" x2="75.0" y2="117.4" stroke="#111" stroke-opacity="0.03" stroke-width="1.15" stroke-linecap="round"/><line x1="75.0" y1="126.6" x2="75.0" y2="138.6" stroke="#111" stroke-opacity="0.04" stroke-width="1.15" stroke-linecap="round"/><line x1="75.0" y1="147.6" x2="75.0" y2="158.4" stroke="#111" stroke-opacity="0.05" stroke-width="1.15" stroke-linecap="round"/><line x1="75.0" y1="168.6" x2="75.0" y2="178.8" stroke="#111" stroke-opacity="0.04" stroke-width="1.15" stroke-linecap="round"/><line x1="75.0" y1="387.6" x2="75.0" y2="399.0" stroke="#111" stroke-opacity="0.05" stroke-width="1.15" stroke-linecap="round"/><line x1="75.0" y1="365.4" x2="75.0" y2="378.4" stroke="#111" stroke-opacity="0.07" stroke-width="1.15" stroke-linecap="round"/><line x1="75.0" y1="347.4" x2="75.0" y2="357.4" stroke="#111" stroke-opacity="0.05" stroke-width="1.15" stroke-linecap="round"/><line x1="75.0" y1="323.9" x2="75.0" y2="336.4" stroke="#111" stroke-opacity="0.05" stroke-width="1.15" stroke-linecap="round"/><line x1="75.0" y1="302.2" x2="75.0" y2="315.4" stroke="#111" stroke-opacity="0.06" stroke-width="1.15" stroke-linecap="round"/><line x1="75.0" y1="283.9" x2="75.0" y2="294.4" stroke="#111" stroke-opacity="0.06" stroke-width="1.15" stroke-linecap="round"/><line x1="75.0" y1="261.2" x2="75.0" y2="273.4" stroke="#111" stroke-opacity="0.05" stroke-width="1.15" stroke-linecap="round"/><line x1="75.0" y1="240.2" x2="75.0" y2="252.4" stroke="#111" stroke-opacity="0.06" stroke-width="1.15" stroke-linecap="round"/><line x1="75.0" y1="219.7" x2="75.0" y2="231.4" stroke="#111" stroke-opacity="0.05" stroke-width="1.15" stroke-linecap="round"/><line x1="79.2" y1="1.0" x2="79.2" y2="8.6" stroke="#111" stroke-opacity="0.05" stroke-width="1.15" stroke-linecap="round"/><line x1="79.2" y1="16.4" x2="79.2" y2="29.0" stroke="#111" stroke-opacity="0.05" stroke-width="1.15" stroke-linecap="round"/><line x1="79.2" y1="37.4" x2="79.2" y2="49.4" stroke="#111" stroke-opacity="0.05" stroke-width="1.15" stroke-linecap="round"/><line x1="79.2" y1="58.4" x2="79.2" y2="69.8" stroke="#111" stroke-opacity="0.06" stroke-width="1.15" stroke-linecap="round"/><line x1="79.2" y1="79.4" x2="79.2" y2="92.1" stroke="#111" stroke-opacity="0.06" stroke-width="1.15" stroke-linecap="round"/><line x1="79.2" y1="100.4" x2="79.2" y2="111.1" stroke="#111" stroke-opacity="0.06" stroke-width="1.15" stroke-linecap="round"/><line x1="79.2" y1="121.4" x2="79.2" y2="132.1" stroke="#111" stroke-opacity="0.06" stroke-width="1.15" stroke-linecap="round"/><line x1="79.2" y1="142.4" x2="79.2" y2="154.0" stroke="#111" stroke-opacity="0.04" stroke-width="1.15" stroke-linecap="round"/><line x1="79.2" y1="163.4" x2="79.2" y2="175.4" stroke="#111" stroke-opacity="0.06" stroke-width="1.15" stroke-linecap="round"/><line x1="79.2" y1="184.4" x2="79.2" y2="196.3" stroke="#111" stroke-opacity="0.04" stroke-width="1.15" stroke-linecap="round"/><line x1="79.2" y1="394.2" x2="79.2" y2="399.0" stroke="#111" stroke-opacity="0.05" stroke-width="1.15" stroke-linecap="round"/><line x1="79.2" y1="372.0" x2="79.2" y2="383.6" stroke="#111" stroke-opacity="0.07" stroke-width="1.15" stroke-linecap="round"/><line x1="79.2" y1="351.2" x2="79.2" y2="362.6" stroke="#111" stroke-opacity="0.06" stroke-width="1.15" stroke-linecap="round"/><line x1="79.2" y1="328.9" x2="79.2" y2="341.6" stroke="#111" stroke-opacity="0.06" stroke-width="1.15" stroke-linecap="round"/><line x1="79.2" y1="307.5" x2="79.2" y2="320.6" stroke="#111" stroke-opacity="0.07" stroke-width="1.15" stroke-linecap="round"/><line x1="79.2" y1="287.8" x2="79.2" y2="299.6" stroke="#111" stroke-opacity="0.08" stroke-width="1.15" stroke-linecap="round"/><line x1="79.2" y1="267.9" x2="79.2" y2="278.6" stroke="#111" stroke-opacity="0.06" stroke-width="1.15" stroke-linecap="round"/><line x1="79.2" y1="246.6" x2="79.2" y2="257.6" stroke="#111" stroke-opacity="0.06" stroke-width="1.15" stroke-linecap="round"/><line x1="79.2" y1="225.6" x2="79.2" y2="236.6" stroke="#111" stroke-opacity="0.08" stroke-width="1.15" stroke-linecap="round"/><line x1="79.2" y1="203.9" x2="79.2" y2="215.6" stroke="#111" stroke-opacity="0.04" stroke-width="1.15" stroke-linecap="round"/><line x1="83.3" y1="1.0" x2="83.3" y2="0.4" stroke="#111" stroke-opacity="0.08" stroke-width="1.15" stroke-linecap="round"/><line x1="83.3" y1="11.2" x2="83.3" y2="21.7" stroke="#111" stroke-opacity="0.06" stroke-width="1.15" stroke-linecap="round"/><line x1="83.3" y1="32.2" x2="83.3" y2="42.7" stroke="#111" stroke-opacity="0.08" stroke-width="1.15" stroke-linecap="round"/><line x1="83.3" y1="53.2" x2="83.3" y2="66.0" stroke="#111" stroke-opacity="0.08" stroke-width="1.15" stroke-linecap="round"/><line x1="83.3" y1="74.2" x2="83.3" y2="84.3" stroke="#111" stroke-opacity="0.07" stroke-width="1.15" stroke-linecap="round"/><line x1="83.3" y1="95.2" x2="83.3" y2="106.4" stroke="#111" stroke-opacity="0.06" stroke-width="1.15" stroke-linecap="round"/><line x1="83.3" y1="116.2" x2="83.3" y2="129.5" stroke="#111" stroke-opacity="0.06" stroke-width="1.15" stroke-linecap="round"/><line x1="83.3" y1="137.2" x2="83.3" y2="148.8" stroke="#111" stroke-opacity="0.08" stroke-width="1.15" stroke-linecap="round"/><line x1="83.3" y1="158.2" x2="83.3" y2="171.6" stroke="#111" stroke-opacity="0.06" stroke-width="1.15" stroke-linecap="round"/><line x1="83.3" y1="179.2" x2="83.3" y2="190.7" stroke="#111" stroke-opacity="0.06" stroke-width="1.15" stroke-linecap="round"/><line x1="83.3" y1="399.1" x2="83.3" y2="399.0" stroke="#111" stroke-opacity="0.12" stroke-width="1.15" stroke-linecap="round"/><line x1="83.3" y1="378.4" x2="83.3" y2="388.8" stroke="#111" stroke-opacity="0.10" stroke-width="1.15" stroke-linecap="round"/><line x1="83.3" y1="356.9" x2="83.3" y2="367.8" stroke="#111" stroke-opacity="0.10" stroke-width="1.15" stroke-linecap="round"/><line x1="83.3" y1="336.6" x2="83.3" y2="346.8" stroke="#111" stroke-opacity="0.08" stroke-width="1.15" stroke-linecap="round"/><line x1="83.3" y1="312.4" x2="83.3" y2="325.8" stroke="#111" stroke-opacity="0.12" stroke-width="1.15" stroke-linecap="round"/><line x1="83.3" y1="292.3" x2="83.3" y2="304.8" stroke="#111" stroke-opacity="0.09" stroke-width="1.15" stroke-linecap="round"/><line x1="83.3" y1="273.0" x2="83.3" y2="283.8" stroke="#111" stroke-opacity="0.11" stroke-width="1.15" stroke-linecap="round"/><line x1="83.3" y1="252.1" x2="83.3" y2="262.8" stroke="#111" stroke-opacity="0.10" stroke-width="1.15" stroke-linecap="round"/><line x1="83.3" y1="228.6" x2="83.3" y2="241.8" stroke="#111" stroke-opacity="0.10" stroke-width="1.15" stroke-linecap="round"/><line x1="83.3" y1="209.7" x2="83.3" y2="220.8" stroke="#111" stroke-opacity="0.09" stroke-width="1.15" stroke-linecap="round"/><line x1="87.5" y1="6.0" x2="87.5" y2="18.2" stroke="#111" stroke-opacity="0.08" stroke-width="1.15" stroke-linecap="round"/><line x1="87.5" y1="27.0" x2="87.5" y2="38.1" stroke="#111" stroke-opacity="0.11" stroke-width="1.15" stroke-linecap="round"/><line x1="87.5" y1="48.0" x2="87.5" y2="60.9" stroke="#111" stroke-opacity="0.11" stroke-width="1.15" stroke-linecap="round"/><line x1="87.5" y1="69.0" x2="87.5" y2="82.0" stroke="#111" stroke-opacity="0.10" stroke-width="1.15" stroke-linecap="round"/><line x1="87.5" y1="90.0" x2="87.5" y2="101.3" stroke="#111" stroke-opacity="0.12" stroke-width="1.15" stroke-linecap="round"/><line x1="87.5" y1="111.0" x2="87.5" y2="122.2" stroke="#111" stroke-opacity="0.12" stroke-width="1.15" stroke-linecap="round"/><line x1="87.5" y1="132.0" x2="87.5" y2="142.7" stroke="#111" stroke-opacity="0.10" stroke-width="1.15" stroke-linecap="round"/><line x1="87.5" y1="153.0" x2="87.5" y2="163.5" stroke="#111" stroke-opacity="0.11" stroke-width="1.15" stroke-linecap="round"/><line x1="87.5" y1="174.0" x2="87.5" y2="184.5" stroke="#111" stroke-opacity="0.08" stroke-width="1.15" stroke-linecap="round"/><line x1="87.5" y1="195.0" x2="87.5" y2="205.7" stroke="#111" stroke-opacity="0.04" stroke-width="1.15" stroke-linecap="round"/><line x1="87.5" y1="380.6" x2="87.5" y2="394.0" stroke="#111" stroke-opacity="0.19" stroke-width="1.15" stroke-linecap="round"/><line x1="87.5" y1="360.1" x2="87.5" y2="373.0" stroke="#111" stroke-opacity="0.15" stroke-width="1.15" stroke-linecap="round"/><line x1="87.5" y1="340.8" x2="87.5" y2="352.0" stroke="#111" stroke-opacity="0.14" stroke-width="1.15" stroke-linecap="round"/><line x1="87.5" y1="318.7" x2="87.5" y2="331.0" stroke="#111" stroke-opacity="0.16" stroke-width="1.15" stroke-linecap="round"/><line x1="87.5" y1="299.1" x2="87.5" y2="310.0" stroke="#111" stroke-opacity="0.13" stroke-width="1.15" stroke-linecap="round"/><line x1="87.5" y1="278.5" x2="87.5" y2="289.0" stroke="#111" stroke-opacity="0.16" stroke-width="1.15" stroke-linecap="round"/><line x1="87.5" y1="256.7" x2="87.5" y2="268.0" stroke="#111" stroke-opacity="0.21" stroke-width="1.15" stroke-linecap="round"/><line x1="87.5" y1="234.6" x2="87.5" y2="247.0" stroke="#111" stroke-opacity="0.16" stroke-width="1.15" stroke-linecap="round"/><line x1="87.5" y1="214.8" x2="87.5" y2="226.0" stroke="#111" stroke-opacity="0.12" stroke-width="1.15" stroke-linecap="round"/><line x1="91.6" y1="1.0" x2="91.6" y2="12.0" stroke="#111" stroke-opacity="0.20" stroke-width="1.15" stroke-linecap="round"/><line x1="91.6" y1="21.8" x2="91.6" y2="34.2" stroke="#111" stroke-opacity="0.21" stroke-width="1.15" stroke-linecap="round"/><line x1="91.6" y1="42.8" x2="91.6" y2="52.8" stroke="#111" stroke-opacity="0.16" stroke-width="1.15" stroke-linecap="round"/><line x1="91.6" y1="63.8" x2="91.6" y2="75.0" stroke="#111" stroke-opacity="0.14" stroke-width="1.15" stroke-linecap="round"/><line x1="91.6" y1="84.8" x2="91.6" y2="97.8" stroke="#111" stroke-opacity="0.16" stroke-width="1.15" stroke-linecap="round"/><line x1="91.6" y1="105.8" x2="91.6" y2="118.4" stroke="#111" stroke-opacity="0.18" stroke-width="1.15" stroke-linecap="round"/><line x1="91.6" y1="126.8" x2="91.6" y2="136.9" stroke="#111" stroke-opacity="0.17" stroke-width="1.15" stroke-linecap="round"/><line x1="91.6" y1="147.8" x2="91.6" y2="158.5" stroke="#111" stroke-opacity="0.14" stroke-width="1.15" stroke-linecap="round"/><line x1="91.6" y1="168.8" x2="91.6" y2="179.2" stroke="#111" stroke-opacity="0.18" stroke-width="1.15" stroke-linecap="round"/><line x1="91.6" y1="189.8" x2="91.6" y2="199.8" stroke="#111" stroke-opacity="0.08" stroke-width="1.15" stroke-linecap="round"/><line x1="91.6" y1="387.4" x2="91.6" y2="399.0" stroke="#111" stroke-opacity="0.25" stroke-width="1.15" stroke-linecap="round"/><line x1="91.6" y1="365.8" x2="91.6" y2="378.2" stroke="#111" stroke-opacity="0.27" stroke-width="1.15" stroke-linecap="round"/><line x1="91.6" y1="344.8" x2="91.6" y2="357.2" stroke="#111" stroke-opacity="0.33" stroke-width="1.15" stroke-linecap="round"/><line x1="91.6" y1="325.8" x2="91.6" y2="336.2" stroke="#111" stroke-opacity="0.26" stroke-width="1.15" stroke-linecap="round"/><line x1="91.6" y1="304.3" x2="91.6" y2="315.2" stroke="#111" stroke-opacity="0.34" stroke-width="1.15" stroke-linecap="round"/><line x1="91.6" y1="282.9" x2="91.6" y2="294.2" stroke="#111" stroke-opacity="0.29" stroke-width="1.15" stroke-linecap="round"/><line x1="91.6" y1="260.3" x2="91.6" y2="273.2" stroke="#111" stroke-opacity="0.26" stroke-width="1.15" stroke-linecap="round"/><line x1="91.6" y1="241.3" x2="91.6" y2="252.2" stroke="#111" stroke-opacity="0.28" stroke-width="1.15" stroke-linecap="round"/><line x1="91.6" y1="220.5" x2="91.6" y2="231.2" stroke="#111" stroke-opacity="0.22" stroke-width="1.15" stroke-linecap="round"/><line x1="91.6" y1="200.2" x2="91.6" y2="210.2" stroke="#111" stroke-opacity="0.16" stroke-width="1.15" stroke-linecap="round"/><line x1="95.8" y1="1.0" x2="95.8" y2="12.0" stroke="#111" stroke-opacity="0.38" stroke-width="1.15" stroke-linecap="round"/><line x1="95.8" y1="16.6" x2="95.8" y2="30.8" stroke="#111" stroke-opacity="0.33" stroke-width="1.15" stroke-linecap="round"/><line x1="95.8" y1="37.6" x2="95.8" y2="54.5" stroke="#111" stroke-opacity="0.26" stroke-width="1.15" stroke-linecap="round"/><line x1="95.8" y1="58.6" x2="95.8" y2="74.5" stroke="#111" stroke-opacity="0.33" stroke-width="1.15" stroke-linecap="round"/><line x1="95.8" y1="79.6" x2="95.8" y2="96.7" stroke="#111" stroke-opacity="0.36" stroke-width="1.15" stroke-linecap="round"/><line x1="95.8" y1="100.6" x2="95.8" y2="114.5" stroke="#111" stroke-opacity="0.32" stroke-width="1.15" stroke-linecap="round"/><line x1="95.8" y1="121.6" x2="95.8" y2="134.9" stroke="#111" stroke-opacity="0.29" stroke-width="1.15" stroke-linecap="round"/><line x1="95.8" y1="142.6" x2="95.8" y2="157.2" stroke="#111" stroke-opacity="0.24" stroke-width="1.15" stroke-linecap="round"/><line x1="95.8" y1="163.6" x2="95.8" y2="178.2" stroke="#111" stroke-opacity="0.28" stroke-width="1.15" stroke-linecap="round"/><line x1="95.8" y1="184.6" x2="95.8" y2="199.6" stroke="#111" stroke-opacity="0.16" stroke-width="1.15" stroke-linecap="round"/><line x1="95.8" y1="389.8" x2="95.8" y2="399.0" stroke="#111" stroke-opacity="0.49" stroke-width="1.15" stroke-linecap="round"/><line x1="95.8" y1="369.8" x2="95.8" y2="383.4" stroke="#111" stroke-opacity="0.54" stroke-width="1.15" stroke-linecap="round"/><line x1="95.8" y1="348.5" x2="95.8" y2="362.4" stroke="#111" stroke-opacity="0.40" stroke-width="1.15" stroke-linecap="round"/><line x1="95.8" y1="327.0" x2="95.8" y2="341.4" stroke="#111" stroke-opacity="0.48" stroke-width="1.15" stroke-linecap="round"/><line x1="95.8" y1="306.9" x2="95.8" y2="320.4" stroke="#111" stroke-opacity="0.52" stroke-width="1.15" stroke-linecap="round"/><line x1="95.8" y1="283.5" x2="95.8" y2="299.4" stroke="#111" stroke-opacity="0.51" stroke-width="1.15" stroke-linecap="round"/><line x1="95.8" y1="262.5" x2="95.8" y2="278.4" stroke="#111" stroke-opacity="0.38" stroke-width="1.15" stroke-linecap="round"/><line x1="95.8" y1="242.8" x2="95.8" y2="257.4" stroke="#111" stroke-opacity="0.46" stroke-width="1.15" stroke-linecap="round"/><line x1="95.8" y1="223.2" x2="95.8" y2="236.4" stroke="#111" stroke-opacity="0.47" stroke-width="1.15" stroke-linecap="round"/><line x1="95.8" y1="202.3" x2="95.8" y2="215.4" stroke="#111" stroke-opacity="0.29" stroke-width="1.15" stroke-linecap="round"/><line x1="99.9" y1="1.0" x2="99.9" y2="5.3" stroke="#111" stroke-opacity="0.45" stroke-width="1.15" stroke-linecap="round"/><line x1="99.9" y1="11.4" x2="99.9" y2="25.4" stroke="#111" stroke-opacity="0.38" stroke-width="1.15" stroke-linecap="round"/><line x1="99.9" y1="32.4" x2="99.9" y2="46.8" stroke="#111" stroke-opacity="0.59" stroke-width="1.15" stroke-linecap="round"/><line x1="99.9" y1="53.4" x2="99.9" y2="68.8" stroke="#111" stroke-opacity="0.44" stroke-width="1.15" stroke-linecap="round"/><line x1="99.9" y1="74.4" x2="99.9" y2="90.2" stroke="#111" stroke-opacity="0.42" stroke-width="1.15" stroke-linecap="round"/><line x1="99.9" y1="95.4" x2="99.9" y2="110.3" stroke="#111" stroke-opacity="0.52" stroke-width="1.15" stroke-linecap="round"/><line x1="99.9" y1="116.4" x2="99.9" y2="133.5" stroke="#111" stroke-opacity="0.46" stroke-width="1.15" stroke-linecap="round"/><line x1="99.9" y1="137.4" x2="99.9" y2="152.8" stroke="#111" stroke-opacity="0.61" stroke-width="1.15" stroke-linecap="round"/><line x1="99.9" y1="158.4" x2="99.9" y2="174.7" stroke="#111" stroke-opacity="0.53" stroke-width="1.15" stroke-linecap="round"/><line x1="99.9" y1="179.4" x2="99.9" y2="195.0" stroke="#111" stroke-opacity="0.33" stroke-width="1.15" stroke-linecap="round"/><line x1="99.9" y1="395.5" x2="99.9" y2="399.0" stroke="#111" stroke-opacity="0.80" stroke-width="1.15" stroke-linecap="round"/><line x1="99.9" y1="371.9" x2="99.9" y2="388.6" stroke="#111" stroke-opacity="0.65" stroke-width="1.15" stroke-linecap="round"/><line x1="99.9" y1="350.7" x2="99.9" y2="367.6" stroke="#111" stroke-opacity="0.53" stroke-width="1.15" stroke-linecap="round"/><line x1="99.9" y1="333.1" x2="99.9" y2="346.6" stroke="#111" stroke-opacity="0.69" stroke-width="1.15" stroke-linecap="round"/><line x1="99.9" y1="311.4" x2="99.9" y2="325.6" stroke="#111" stroke-opacity="0.64" stroke-width="1.15" stroke-linecap="round"/><line x1="99.9" y1="287.5" x2="99.9" y2="304.6" stroke="#111" stroke-opacity="0.57" stroke-width="1.15" stroke-linecap="round"/><line x1="99.9" y1="269.9" x2="99.9" y2="283.6" stroke="#111" stroke-opacity="0.59" stroke-width="1.15" stroke-linecap="round"/><line x1="99.9" y1="246.7" x2="99.9" y2="262.6" stroke="#111" stroke-opacity="0.60" stroke-width="1.15" stroke-linecap="round"/><line x1="99.9" y1="228.7" x2="99.9" y2="241.6" stroke="#111" stroke-opacity="0.70" stroke-width="1.15" stroke-linecap="round"/><line x1="99.9" y1="206.0" x2="99.9" y2="220.6" stroke="#111" stroke-opacity="0.40" stroke-width="1.15" stroke-linecap="round"/><line x1="104.1" y1="1.0" x2="104.1" y2="0.9" stroke="#111" stroke-opacity="0.70" stroke-width="1.15" stroke-linecap="round"/><line x1="104.1" y1="6.2" x2="104.1" y2="21.8" stroke="#111" stroke-opacity="0.71" stroke-width="1.15" stroke-linecap="round"/><line x1="104.1" y1="27.2" x2="104.1" y2="43.7" stroke="#111" stroke-opacity="0.85" stroke-width="1.15" stroke-linecap="round"/><line x1="104.1" y1="48.2" x2="104.1" y2="62.5" stroke="#111" stroke-opacity="0.64" stroke-width="1.15" stroke-linecap="round"/><line x1="104.1" y1="69.2" x2="104.1" y2="86.0" stroke="#111" stroke-opacity="0.62" stroke-width="1.15" stroke-linecap="round"/><line x1="104.1" y1="90.2" x2="104.1" y2="106.2" stroke="#111" stroke-opacity="0.76" stroke-width="1.15" stroke-linecap="round"/><line x1="104.1" y1="111.2" x2="104.1" y2="127.1" stroke="#111" stroke-opacity="0.85" stroke-width="1.15" stroke-linecap="round"/><line x1="104.1" y1="132.2" x2="104.1" y2="148.7" stroke="#111" stroke-opacity="0.57" stroke-width="1.15" stroke-linecap="round"/><line x1="104.1" y1="153.2" x2="104.1" y2="168.8" stroke="#111" stroke-opacity="0.68" stroke-width="1.15" stroke-linecap="round"/><line x1="104.1" y1="174.2" x2="104.1" y2="189.5" stroke="#111" stroke-opacity="0.52" stroke-width="1.15" stroke-linecap="round"/><line x1="104.1" y1="398.6" x2="104.1" y2="399.0" stroke="#111" stroke-opacity="0.70" stroke-width="1.15" stroke-linecap="round"/><line x1="104.1" y1="379.9" x2="104.1" y2="393.8" stroke="#111" stroke-opacity="0.60" stroke-width="1.15" stroke-linecap="round"/><line x1="104.1" y1="358.5" x2="104.1" y2="372.8" stroke="#111" stroke-opacity="0.58" stroke-width="1.15" stroke-linecap="round"/><line x1="104.1" y1="336.7" x2="104.1" y2="351.8" stroke="#111" stroke-opacity="0.56" stroke-width="1.15" stroke-linecap="round"/><line x1="104.1" y1="317.6" x2="104.1" y2="330.8" stroke="#111" stroke-opacity="0.54" stroke-width="1.15" stroke-linecap="round"/><line x1="104.1" y1="296.5" x2="104.1" y2="309.8" stroke="#111" stroke-opacity="0.76" stroke-width="1.15" stroke-linecap="round"/><line x1="104.1" y1="275.4" x2="104.1" y2="288.8" stroke="#111" stroke-opacity="0.67" stroke-width="1.15" stroke-linecap="round"/><line x1="104.1" y1="251.5" x2="104.1" y2="267.8" stroke="#111" stroke-opacity="0.68" stroke-width="1.15" stroke-linecap="round"/><line x1="104.1" y1="233.2" x2="104.1" y2="246.8" stroke="#111" stroke-opacity="0.81" stroke-width="1.15" stroke-linecap="round"/><line x1="104.1" y1="209.1" x2="104.1" y2="225.8" stroke="#111" stroke-opacity="0.41" stroke-width="1.15" stroke-linecap="round"/><line x1="108.2" y1="0.0" x2="108.2" y2="80.4" stroke="#111" stroke-opacity="0.86" stroke-width="1.3" stroke-linecap="round"/><line x1="108.2" y1="83.9" x2="108.2" y2="176.9" stroke="#111" stroke-opacity="0.91" stroke-width="1.3" stroke-linecap="round"/><line x1="108.2" y1="179.0" x2="108.2" y2="248.6" stroke="#111" stroke-opacity="0.92" stroke-width="1.3" stroke-linecap="round"/><line x1="108.2" y1="251.0" x2="108.2" y2="351.5" stroke="#111" stroke-opacity="0.89" stroke-width="1.3" stroke-linecap="round"/><line x1="108.2" y1="355.1" x2="108.2" y2="400.0" stroke="#111" stroke-opacity="0.90" stroke-width="1.3" stroke-linecap="round"/><line x1="112.4" y1="0.0" x2="112.4" y2="99.9" stroke="#111" stroke-opacity="0.83" stroke-width="1.3" stroke-linecap="round"/><line x1="112.4" y1="103.4" x2="112.4" y2="176.0" stroke="#111" stroke-opacity="0.84" stroke-width="1.3" stroke-linecap="round"/><line x1="112.4" y1="179.2" x2="112.4" y2="240.2" stroke="#111" stroke-opacity="0.89" stroke-width="1.3" stroke-linecap="round"/><line x1="112.4" y1="241.8" x2="112.4" y2="348.2" stroke="#111" stroke-opacity="0.83" stroke-width="1.3" stroke-linecap="round"/><line x1="112.4" y1="352.2" x2="112.4" y2="400.0" stroke="#111" stroke-opacity="0.90" stroke-width="1.3" stroke-linecap="round"/><line x1="116.5" y1="1.0" x2="116.5" y2="-0.2" stroke="#111" stroke-opacity="0.84" stroke-width="1.15" stroke-linecap="round"/><line x1="116.5" y1="6.2" x2="116.5" y2="23.4" stroke="#111" stroke-opacity="0.53" stroke-width="1.15" stroke-linecap="round"/><line x1="116.5" y1="27.2" x2="116.5" y2="43.2" stroke="#111" stroke-opacity="0.56" stroke-width="1.15" stroke-linecap="round"/><line x1="116.5" y1="48.2" x2="116.5" y2="61.3" stroke="#111" stroke-opacity="0.61" stroke-width="1.15" stroke-linecap="round"/><line x1="116.5" y1="69.2" x2="116.5" y2="85.3" stroke="#111" stroke-opacity="0.86" stroke-width="1.15" stroke-linecap="round"/><line x1="116.5" y1="90.2" x2="116.5" y2="103.6" stroke="#111" stroke-opacity="0.63" stroke-width="1.15" stroke-linecap="round"/><line x1="116.5" y1="111.2" x2="116.5" y2="124.2" stroke="#111" stroke-opacity="0.70" stroke-width="1.15" stroke-linecap="round"/><line x1="116.5" y1="132.2" x2="116.5" y2="147.2" stroke="#111" stroke-opacity="0.64" stroke-width="1.15" stroke-linecap="round"/><line x1="116.5" y1="153.2" x2="116.5" y2="167.4" stroke="#111" stroke-opacity="0.79" stroke-width="1.15" stroke-linecap="round"/><line x1="116.5" y1="174.2" x2="116.5" y2="190.7" stroke="#111" stroke-opacity="0.48" stroke-width="1.15" stroke-linecap="round"/><line x1="116.5" y1="399.2" x2="116.5" y2="399.0" stroke="#111" stroke-opacity="0.56" stroke-width="1.15" stroke-linecap="round"/><line x1="116.5" y1="376.6" x2="116.5" y2="393.8" stroke="#111" stroke-opacity="0.47" stroke-width="1.15" stroke-linecap="round"/><line x1="116.5" y1="356.9" x2="116.5" y2="372.8" stroke="#111" stroke-opacity="0.51" stroke-width="1.15" stroke-linecap="round"/><line x1="116.5" y1="335.4" x2="116.5" y2="351.8" stroke="#111" stroke-opacity="0.41" stroke-width="1.15" stroke-linecap="round"/><line x1="116.5" y1="317.2" x2="116.5" y2="330.8" stroke="#111" stroke-opacity="0.40" stroke-width="1.15" stroke-linecap="round"/><line x1="116.5" y1="292.8" x2="116.5" y2="309.8" stroke="#111" stroke-opacity="0.43" stroke-width="1.15" stroke-linecap="round"/><line x1="116.5" y1="273.8" x2="116.5" y2="288.8" stroke="#111" stroke-opacity="0.40" stroke-width="1.15" stroke-linecap="round"/><line x1="116.5" y1="253.5" x2="116.5" y2="267.8" stroke="#111" stroke-opacity="0.38" stroke-width="1.15" stroke-linecap="round"/><line x1="116.5" y1="231.4" x2="116.5" y2="246.8" stroke="#111" stroke-opacity="0.41" stroke-width="1.15" stroke-linecap="round"/><line x1="116.5" y1="210.2" x2="116.5" y2="225.8" stroke="#111" stroke-opacity="0.34" stroke-width="1.15" stroke-linecap="round"/><line x1="120.7" y1="1.0" x2="120.7" y2="5.4" stroke="#111" stroke-opacity="0.46" stroke-width="1.15" stroke-linecap="round"/><line x1="120.7" y1="11.4" x2="120.7" y2="25.4" stroke="#111" stroke-opacity="0.38" stroke-width="1.15" stroke-linecap="round"/><line x1="120.7" y1="32.4" x2="120.7" y2="45.6" stroke="#111" stroke-opacity="0.59" stroke-width="1.15" stroke-linecap="round"/><line x1="120.7" y1="53.4" x2="120.7" y2="67.6" stroke="#111" stroke-opacity="0.39" stroke-width="1.15" stroke-linecap="round"/><line x1="120.7" y1="74.4" x2="120.7" y2="88.1" stroke="#111" stroke-opacity="0.49" stroke-width="1.15" stroke-linecap="round"/><line x1="120.7" y1="95.4" x2="120.7" y2="112.6" stroke="#111" stroke-opacity="0.42" stroke-width="1.15" stroke-linecap="round"/><line x1="120.7" y1="116.4" x2="120.7" y2="133.1" stroke="#111" stroke-opacity="0.49" stroke-width="1.15" stroke-linecap="round"/><line x1="120.7" y1="137.4" x2="120.7" y2="152.1" stroke="#111" stroke-opacity="0.57" stroke-width="1.15" stroke-linecap="round"/><line x1="120.7" y1="158.4" x2="120.7" y2="173.0" stroke="#111" stroke-opacity="0.39" stroke-width="1.15" stroke-linecap="round"/><line x1="120.7" y1="179.4" x2="120.7" y2="194.7" stroke="#111" stroke-opacity="0.37" stroke-width="1.15" stroke-linecap="round"/><line x1="120.7" y1="395.5" x2="120.7" y2="399.0" stroke="#111" stroke-opacity="0.37" stroke-width="1.15" stroke-linecap="round"/><line x1="120.7" y1="371.9" x2="120.7" y2="388.6" stroke="#111" stroke-opacity="0.38" stroke-width="1.15" stroke-linecap="round"/><line x1="120.7" y1="352.8" x2="120.7" y2="367.6" stroke="#111" stroke-opacity="0.35" stroke-width="1.15" stroke-linecap="round"/><line x1="120.7" y1="330.6" x2="120.7" y2="346.6" stroke="#111" stroke-opacity="0.25" stroke-width="1.15" stroke-linecap="round"/><line x1="120.7" y1="312.6" x2="120.7" y2="325.6" stroke="#111" stroke-opacity="0.25" stroke-width="1.15" stroke-linecap="round"/><line x1="120.7" y1="291.2" x2="120.7" y2="304.6" stroke="#111" stroke-opacity="0.24" stroke-width="1.15" stroke-linecap="round"/><line x1="120.7" y1="269.2" x2="120.7" y2="283.6" stroke="#111" stroke-opacity="0.34" stroke-width="1.15" stroke-linecap="round"/><line x1="120.7" y1="248.4" x2="120.7" y2="262.6" stroke="#111" stroke-opacity="0.31" stroke-width="1.15" stroke-linecap="round"/><line x1="120.7" y1="228.7" x2="120.7" y2="241.6" stroke="#111" stroke-opacity="0.26" stroke-width="1.15" stroke-linecap="round"/><line x1="120.7" y1="203.5" x2="120.7" y2="220.6" stroke="#111" stroke-opacity="0.15" stroke-width="1.15" stroke-linecap="round"/><line x1="124.8" y1="1.0" x2="124.8" y2="12.0" stroke="#111" stroke-opacity="0.35" stroke-width="1.15" stroke-linecap="round"/><line x1="124.8" y1="16.6" x2="124.8" y2="32.7" stroke="#111" stroke-opacity="0.29" stroke-width="1.15" stroke-linecap="round"/><line x1="124.8" y1="37.6" x2="124.8" y2="54.0" stroke="#111" stroke-opacity="0.35" stroke-width="1.15" stroke-linecap="round"/><line x1="124.8" y1="58.6" x2="124.8" y2="74.8" stroke="#111" stroke-opacity="0.38" stroke-width="1.15" stroke-linecap="round"/><line x1="124.8" y1="79.6" x2="124.8" y2="92.9" stroke="#111" stroke-opacity="0.37" stroke-width="1.15" stroke-linecap="round"/><line x1="124.8" y1="100.6" x2="124.8" y2="115.2" stroke="#111" stroke-opacity="0.34" stroke-width="1.15" stroke-linecap="round"/><line x1="124.8" y1="121.6" x2="124.8" y2="135.6" stroke="#111" stroke-opacity="0.37" stroke-width="1.15" stroke-linecap="round"/><line x1="124.8" y1="142.6" x2="124.8" y2="155.6" stroke="#111" stroke-opacity="0.32" stroke-width="1.15" stroke-linecap="round"/><line x1="124.8" y1="163.6" x2="124.8" y2="177.5" stroke="#111" stroke-opacity="0.29" stroke-width="1.15" stroke-linecap="round"/><line x1="124.8" y1="184.6" x2="124.8" y2="199.1" stroke="#111" stroke-opacity="0.19" stroke-width="1.15" stroke-linecap="round"/><line x1="124.8" y1="389.9" x2="124.8" y2="399.0" stroke="#111" stroke-opacity="0.19" stroke-width="1.15" stroke-linecap="round"/><line x1="124.8" y1="369.0" x2="124.8" y2="383.4" stroke="#111" stroke-opacity="0.16" stroke-width="1.15" stroke-linecap="round"/><line x1="124.8" y1="345.6" x2="124.8" y2="362.4" stroke="#111" stroke-opacity="0.16" stroke-width="1.15" stroke-linecap="round"/><line x1="124.8" y1="328.1" x2="124.8" y2="341.4" stroke="#111" stroke-opacity="0.16" stroke-width="1.15" stroke-linecap="round"/><line x1="124.8" y1="304.3" x2="124.8" y2="320.4" stroke="#111" stroke-opacity="0.15" stroke-width="1.15" stroke-linecap="round"/><line x1="124.8" y1="283.3" x2="124.8" y2="299.4" stroke="#111" stroke-opacity="0.18" stroke-width="1.15" stroke-linecap="round"/><line x1="124.8" y1="262.5" x2="124.8" y2="278.4" stroke="#111" stroke-opacity="0.15" stroke-width="1.15" stroke-linecap="round"/><line x1="124.8" y1="244.1" x2="124.8" y2="257.4" stroke="#111" stroke-opacity="0.14" stroke-width="1.15" stroke-linecap="round"/><line x1="124.8" y1="222.0" x2="124.8" y2="236.4" stroke="#111" stroke-opacity="0.17" stroke-width="1.15" stroke-linecap="round"/><line x1="124.8" y1="202.5" x2="124.8" y2="215.4" stroke="#111" stroke-opacity="0.10" stroke-width="1.15" stroke-linecap="round"/><line x1="129.0" y1="1.0" x2="129.0" y2="11.8" stroke="#111" stroke-opacity="0.18" stroke-width="1.15" stroke-linecap="round"/><line x1="129.0" y1="21.8" x2="129.0" y2="35.0" stroke="#111" stroke-opacity="0.15" stroke-width="1.15" stroke-linecap="round"/><line x1="129.0" y1="42.8" x2="129.0" y2="55.8" stroke="#111" stroke-opacity="0.16" stroke-width="1.15" stroke-linecap="round"/><line x1="129.0" y1="63.8" x2="129.0" y2="76.3" stroke="#111" stroke-opacity="0.14" stroke-width="1.15" stroke-linecap="round"/><line x1="129.0" y1="84.8" x2="129.0" y2="98.2" stroke="#111" stroke-opacity="0.17" stroke-width="1.15" stroke-linecap="round"/><line x1="129.0" y1="105.8" x2="129.0" y2="119.1" stroke="#111" stroke-opacity="0.15" stroke-width="1.15" stroke-linecap="round"/><line x1="129.0" y1="126.8" x2="129.0" y2="138.1" stroke="#111" stroke-opacity="0.19" stroke-width="1.15" stroke-linecap="round"/><line x1="129.0" y1="147.8" x2="129.0" y2="158.3" stroke="#111" stroke-opacity="0.16" stroke-width="1.15" stroke-linecap="round"/><line x1="129.0" y1="168.8" x2="129.0" y2="181.1" stroke="#111" stroke-opacity="0.20" stroke-width="1.15" stroke-linecap="round"/><line x1="129.0" y1="189.8" x2="129.0" y2="200.8" stroke="#111" stroke-opacity="0.08" stroke-width="1.15" stroke-linecap="round"/><line x1="129.0" y1="385.8" x2="129.0" y2="399.0" stroke="#111" stroke-opacity="0.09" stroke-width="1.15" stroke-linecap="round"/><line x1="129.0" y1="366.1" x2="129.0" y2="378.2" stroke="#111" stroke-opacity="0.10" stroke-width="1.15" stroke-linecap="round"/><line x1="129.0" y1="345.0" x2="129.0" y2="357.2" stroke="#111" stroke-opacity="0.09" stroke-width="1.15" stroke-linecap="round"/><line x1="129.0" y1="324.1" x2="129.0" y2="336.2" stroke="#111" stroke-opacity="0.12" stroke-width="1.15" stroke-linecap="round"/><line x1="129.0" y1="302.3" x2="129.0" y2="315.2" stroke="#111" stroke-opacity="0.11" stroke-width="1.15" stroke-linecap="round"/><line x1="129.0" y1="282.5" x2="129.0" y2="294.2" stroke="#111" stroke-opacity="0.11" stroke-width="1.15" stroke-linecap="round"/><line x1="129.0" y1="262.9" x2="129.0" y2="273.2" stroke="#111" stroke-opacity="0.12" stroke-width="1.15" stroke-linecap="round"/><line x1="129.0" y1="239.9" x2="129.0" y2="252.2" stroke="#111" stroke-opacity="0.10" stroke-width="1.15" stroke-linecap="round"/><line x1="129.0" y1="219.0" x2="129.0" y2="231.2" stroke="#111" stroke-opacity="0.09" stroke-width="1.15" stroke-linecap="round"/><line x1="129.0" y1="199.0" x2="129.0" y2="210.2" stroke="#111" stroke-opacity="0.04" stroke-width="1.15" stroke-linecap="round"/><line x1="133.1" y1="6.0" x2="133.1" y2="16.0" stroke="#111" stroke-opacity="0.11" stroke-width="1.15" stroke-linecap="round"/><line x1="133.1" y1="27.0" x2="133.1" y2="38.5" stroke="#111" stroke-opacity="0.11" stroke-width="1.15" stroke-linecap="round"/><line x1="133.1" y1="48.0" x2="133.1" y2="60.0" stroke="#111" stroke-opacity="0.13" stroke-width="1.15" stroke-linecap="round"/><line x1="133.1" y1="69.0" x2="133.1" y2="79.4" stroke="#111" stroke-opacity="0.10" stroke-width="1.15" stroke-linecap="round"/><line x1="133.1" y1="90.0" x2="133.1" y2="103.4" stroke="#111" stroke-opacity="0.12" stroke-width="1.15" stroke-linecap="round"/><line x1="133.1" y1="111.0" x2="133.1" y2="122.0" stroke="#111" stroke-opacity="0.12" stroke-width="1.15" stroke-linecap="round"/><line x1="133.1" y1="132.0" x2="133.1" y2="145.4" stroke="#111" stroke-opacity="0.10" stroke-width="1.15" stroke-linecap="round"/><line x1="133.1" y1="153.0" x2="133.1" y2="165.9" stroke="#111" stroke-opacity="0.08" stroke-width="1.15" stroke-linecap="round"/><line x1="133.1" y1="174.0" x2="133.1" y2="187.4" stroke="#111" stroke-opacity="0.09" stroke-width="1.15" stroke-linecap="round"/><line x1="133.1" y1="195.0" x2="133.1" y2="205.7" stroke="#111" stroke-opacity="0.05" stroke-width="1.15" stroke-linecap="round"/><line x1="133.1" y1="381.2" x2="133.1" y2="394.0" stroke="#111" stroke-opacity="0.08" stroke-width="1.15" stroke-linecap="round"/><line x1="133.1" y1="361.3" x2="133.1" y2="373.0" stroke="#111" stroke-opacity="0.09" stroke-width="1.15" stroke-linecap="round"/><line x1="133.1" y1="341.9" x2="133.1" y2="352.0" stroke="#111" stroke-opacity="0.09" stroke-width="1.15" stroke-linecap="round"/><line x1="133.1" y1="318.6" x2="133.1" y2="331.0" stroke="#111" stroke-opacity="0.06" stroke-width="1.15" stroke-linecap="round"/><line x1="133.1" y1="297.3" x2="133.1" y2="310.0" stroke="#111" stroke-opacity="0.07" stroke-width="1.15" stroke-linecap="round"/><line x1="133.1" y1="277.2" x2="133.1" y2="289.0" stroke="#111" stroke-opacity="0.09" stroke-width="1.15" stroke-linecap="round"/><line x1="133.1" y1="257.4" x2="133.1" y2="268.0" stroke="#111" stroke-opacity="0.06" stroke-width="1.15" stroke-linecap="round"/><line x1="133.1" y1="234.8" x2="133.1" y2="247.0" stroke="#111" stroke-opacity="0.06" stroke-width="1.15" stroke-linecap="round"/><line x1="133.1" y1="214.2" x2="133.1" y2="226.0" stroke="#111" stroke-opacity="0.07" stroke-width="1.15" stroke-linecap="round"/><line x1="137.3" y1="1.0" x2="137.3" y2="0.9" stroke="#111" stroke-opacity="0.08" stroke-width="1.15" stroke-linecap="round"/><line x1="137.3" y1="11.2" x2="137.3" y2="24.1" stroke="#111" stroke-opacity="0.08" stroke-width="1.15" stroke-linecap="round"/><line x1="137.3" y1="32.2" x2="137.3" y2="44.0" stroke="#111" stroke-opacity="0.09" stroke-width="1.15" stroke-linecap="round"/><line x1="137.3" y1="53.2" x2="137.3" y2="65.9" stroke="#111" stroke-opacity="0.06" stroke-width="1.15" stroke-linecap="round"/><line x1="137.3" y1="74.2" x2="137.3" y2="85.4" stroke="#111" stroke-opacity="0.06" stroke-width="1.15" stroke-linecap="round"/><line x1="137.3" y1="95.2" x2="137.3" y2="105.2" stroke="#111" stroke-opacity="0.07" stroke-width="1.15" stroke-linecap="round"/><line x1="137.3" y1="116.2" x2="137.3" y2="129.1" stroke="#111" stroke-opacity="0.08" stroke-width="1.15" stroke-linecap="round"/><line x1="137.3" y1="137.2" x2="137.3" y2="147.5" stroke="#111" stroke-opacity="0.06" stroke-width="1.15" stroke-linecap="round"/><line x1="137.3" y1="158.2" x2="137.3" y2="169.5" stroke="#111" stroke-opacity="0.08" stroke-width="1.15" stroke-linecap="round"/><line x1="137.3" y1="179.2" x2="137.3" y2="191.3" stroke="#111" stroke-opacity="0.06" stroke-width="1.15" stroke-linecap="round"/><line x1="137.3" y1="396.4" x2="137.3" y2="399.0" stroke="#111" stroke-opacity="0.05" stroke-width="1.15" stroke-linecap="round"/><line x1="137.3" y1="376.7" x2="137.3" y2="388.8" stroke="#111" stroke-opacity="0.07" stroke-width="1.15" stroke-linecap="round"/><line x1="137.3" y1="355.4" x2="137.3" y2="367.8" stroke="#111" stroke-opacity="0.05" stroke-width="1.15" stroke-linecap="round"/><line x1="137.3" y1="334.6" x2="137.3" y2="346.8" stroke="#111" stroke-opacity="0.05" stroke-width="1.15" stroke-linecap="round"/><line x1="137.3" y1="315.8" x2="137.3" y2="325.8" stroke="#111" stroke-opacity="0.05" stroke-width="1.15" stroke-linecap="round"/><line x1="137.3" y1="293.8" x2="137.3" y2="304.8" stroke="#111" stroke-opacity="0.06" stroke-width="1.15" stroke-linecap="round"/><line x1="137.3" y1="272.9" x2="137.3" y2="283.8" stroke="#111" stroke-opacity="0.06" stroke-width="1.15" stroke-linecap="round"/><line x1="137.3" y1="250.5" x2="137.3" y2="262.8" stroke="#111" stroke-opacity="0.05" stroke-width="1.15" stroke-linecap="round"/><line x1="137.3" y1="231.5" x2="137.3" y2="241.8" stroke="#111" stroke-opacity="0.06" stroke-width="1.15" stroke-linecap="round"/><line x1="137.3" y1="209.3" x2="137.3" y2="220.8" stroke="#111" stroke-opacity="0.03" stroke-width="1.15" stroke-linecap="round"/><line x1="141.4" y1="1.0" x2="141.4" y2="8.6" stroke="#111" stroke-opacity="0.06" stroke-width="1.15" stroke-linecap="round"/><line x1="141.4" y1="16.4" x2="141.4" y2="27.6" stroke="#111" stroke-opacity="0.05" stroke-width="1.15" stroke-linecap="round"/><line x1="141.4" y1="37.4" x2="141.4" y2="50.8" stroke="#111" stroke-opacity="0.06" stroke-width="1.15" stroke-linecap="round"/><line x1="141.4" y1="58.4" x2="141.4" y2="70.9" stroke="#111" stroke-opacity="0.05" stroke-width="1.15" stroke-linecap="round"/><line x1="141.4" y1="79.4" x2="141.4" y2="90.4" stroke="#111" stroke-opacity="0.05" stroke-width="1.15" stroke-linecap="round"/><line x1="141.4" y1="100.4" x2="141.4" y2="110.8" stroke="#111" stroke-opacity="0.06" stroke-width="1.15" stroke-linecap="round"/><line x1="141.4" y1="121.4" x2="141.4" y2="132.8" stroke="#111" stroke-opacity="0.06" stroke-width="1.15" stroke-linecap="round"/><line x1="141.4" y1="142.4" x2="141.4" y2="153.7" stroke="#111" stroke-opacity="0.05" stroke-width="1.15" stroke-linecap="round"/><line x1="141.4" y1="163.4" x2="141.4" y2="175.1" stroke="#111" stroke-opacity="0.07" stroke-width="1.15" stroke-linecap="round"/><line x1="141.4" y1="184.4" x2="141.4" y2="195.5" stroke="#111" stroke-opacity="0.04" stroke-width="1.15" stroke-linecap="round"/><line x1="141.4" y1="392.7" x2="141.4" y2="399.0" stroke="#111" stroke-opacity="0.04" stroke-width="1.15" stroke-linecap="round"/><line x1="141.4" y1="370.6" x2="141.4" y2="383.6" stroke="#111" stroke-opacity="0.04" stroke-width="1.15" stroke-linecap="round"/><line x1="141.4" y1="349.7" x2="141.4" y2="362.6" stroke="#111" stroke-opacity="0.05" stroke-width="1.15" stroke-linecap="round"/><line x1="141.4" y1="330.1" x2="141.4" y2="341.6" stroke="#111" stroke-opacity="0.05" stroke-width="1.15" stroke-linecap="round"/><line x1="141.4" y1="309.3" x2="141.4" y2="320.6" stroke="#111" stroke-opacity="0.05" stroke-width="1.15" stroke-linecap="round"/><line x1="141.4" y1="287.6" x2="141.4" y2="299.6" stroke="#111" stroke-opacity="0.04" stroke-width="1.15" stroke-linecap="round"/><line x1="141.4" y1="268.5" x2="141.4" y2="278.6" stroke="#111" stroke-opacity="0.04" stroke-width="1.15" stroke-linecap="round"/><line x1="141.4" y1="246.7" x2="141.4" y2="257.6" stroke="#111" stroke-opacity="0.04" stroke-width="1.15" stroke-linecap="round"/><line x1="141.4" y1="223.4" x2="141.4" y2="236.6" stroke="#111" stroke-opacity="0.04" stroke-width="1.15" stroke-linecap="round"/><line x1="145.6" y1="1.0" x2="145.6" y2="11.9" stroke="#111" stroke-opacity="0.04" stroke-width="1.15" stroke-linecap="round"/><line x1="145.6" y1="21.6" x2="145.6" y2="34.6" stroke="#111" stroke-opacity="0.04" stroke-width="1.15" stroke-linecap="round"/><line x1="145.6" y1="42.6" x2="145.6" y2="54.0" stroke="#111" stroke-opacity="0.04" stroke-width="1.15" stroke-linecap="round"/><line x1="145.6" y1="63.6" x2="145.6" y2="76.4" stroke="#111" stroke-opacity="0.05" stroke-width="1.15" stroke-linecap="round"/><line x1="145.6" y1="84.6" x2="145.6" y2="96.6" stroke="#111" stroke-opacity="0.05" stroke-width="1.15" stroke-linecap="round"/><line x1="145.6" y1="105.6" x2="145.6" y2="115.8" stroke="#111" stroke-opacity="0.05" stroke-width="1.15" stroke-linecap="round"/><line x1="145.6" y1="126.6" x2="145.6" y2="136.8" stroke="#111" stroke-opacity="0.04" stroke-width="1.15" stroke-linecap="round"/><line x1="145.6" y1="147.6" x2="145.6" y2="158.8" stroke="#111" stroke-opacity="0.05" stroke-width="1.15" stroke-linecap="round"/><line x1="145.6" y1="168.6" x2="145.6" y2="180.8" stroke="#111" stroke-opacity="0.04" stroke-width="1.15" stroke-linecap="round"/><line x1="145.6" y1="387.3" x2="145.6" y2="399.0" stroke="#111" stroke-opacity="0.04" stroke-width="1.15" stroke-linecap="round"/><line x1="145.6" y1="367.2" x2="145.6" y2="378.4" stroke="#111" stroke-opacity="0.04" stroke-width="1.15" stroke-linecap="round"/><line x1="145.6" y1="346.4" x2="145.6" y2="357.4" stroke="#111" stroke-opacity="0.04" stroke-width="1.15" stroke-linecap="round"/><line x1="145.6" y1="324.4" x2="145.6" y2="336.4" stroke="#111" stroke-opacity="0.04" stroke-width="1.15" stroke-linecap="round"/><line x1="145.6" y1="302.1" x2="145.6" y2="315.4" stroke="#111" stroke-opacity="0.04" stroke-width="1.15" stroke-linecap="round"/><line x1="145.6" y1="283.1" x2="145.6" y2="294.4" stroke="#111" stroke-opacity="0.04" stroke-width="1.15" stroke-linecap="round"/><line x1="145.6" y1="261.2" x2="145.6" y2="273.4" stroke="#111" stroke-opacity="0.04" stroke-width="1.15" stroke-linecap="round"/><line x1="145.6" y1="219.9" x2="145.6" y2="231.4" stroke="#111" stroke-opacity="0.03" stroke-width="1.15" stroke-linecap="round"/><line x1="149.7" y1="5.8" x2="149.7" y2="16.2" stroke="#111" stroke-opacity="0.03" stroke-width="1.15" stroke-linecap="round"/><line x1="149.7" y1="47.8" x2="149.7" y2="58.3" stroke="#111" stroke-opacity="0.04" stroke-width="1.15" stroke-linecap="round"/><line x1="149.7" y1="68.8" x2="149.7" y2="80.9" stroke="#111" stroke-opacity="0.04" stroke-width="1.15" stroke-linecap="round"/><line x1="149.7" y1="89.8" x2="149.7" y2="100.6" stroke="#111" stroke-opacity="0.04" stroke-width="1.15" stroke-linecap="round"/><line x1="149.7" y1="110.8" x2="149.7" y2="123.3" stroke="#111" stroke-opacity="0.04" stroke-width="1.15" stroke-linecap="round"/><line x1="149.7" y1="131.8" x2="149.7" y2="142.1" stroke="#111" stroke-opacity="0.04" stroke-width="1.15" stroke-linecap="round"/><line x1="149.7" y1="152.8" x2="149.7" y2="162.8" stroke="#111" stroke-opacity="0.04" stroke-width="1.15" stroke-linecap="round"/><line x1="149.7" y1="173.8" x2="149.7" y2="187.0" stroke="#111" stroke-opacity="0.04" stroke-width="1.15" stroke-linecap="round"/><line x1="149.7" y1="383.9" x2="149.7" y2="394.2" stroke="#111" stroke-opacity="0.04" stroke-width="1.15" stroke-linecap="round"/><line x1="149.7" y1="362.2" x2="149.7" y2="373.2" stroke="#111" stroke-opacity="0.03" stroke-width="1.15" stroke-linecap="round"/><line x1="149.7" y1="341.9" x2="149.7" y2="352.2" stroke="#111" stroke-opacity="0.03" stroke-width="1.15" stroke-linecap="round"/><line x1="149.7" y1="236.5" x2="149.7" y2="247.2" stroke="#111" stroke-opacity="0.03" stroke-width="1.15" stroke-linecap="round"/><line x1="153.9" y1="1.0" x2="153.9" y2="0.3" stroke="#111" stroke-opacity="0.04" stroke-width="1.15" stroke-linecap="round"/><line x1="153.9" y1="11.0" x2="153.9" y2="21.4" stroke="#111" stroke-opacity="0.04" stroke-width="1.15" stroke-linecap="round"/><line x1="153.9" y1="32.0" x2="153.9" y2="43.7" stroke="#111" stroke-opacity="0.03" stroke-width="1.15" stroke-linecap="round"/><line x1="153.9" y1="53.0" x2="153.9" y2="65.0" stroke="#111" stroke-opacity="0.04" stroke-width="1.15" stroke-linecap="round"/><line x1="153.9" y1="74.0" x2="153.9" y2="87.3" stroke="#111" stroke-opacity="0.03" stroke-width="1.15" stroke-linecap="round"/><line x1="153.9" y1="116.0" x2="153.9" y2="128.8" stroke="#111" stroke-opacity="0.04" stroke-width="1.15" stroke-linecap="round"/><line x1="153.9" y1="397.8" x2="153.9" y2="399.0" stroke="#111" stroke-opacity="0.03" stroke-width="1.15" stroke-linecap="round"/><line x1="153.9" y1="336.7" x2="153.9" y2="347.0" stroke="#111" stroke-opacity="0.03" stroke-width="1.15" stroke-linecap="round"/><line x1="153.9" y1="292.8" x2="153.9" y2="305.0" stroke="#111" stroke-opacity="0.03" stroke-width="1.15" stroke-linecap="round"/><line x1="153.9" y1="251.3" x2="153.9" y2="263.0" stroke="#111" stroke-opacity="0.03" stroke-width="1.15" stroke-linecap="round"/><line x1="158.0" y1="163.2" x2="158.0" y2="173.9" stroke="#111" stroke-opacity="0.03" stroke-width="1.15" stroke-linecap="round"/><line x1="1.0" y1="165.3" x2="19.0" y2="165.3" stroke="#111" stroke-opacity="0.03" stroke-width="1.2" stroke-linecap="round"/><line x1="31.0" y1="165.3" x2="61.0" y2="165.3" stroke="#111" stroke-opacity="0.04" stroke-width="1.2" stroke-linecap="round"/><line x1="203.7" y1="165.3" x2="224.0" y2="165.3" stroke="#111" stroke-opacity="0.04" stroke-width="1.2" stroke-linecap="round"/><line x1="168.8" y1="165.3" x2="194.0" y2="165.3" stroke="#111" stroke-opacity="0.04" stroke-width="1.2" stroke-linecap="round"/><line x1="132.8" y1="165.3" x2="160.0" y2="165.3" stroke="#111" stroke-opacity="0.05" stroke-width="1.2" stroke-linecap="round"/><line x1="1.0" y1="169.5" x2="14.6" y2="169.5" stroke="#111" stroke-opacity="0.06" stroke-width="1.2" stroke-linecap="round"/><line x1="23.0" y1="169.5" x2="45.0" y2="169.5" stroke="#111" stroke-opacity="0.07" stroke-width="1.2" stroke-linecap="round"/><line x1="57.0" y1="169.5" x2="76.9" y2="169.5" stroke="#111" stroke-opacity="0.06" stroke-width="1.2" stroke-linecap="round"/><line x1="206.6" y1="169.5" x2="224.0" y2="169.5" stroke="#111" stroke-opacity="0.06" stroke-width="1.2" stroke-linecap="round"/><line x1="174.9" y1="169.5" x2="202.0" y2="169.5" stroke="#111" stroke-opacity="0.06" stroke-width="1.2" stroke-linecap="round"/><line x1="147.3" y1="169.5" x2="168.0" y2="169.5" stroke="#111" stroke-opacity="0.08" stroke-width="1.2" stroke-linecap="round"/><line x1="103.5" y1="169.5" x2="134.0" y2="169.5" stroke="#111" stroke-opacity="0.04" stroke-width="1.2" stroke-linecap="round"/><line x1="1.0" y1="173.6" x2="0.9" y2="173.6" stroke="#111" stroke-opacity="0.13" stroke-width="1.2" stroke-linecap="round"/><line x1="15.0" y1="173.6" x2="36.8" y2="173.6" stroke="#111" stroke-opacity="0.09" stroke-width="1.2" stroke-linecap="round"/><line x1="49.0" y1="173.6" x2="75.8" y2="173.6" stroke="#111" stroke-opacity="0.12" stroke-width="1.2" stroke-linecap="round"/><line x1="83.0" y1="173.6" x2="103.2" y2="173.6" stroke="#111" stroke-opacity="0.06" stroke-width="1.2" stroke-linecap="round"/><line x1="211.4" y1="173.6" x2="224.0" y2="173.6" stroke="#111" stroke-opacity="0.14" stroke-width="1.2" stroke-linecap="round"/><line x1="180.7" y1="173.6" x2="210.0" y2="173.6" stroke="#111" stroke-opacity="0.10" stroke-width="1.2" stroke-linecap="round"/><line x1="142.5" y1="173.6" x2="176.0" y2="173.6" stroke="#111" stroke-opacity="0.12" stroke-width="1.2" stroke-linecap="round"/><line x1="119.1" y1="173.6" x2="142.0" y2="173.6" stroke="#111" stroke-opacity="0.07" stroke-width="1.2" stroke-linecap="round"/><line x1="7.0" y1="177.8" x2="25.6" y2="177.8" stroke="#111" stroke-opacity="0.20" stroke-width="1.2" stroke-linecap="round"/><line x1="41.0" y1="177.8" x2="63.3" y2="177.8" stroke="#111" stroke-opacity="0.17" stroke-width="1.2" stroke-linecap="round"/><line x1="75.0" y1="177.8" x2="97.3" y2="177.8" stroke="#111" stroke-opacity="0.08" stroke-width="1.2" stroke-linecap="round"/><line x1="195.3" y1="177.8" x2="218.0" y2="177.8" stroke="#111" stroke-opacity="0.19" stroke-width="1.2" stroke-linecap="round"/><line x1="151.8" y1="177.8" x2="184.0" y2="177.8" stroke="#111" stroke-opacity="0.16" stroke-width="1.2" stroke-linecap="round"/><line x1="118.0" y1="177.8" x2="150.0" y2="177.8" stroke="#111" stroke-opacity="0.12" stroke-width="1.2" stroke-linecap="round"/><line x1="1.0" y1="181.9" x2="26.0" y2="181.9" stroke="#111" stroke-opacity="0.35" stroke-width="1.2" stroke-linecap="round"/><line x1="33.0" y1="181.9" x2="59.8" y2="181.9" stroke="#111" stroke-opacity="0.34" stroke-width="1.2" stroke-linecap="round"/><line x1="67.0" y1="181.9" x2="100.0" y2="181.9" stroke="#111" stroke-opacity="0.36" stroke-width="1.2" stroke-linecap="round"/><line x1="206.8" y1="181.9" x2="224.0" y2="181.9" stroke="#111" stroke-opacity="0.39" stroke-width="1.2" stroke-linecap="round"/><line x1="167.9" y1="181.9" x2="192.0" y2="181.9" stroke="#111" stroke-opacity="0.36" stroke-width="1.2" stroke-linecap="round"/><line x1="136.0" y1="181.9" x2="158.0" y2="181.9" stroke="#111" stroke-opacity="0.30" stroke-width="1.2" stroke-linecap="round"/><line x1="99.8" y1="181.9" x2="124.0" y2="181.9" stroke="#111" stroke-opacity="0.18" stroke-width="1.2" stroke-linecap="round"/><line x1="1.0" y1="186.1" x2="24.4" y2="186.1" stroke="#111" stroke-opacity="0.43" stroke-width="1.2" stroke-linecap="round"/><line x1="25.0" y1="186.1" x2="52.3" y2="186.1" stroke="#111" stroke-opacity="0.39" stroke-width="1.2" stroke-linecap="round"/><line x1="59.0" y1="186.1" x2="81.0" y2="186.1" stroke="#111" stroke-opacity="0.54" stroke-width="1.2" stroke-linecap="round"/><line x1="93.0" y1="186.1" x2="113.1" y2="186.1" stroke="#111" stroke-opacity="0.27" stroke-width="1.2" stroke-linecap="round"/><line x1="205.2" y1="186.1" x2="224.0" y2="186.1" stroke="#111" stroke-opacity="0.32" stroke-width="1.2" stroke-linecap="round"/><line x1="167.3" y1="186.1" x2="200.0" y2="186.1" stroke="#111" stroke-opacity="0.33" stroke-width="1.2" stroke-linecap="round"/><line x1="138.7" y1="186.1" x2="166.0" y2="186.1" stroke="#111" stroke-opacity="0.33" stroke-width="1.2" stroke-linecap="round"/><line x1="97.9" y1="186.1" x2="132.0" y2="186.1" stroke="#111" stroke-opacity="0.19" stroke-width="1.2" stroke-linecap="round"/><line x1="1.0" y1="190.2" x2="15.2" y2="190.2" stroke="#111" stroke-opacity="0.40" stroke-width="1.2" stroke-linecap="round"/><line x1="17.0" y1="190.2" x2="45.9" y2="190.2" stroke="#111" stroke-opacity="0.41" stroke-width="1.2" stroke-linecap="round"/><line x1="51.0" y1="190.2" x2="69.8" y2="190.2" stroke="#111" stroke-opacity="0.56" stroke-width="1.2" stroke-linecap="round"/><line x1="85.0" y1="190.2" x2="119.0" y2="190.2" stroke="#111" stroke-opacity="0.30" stroke-width="1.2" stroke-linecap="round"/><line x1="211.2" y1="190.2" x2="224.0" y2="190.2" stroke="#111" stroke-opacity="0.55" stroke-width="1.2" stroke-linecap="round"/><line x1="188.5" y1="190.2" x2="208.0" y2="190.2" stroke="#111" stroke-opacity="0.55" stroke-width="1.2" stroke-linecap="round"/><line x1="152.8" y1="190.2" x2="174.0" y2="190.2" stroke="#111" stroke-opacity="0.55" stroke-width="1.2" stroke-linecap="round"/><line x1="116.0" y1="190.2" x2="140.0" y2="190.2" stroke="#111" stroke-opacity="0.27" stroke-width="1.2" stroke-linecap="round"/><line x1="1.0" y1="194.4" x2="4.5" y2="194.4" stroke="#111" stroke-opacity="0.63" stroke-width="1.2" stroke-linecap="round"/><line x1="9.0" y1="194.4" x2="35.1" y2="194.4" stroke="#111" stroke-opacity="0.50" stroke-width="1.2" stroke-linecap="round"/><line x1="43.0" y1="194.4" x2="69.1" y2="194.4" stroke="#111" stroke-opacity="0.68" stroke-width="1.2" stroke-linecap="round"/><line x1="77.0" y1="194.4" x2="110.8" y2="194.4" stroke="#111" stroke-opacity="0.34" stroke-width="1.2" stroke-linecap="round"/><line x1="186.5" y1="194.4" x2="216.0" y2="194.4" stroke="#111" stroke-opacity="0.83" stroke-width="1.2" stroke-linecap="round"/><line x1="148.1" y1="194.4" x2="182.0" y2="194.4" stroke="#111" stroke-opacity="0.83" stroke-width="1.2" stroke-linecap="round"/><line x1="114.9" y1="194.4" x2="148.0" y2="194.4" stroke="#111" stroke-opacity="0.40" stroke-width="1.2" stroke-linecap="round"/><line x1="0.0" y1="198.5" x2="41.0" y2="198.5" stroke="#111" stroke-opacity="0.87" stroke-width="1.25" stroke-linecap="round"/><line x1="43.7" y1="198.5" x2="118.0" y2="198.5" stroke="#111" stroke-opacity="0.88" stroke-width="1.25" stroke-linecap="round"/><line x1="121.1" y1="198.5" x2="207.7" y2="198.5" stroke="#111" stroke-opacity="0.86" stroke-width="1.25" stroke-linecap="round"/><line x1="209.4" y1="198.5" x2="225.0" y2="198.5" stroke="#111" stroke-opacity="0.78" stroke-width="1.25" stroke-linecap="round"/><line x1="0.0" y1="202.7" x2="83.5" y2="202.7" stroke="#111" stroke-opacity="0.76" stroke-width="1.25" stroke-linecap="round"/><line x1="87.3" y1="202.7" x2="128.9" y2="202.7" stroke="#111" stroke-opacity="0.89" stroke-width="1.25" stroke-linecap="round"/><line x1="132.5" y1="202.7" x2="198.5" y2="202.7" stroke="#111" stroke-opacity="0.90" stroke-width="1.25" stroke-linecap="round"/><line x1="201.5" y1="202.7" x2="225.0" y2="202.7" stroke="#111" stroke-opacity="0.77" stroke-width="1.25" stroke-linecap="round"/><line x1="1.0" y1="206.8" x2="6.0" y2="206.8" stroke="#111" stroke-opacity="0.84" stroke-width="1.2" stroke-linecap="round"/><line x1="9.0" y1="206.8" x2="40.6" y2="206.8" stroke="#111" stroke-opacity="0.62" stroke-width="1.2" stroke-linecap="round"/><line x1="43.0" y1="206.8" x2="66.7" y2="206.8" stroke="#111" stroke-opacity="0.60" stroke-width="1.2" stroke-linecap="round"/><line x1="77.0" y1="206.8" x2="95.5" y2="206.8" stroke="#111" stroke-opacity="0.38" stroke-width="1.2" stroke-linecap="round"/><line x1="222.4" y1="206.8" x2="224.0" y2="206.8" stroke="#111" stroke-opacity="0.67" stroke-width="1.2" stroke-linecap="round"/><line x1="192.4" y1="206.8" x2="216.0" y2="206.8" stroke="#111" stroke-opacity="0.73" stroke-width="1.2" stroke-linecap="round"/><line x1="156.4" y1="206.8" x2="182.0" y2="206.8" stroke="#111" stroke-opacity="0.56" stroke-width="1.2" stroke-linecap="round"/><line x1="115.6" y1="206.8" x2="148.0" y2="206.8" stroke="#111" stroke-opacity="0.27" stroke-width="1.2" stroke-linecap="round"/><line x1="1.0" y1="211.0" x2="5.3" y2="211.0" stroke="#111" stroke-opacity="0.54" stroke-width="1.2" stroke-linecap="round"/><line x1="17.0" y1="211.0" x2="47.8" y2="211.0" stroke="#111" stroke-opacity="0.49" stroke-width="1.2" stroke-linecap="round"/><line x1="51.0" y1="211.0" x2="73.1" y2="211.0" stroke="#111" stroke-opacity="0.59" stroke-width="1.2" stroke-linecap="round"/><line x1="85.0" y1="211.0" x2="107.5" y2="211.0" stroke="#111" stroke-opacity="0.27" stroke-width="1.2" stroke-linecap="round"/><line x1="209.7" y1="211.0" x2="224.0" y2="211.0" stroke="#111" stroke-opacity="0.44" stroke-width="1.2" stroke-linecap="round"/><line x1="186.0" y1="211.0" x2="208.0" y2="211.0" stroke="#111" stroke-opacity="0.48" stroke-width="1.2" stroke-linecap="round"/><line x1="150.4" y1="211.0" x2="174.0" y2="211.0" stroke="#111" stroke-opacity="0.61" stroke-width="1.2" stroke-linecap="round"/><line x1="110.9" y1="211.0" x2="140.0" y2="211.0" stroke="#111" stroke-opacity="0.32" stroke-width="1.2" stroke-linecap="round"/><line x1="1.0" y1="215.1" x2="10.6" y2="215.1" stroke="#111" stroke-opacity="0.49" stroke-width="1.2" stroke-linecap="round"/><line x1="25.0" y1="215.1" x2="47.2" y2="215.1" stroke="#111" stroke-opacity="0.36" stroke-width="1.2" stroke-linecap="round"/><line x1="59.0" y1="215.1" x2="83.9" y2="215.1" stroke="#111" stroke-opacity="0.55" stroke-width="1.2" stroke-linecap="round"/><line x1="93.0" y1="215.1" x2="117.2" y2="215.1" stroke="#111" stroke-opacity="0.20" stroke-width="1.2" stroke-linecap="round"/><line x1="201.2" y1="215.1" x2="224.0" y2="215.1" stroke="#111" stroke-opacity="0.55" stroke-width="1.2" stroke-linecap="round"/><line x1="175.5" y1="215.1" x2="200.0" y2="215.1" stroke="#111" stroke-opacity="0.34" stroke-width="1.2" stroke-linecap="round"/><line x1="135.1" y1="215.1" x2="166.0" y2="215.1" stroke="#111" stroke-opacity="0.50" stroke-width="1.2" stroke-linecap="round"/><line x1="108.3" y1="215.1" x2="132.0" y2="215.1" stroke="#111" stroke-opacity="0.25" stroke-width="1.2" stroke-linecap="round"/><line x1="1.0" y1="219.3" x2="23.4" y2="219.3" stroke="#111" stroke-opacity="0.27" stroke-width="1.2" stroke-linecap="round"/><line x1="33.0" y1="219.3" x2="60.8" y2="219.3" stroke="#111" stroke-opacity="0.35" stroke-width="1.2" stroke-linecap="round"/><line x1="67.0" y1="219.3" x2="92.9" y2="219.3" stroke="#111" stroke-opacity="0.37" stroke-width="1.2" stroke-linecap="round"/><line x1="101.0" y1="219.3" x2="119.5" y2="219.3" stroke="#111" stroke-opacity="0.15" stroke-width="1.2" stroke-linecap="round"/><line x1="201.6" y1="219.3" x2="224.0" y2="219.3" stroke="#111" stroke-opacity="0.23" stroke-width="1.2" stroke-linecap="round"/><line x1="159.1" y1="219.3" x2="192.0" y2="219.3" stroke="#111" stroke-opacity="0.25" stroke-width="1.2" stroke-linecap="round"/><line x1="136.4" y1="219.3" x2="158.0" y2="219.3" stroke="#111" stroke-opacity="0.38" stroke-width="1.2" stroke-linecap="round"/><line x1="1.0" y1="223.4" x2="6.2" y2="223.4" stroke="#111" stroke-opacity="0.18" stroke-width="1.2" stroke-linecap="round"/><line x1="7.0" y1="223.4" x2="40.1" y2="223.4" stroke="#111" stroke-opacity="0.15" stroke-width="1.2" stroke-linecap="round"/><line x1="41.0" y1="223.4" x2="70.7" y2="223.4" stroke="#111" stroke-opacity="0.24" stroke-width="1.2" stroke-linecap="round"/><line x1="75.0" y1="223.4" x2="96.4" y2="223.4" stroke="#111" stroke-opacity="0.08" stroke-width="1.2" stroke-linecap="round"/><line x1="219.6" y1="223.4" x2="224.0" y2="223.4" stroke="#111" stroke-opacity="0.22" stroke-width="1.2" stroke-linecap="round"/><line x1="184.6" y1="223.4" x2="218.0" y2="223.4" stroke="#111" stroke-opacity="0.19" stroke-width="1.2" stroke-linecap="round"/><line x1="159.8" y1="223.4" x2="184.0" y2="223.4" stroke="#111" stroke-opacity="0.15" stroke-width="1.2" stroke-linecap="round"/><line x1="127.3" y1="223.4" x2="150.0" y2="223.4" stroke="#111" stroke-opacity="0.24" stroke-width="1.2" stroke-linecap="round"/><line x1="1.0" y1="227.6" x2="2.2" y2="227.6" stroke="#111" stroke-opacity="0.10" stroke-width="1.2" stroke-linecap="round"/><line x1="15.0" y1="227.6" x2="34.1" y2="227.6" stroke="#111" stroke-opacity="0.10" stroke-width="1.2" stroke-linecap="round"/><line x1="49.0" y1="227.6" x2="70.2" y2="227.6" stroke="#111" stroke-opacity="0.08" stroke-width="1.2" stroke-linecap="round"/><line x1="83.0" y1="227.6" x2="109.7" y2="227.6" stroke="#111" stroke-opacity="0.06" stroke-width="1.2" stroke-linecap="round"/><line x1="213.5" y1="227.6" x2="224.0" y2="227.6" stroke="#111" stroke-opacity="0.11" stroke-width="1.2" stroke-linecap="round"/><line x1="176.6" y1="227.6" x2="210.0" y2="227.6" stroke="#111" stroke-opacity="0.08" stroke-width="1.2" stroke-linecap="round"/><line x1="154.1" y1="227.6" x2="176.0" y2="227.6" stroke="#111" stroke-opacity="0.08" stroke-width="1.2" stroke-linecap="round"/><line x1="118.8" y1="227.6" x2="142.0" y2="227.6" stroke="#111" stroke-opacity="0.06" stroke-width="1.2" stroke-linecap="round"/><line x1="1.0" y1="231.7" x2="15.3" y2="231.7" stroke="#111" stroke-opacity="0.05" stroke-width="1.2" stroke-linecap="round"/><line x1="23.0" y1="231.7" x2="46.6" y2="231.7" stroke="#111" stroke-opacity="0.06" stroke-width="1.2" stroke-linecap="round"/><line x1="57.0" y1="231.7" x2="80.0" y2="231.7" stroke="#111" stroke-opacity="0.07" stroke-width="1.2" stroke-linecap="round"/><line x1="91.0" y1="231.7" x2="124.8" y2="231.7" stroke="#111" stroke-opacity="0.03" stroke-width="1.2" stroke-linecap="round"/><line x1="208.1" y1="231.7" x2="224.0" y2="231.7" stroke="#111" stroke-opacity="0.07" stroke-width="1.2" stroke-linecap="round"/><line x1="176.3" y1="231.7" x2="202.0" y2="231.7" stroke="#111" stroke-opacity="0.05" stroke-width="1.2" stroke-linecap="round"/><line x1="134.6" y1="231.7" x2="168.0" y2="231.7" stroke="#111" stroke-opacity="0.08" stroke-width="1.2" stroke-linecap="round"/><line x1="115.3" y1="231.7" x2="134.0" y2="231.7" stroke="#111" stroke-opacity="0.04" stroke-width="1.2" stroke-linecap="round"/><line x1="31.0" y1="235.9" x2="51.9" y2="235.9" stroke="#111" stroke-opacity="0.03" stroke-width="1.2" stroke-linecap="round"/><line x1="65.0" y1="235.9" x2="95.0" y2="235.9" stroke="#111" stroke-opacity="0.03" stroke-width="1.2" stroke-linecap="round"/><line x1="197.0" y1="235.9" x2="224.0" y2="235.9" stroke="#111" stroke-opacity="0.04" stroke-width="1.2" stroke-linecap="round"/><line x1="165.3" y1="235.9" x2="194.0" y2="235.9" stroke="#111" stroke-opacity="0.04" stroke-width="1.2" stroke-linecap="round"/><path d="M89.9 194.4 L104.1 194.4 L104.1 174.5" fill="none" stroke="#111" stroke-opacity="0.56" stroke-width="1.1"/><path d="M82.4 190.2 L99.9 190.2 L99.9 170.2" fill="none" stroke="#111" stroke-opacity="0.46" stroke-width="1.1"/><path d="M80.1 186.1 L95.8 186.1 L95.8 161.9" fill="none" stroke="#111" stroke-opacity="0.41" stroke-width="1.1"/><path d="M75.0 181.9 L91.6 181.9 L91.6 163.3" fill="none" stroke="#111" stroke-opacity="0.30" stroke-width="1.1"/><path d="M72.2 177.8 L87.5 177.8 L87.5 153.2" fill="none" stroke="#111" stroke-opacity="0.19" stroke-width="1.1"/><path d="M58.4 173.6 L83.3 173.6 L83.3 150.0" fill="none" stroke="#111" stroke-opacity="0.14" stroke-width="1.1"/><path d="M66.6 169.5 L79.2 169.5 L79.2 151.3" fill="none" stroke="#111" stroke-opacity="0.08" stroke-width="1.1"/><path d="M131.1 194.4 L116.5 194.4 L116.5 181.6" fill="none" stroke="#111" stroke-opacity="0.63" stroke-width="1.1"/><path d="M134.4 190.2 L120.7 190.2 L120.7 170.9" fill="none" stroke="#111" stroke-opacity="0.43" stroke-width="1.1"/><path d="M150.0 186.1 L124.8 186.1 L124.8 171.5" fill="none" stroke="#111" stroke-opacity="0.34" stroke-width="1.1"/><path d="M150.0 181.9 L129.0 181.9 L129.0 166.4" fill="none" stroke="#111" stroke-opacity="0.31" stroke-width="1.1"/><path d="M151.1 177.8 L133.1 177.8 L133.1 153.0" fill="none" stroke="#111" stroke-opacity="0.21" stroke-width="1.1"/><path d="M153.3 173.6 L137.3 173.6 L137.3 163.6" fill="none" stroke="#111" stroke-opacity="0.12" stroke-width="1.1"/><path d="M155.7 169.5 L141.4 169.5 L141.4 150.3" fill="none" stroke="#111" stroke-opacity="0.07" stroke-width="1.1"/><path d="M86.7 206.8 L104.1 206.8 L104.1 218.3" fill="none" stroke="#111" stroke-opacity="0.59" stroke-width="1.1"/><path d="M82.2 211.0 L99.9 211.0 L99.9 231.2" fill="none" stroke="#111" stroke-opacity="0.57" stroke-width="1.1"/><path d="M81.3 215.1 L95.8 215.1 L95.8 232.2" fill="none" stroke="#111" stroke-opacity="0.34" stroke-width="1.1"/><path d="M68.8 219.3 L91.6 219.3 L91.6 233.0" fill="none" stroke="#111" stroke-opacity="0.34" stroke-width="1.1"/><path d="M64.7 223.4 L87.5 223.4 L87.5 237.5" fill="none" stroke="#111" stroke-opacity="0.24" stroke-width="1.1"/><path d="M65.3 227.6 L83.3 227.6 L83.3 244.4" fill="none" stroke="#111" stroke-opacity="0.12" stroke-width="1.1"/><path d="M54.0 231.7 L79.2 231.7 L79.2 249.6" fill="none" stroke="#111" stroke-opacity="0.07" stroke-width="1.1"/><path d="M131.2 206.8 L116.5 206.8 L116.5 230.3" fill="none" stroke="#111" stroke-opacity="0.59" stroke-width="1.1"/><path d="M136.2 211.0 L120.7 211.0 L120.7 224.1" fill="none" stroke="#111" stroke-opacity="0.44" stroke-width="1.1"/><path d="M148.2 215.1 L124.8 215.1 L124.8 238.0" fill="none" stroke="#111" stroke-opacity="0.47" stroke-width="1.1"/><path d="M153.6 219.3 L129.0 219.3 L129.0 240.2" fill="none" stroke="#111" stroke-opacity="0.34" stroke-width="1.1"/><path d="M154.5 223.4 L133.1 223.4 L133.1 246.4" fill="none" stroke="#111" stroke-opacity="0.24" stroke-width="1.1"/><path d="M150.1 227.6 L137.3 227.6 L137.3 250.6" fill="none" stroke="#111" stroke-opacity="0.11" stroke-width="1.1"/><path d="M155.3 231.7 L141.4 231.7 L141.4 256.4" fill="none" stroke="#111" stroke-opacity="0.06" stroke-width="1.1"/><line x1="81.2" y1="174.6" x2="81.2" y2="226.6" stroke="#fff" stroke-opacity="0.40" stroke-width="1.3" stroke-linecap="butt"/><line x1="85.4" y1="174.6" x2="85.4" y2="226.6" stroke="#fff" stroke-opacity="0.40" stroke-width="1.3" stroke-linecap="butt"/><line x1="89.5" y1="174.6" x2="89.5" y2="226.6" stroke="#fff" stroke-opacity="0.40" stroke-width="1.3" stroke-linecap="butt"/><line x1="93.7" y1="174.6" x2="93.7" y2="226.6" stroke="#fff" stroke-opacity="0.40" stroke-width="1.3" stroke-linecap="butt"/><line x1="97.8" y1="174.6" x2="97.8" y2="226.6" stroke="#fff" stroke-opacity="0.40" stroke-width="1.3" stroke-linecap="butt"/><line x1="102.0" y1="174.6" x2="102.0" y2="226.6" stroke="#fff" stroke-opacity="0.40" stroke-width="1.3" stroke-linecap="butt"/><line x1="106.1" y1="174.6" x2="106.1" y2="226.6" stroke="#fff" stroke-opacity="0.40" stroke-width="1.3" stroke-linecap="butt"/><line x1="110.3" y1="174.6" x2="110.3" y2="226.6" stroke="#fff" stroke-opacity="0.40" stroke-width="1.3" stroke-linecap="butt"/><line x1="114.5" y1="174.6" x2="114.5" y2="226.6" stroke="#fff" stroke-opacity="0.40" stroke-width="1.3" stroke-linecap="butt"/><line x1="118.6" y1="174.6" x2="118.6" y2="226.6" stroke="#fff" stroke-opacity="0.40" stroke-width="1.3" stroke-linecap="butt"/><line x1="122.8" y1="174.6" x2="122.8" y2="226.6" stroke="#fff" stroke-opacity="0.40" stroke-width="1.3" stroke-linecap="butt"/><line x1="126.9" y1="174.6" x2="126.9" y2="226.6" stroke="#fff" stroke-opacity="0.40" stroke-width="1.3" stroke-linecap="butt"/><line x1="131.1" y1="174.6" x2="131.1" y2="226.6" stroke="#fff" stroke-opacity="0.40" stroke-width="1.3" stroke-linecap="butt"/><line x1="135.2" y1="174.6" x2="135.2" y2="226.6" stroke="#fff" stroke-opacity="0.40" stroke-width="1.3" stroke-linecap="butt"/><line x1="139.3" y1="174.6" x2="139.3" y2="226.6" stroke="#fff" stroke-opacity="0.40" stroke-width="1.3" stroke-linecap="butt"/><line x1="80.3" y1="175.7" x2="140.3" y2="175.7" stroke="#fff" stroke-opacity="0.40" stroke-width="1.3" stroke-linecap="butt"/><line x1="80.3" y1="179.8" x2="140.3" y2="179.8" stroke="#fff" stroke-opacity="0.40" stroke-width="1.3" stroke-linecap="butt"/><line x1="80.3" y1="184.0" x2="140.3" y2="184.0" stroke="#fff" stroke-opacity="0.40" stroke-width="1.3" stroke-linecap="butt"/><line x1="80.3" y1="188.2" x2="140.3" y2="188.2" stroke="#fff" stroke-opacity="0.40" stroke-width="1.3" stroke-linecap="butt"/><line x1="80.3" y1="192.3" x2="140.3" y2="192.3" stroke="#fff" stroke-opacity="0.40" stroke-width="1.3" stroke-linecap="butt"/><line x1="80.3" y1="196.4" x2="140.3" y2="196.4" stroke="#fff" stroke-opacity="0.40" stroke-width="1.3" stroke-linecap="butt"/><line x1="80.3" y1="200.6" x2="140.3" y2="200.6" stroke="#fff" stroke-opacity="0.40" stroke-width="1.3" stroke-linecap="butt"/><line x1="80.3" y1="204.8" x2="140.3" y2="204.8" stroke="#fff" stroke-opacity="0.40" stroke-width="1.3" stroke-linecap="butt"/><line x1="80.3" y1="208.9" x2="140.3" y2="208.9" stroke="#fff" stroke-opacity="0.40" stroke-width="1.3" stroke-linecap="butt"/><line x1="80.3" y1="213.0" x2="140.3" y2="213.0" stroke="#fff" stroke-opacity="0.40" stroke-width="1.3" stroke-linecap="butt"/><line x1="80.3" y1="217.2" x2="140.3" y2="217.2" stroke="#fff" stroke-opacity="0.40" stroke-width="1.3" stroke-linecap="butt"/><line x1="80.3" y1="221.3" x2="140.3" y2="221.3" stroke="#fff" stroke-opacity="0.40" stroke-width="1.3" stroke-linecap="butt"/><line x1="80.3" y1="225.5" x2="140.3" y2="225.5" stroke="#fff" stroke-opacity="0.40" stroke-width="1.3" stroke-linecap="butt"/><g filter="url(#cvb)"><path d="M97.3 6.0 L112.3 16.0 L123.3 27.0" fill="none" stroke="#f8f8f8" stroke-opacity="0.6" stroke-width="2.4"/><path d="M123.3 27.0 L108.3 37.0 L97.3 48.0" fill="none" stroke="#f8f8f8" stroke-opacity="0.6" stroke-width="2.4"/><path d="M97.3 48.0 L112.3 58.0 L123.3 69.0" fill="none" stroke="#f8f8f8" stroke-opacity="0.6" stroke-width="2.4"/><path d="M123.3 69.0 L108.3 79.0 L97.3 90.0" fill="none" stroke="#f8f8f8" stroke-opacity="0.6" stroke-width="2.4"/><path d="M97.3 90.0 L112.3 100.0 L123.3 111.0" fill="none" stroke="#f8f8f8" stroke-opacity="0.6" stroke-width="2.4"/><path d="M123.3 111.0 L108.3 121.0 L97.3 132.0" fill="none" stroke="#f8f8f8" stroke-opacity="0.6" stroke-width="2.4"/><path d="M97.3 132.0 L112.3 142.0 L123.3 153.0" fill="none" stroke="#f8f8f8" stroke-opacity="0.6" stroke-width="2.4"/><path d="M123.3 153.0 L108.3 163.0 L97.3 174.0" fill="none" stroke="#f8f8f8" stroke-opacity="0.6" stroke-width="2.4"/><path d="M123.3 237.0 L108.3 247.0 L97.3 258.0" fill="none" stroke="#f8f8f8" stroke-opacity="0.6" stroke-width="2.4"/><path d="M97.3 258.0 L112.3 268.0 L123.3 279.0" fill="none" stroke="#f8f8f8" stroke-opacity="0.6" stroke-width="2.4"/><path d="M123.3 279.0 L108.3 289.0 L97.3 300.0" fill="none" stroke="#f8f8f8" stroke-opacity="0.6" stroke-width="2.4"/><path d="M97.3 300.0 L112.3 310.0 L123.3 321.0" fill="none" stroke="#f8f8f8" stroke-opacity="0.6" stroke-width="2.4"/><path d="M123.3 321.0 L108.3 331.0 L97.3 342.0" fill="none" stroke="#f8f8f8" stroke-opacity="0.6" stroke-width="2.4"/><path d="M97.3 342.0 L112.3 352.0 L123.3 363.0" fill="none" stroke="#f8f8f8" stroke-opacity="0.6" stroke-width="2.4"/><path d="M123.3 363.0 L108.3 373.0 L97.3 384.0" fill="none" stroke="#f8f8f8" stroke-opacity="0.6" stroke-width="2.4"/><path d="M97.3 384.0 L112.3 394.0 L123.3 405.0" fill="none" stroke="#f8f8f8" stroke-opacity="0.6" stroke-width="2.4"/><path d="M4.0 188.6 L18.0 201.6 L32.0 212.6" fill="none" stroke="#f8f8f8" stroke-opacity="0.6" stroke-width="2.2"/><path d="M32.0 212.6 L46.0 199.6 L60.0 188.6" fill="none" stroke="#f8f8f8" stroke-opacity="0.6" stroke-width="2.2"/><path d="M60.0 188.6 L74.0 201.6 L88.0 212.6" fill="none" stroke="#f8f8f8" stroke-opacity="0.6" stroke-width="2.2"/><path d="M172.0 188.6 L186.0 201.6 L200.0 212.6" fill="none" stroke="#f8f8f8" stroke-opacity="0.6" stroke-width="2.2"/><path d="M200.0 212.6 L214.0 199.6 L228.0 188.6" fill="none" stroke="#f8f8f8" stroke-opacity="0.6" stroke-width="2.2"/></g></g></svg>
<div style="left:1024.3px;top:40px;width:23.7px;height:597px;background:#535353;"></div>
<div style="left:1024.3px;top:40px;width:175.7px;height:6.6px;background:#3b3b3b;"></div>
<div style="left:1048px;top:47px;width:2px;height:590px;background:#2e2e2e;"></div>
<svg style="left:1040.8px;top:41.6px" width="4.6" height="3.4" viewBox="0 0 6 4"><path d="M2.6 0 L2.6 4 L0 2 Z M5.6 0 L5.6 4 L3 2 Z" fill="#c8c8c8"/></svg>
<svg style="left:1192.5px;top:41.6px" width="4.6" height="3.4" viewBox="0 0 6 4"><path d="M0.4 0 L0.4 4 L3 2 Z M3.4 0 L3.4 4 L6 2 Z" fill="#c8c8c8"/></svg>
<svg style="left:1029.4px;top:49.4px" width="13" height="2" viewBox="0 0 13 2"><rect x="0.0" y="0" width="2.1" height="1.8" fill="#2d2d2d"/><rect x="3.6" y="0" width="2.1" height="1.8" fill="#2d2d2d"/><rect x="7.2" y="0" width="2.1" height="1.8" fill="#2d2d2d"/><rect x="10.8" y="0" width="2.1" height="1.8" fill="#2d2d2d"/></svg>
<svg style="left:1031px;top:55.5px" width="12" height="12" viewBox="0 0 12 12"><rect x="1" y="0.6" width="3.4" height="10.8" rx="0.8" fill="#c4c4c4"/><rect x="1.9" y="1.8" width="1.6" height="1.5" fill="#555"/><rect x="1.9" y="4.4" width="1.6" height="1.5" fill="#555"/><rect x="1.9" y="7" width="1.6" height="1.5" fill="#555"/><path d="M6.8 2.8 C10.2 2 10.8 6 8 9.6" fill="none" stroke="#d0d0d0" stroke-width="1.3"/><path d="M5.6 3 L8.2 0.8 L8.4 4.6 Z" fill="#d0d0d0"/></svg>
<div style="left:1024.3px;top:71.3px;width:23.7px;height:1px;background:#3a3a3a;"></div>
<div style="left:1024.3px;top:72.3px;width:23.7px;height:1px;background:#5e5e5e;"></div>
<svg style="left:1029.4px;top:75px" width="13" height="2" viewBox="0 0 13 2"><rect x="0.0" y="0" width="2.1" height="1.8" fill="#2d2d2d"/><rect x="3.6" y="0" width="2.1" height="1.8" fill="#2d2d2d"/><rect x="7.2" y="0" width="2.1" height="1.8" fill="#2d2d2d"/><rect x="10.8" y="0" width="2.1" height="1.8" fill="#2d2d2d"/></svg>
<svg style="left:1030.5px;top:81px" width="13" height="12" viewBox="0 0 13 12"><circle cx="4.4" cy="4.3" r="3.7" fill="#c8c8c8"/><path d="M4.4 1.6 L4.4 6.8 M2.2 3.3 C3.3 2.2 5.4 2.2 6.6 3.3 M2.1 5.6 L6.7 5.6" stroke="#555" stroke-width="0.8" fill="none"/><rect x="8.6" y="1.3" width="2.6" height="1.8" fill="#d8d8d8"/><rect x="8.6" y="4.6" width="2.6" height="1.8" fill="#d8d8d8"/><rect x="0.8" y="8.8" width="10.4" height="2.2" fill="#d0d0d0"/><path d="M8.6 9.2 L10.8 9.2 L9.7 10.7 Z" fill="#444"/></svg>
<svg style="left:1031px;top:99.2px" width="11" height="11" viewBox="0 0 11 11"><circle cx="5.5" cy="5.5" r="5.3" fill="#c8c8c8"/><rect x="4.6" y="4.6" width="1.9" height="4.2" fill="#4a4a4a"/><rect x="3.9" y="4.6" width="1.6" height="0.9" fill="#4a4a4a"/><rect x="3.9" y="8" width="3.3" height="0.9" fill="#4a4a4a"/><circle cx="5.5" cy="2.8" r="1.1" fill="#4a4a4a"/></svg>
<div style="left:1024.3px;top:115.4px;width:23.7px;height:1px;background:#3a3a3a;"></div>
<div style="left:1024.3px;top:116.4px;width:23.7px;height:1px;background:#5e5e5e;"></div>
<svg style="left:1029.4px;top:118.8px" width="13" height="2" viewBox="0 0 13 2"><rect x="0.0" y="0" width="2.1" height="1.8" fill="#2d2d2d"/><rect x="3.6" y="0" width="2.1" height="1.8" fill="#2d2d2d"/><rect x="7.2" y="0" width="2.1" height="1.8" fill="#2d2d2d"/><rect x="10.8" y="0" width="2.1" height="1.8" fill="#2d2d2d"/></svg>
<svg style="left:1030.5px;top:124.5px" width="12" height="12" viewBox="0 0 12 12"><path d="M3 6 L9.6 6 L9.2 11.6 L3.4 11.6 Z" fill="#c8c8c8"/><path d="M4.3 5.6 L2.4 1.2 M6.3 5.6 L6.3 0.8 M8.2 5.6 L10 2" stroke="#c8c8c8" stroke-width="1.5" stroke-linecap="round"/></svg>
<svg style="left:1030.2px;top:142.5px" width="13" height="11" viewBox="0 0 13 11"><path d="M0.6 2.8 L12.4 2.8 M0.6 8 L12.4 8" stroke="#c8c8c8" stroke-width="1.3"/><path d="M1.6 1.5 C3 0.3 5.5 0.6 6.4 2.2 L6.4 3.8 L1.6 3.8 Z" fill="#c8c8c8"/><ellipse cx="9.8" cy="8" rx="2.2" ry="2.8" fill="#c8c8c8"/></svg>
<div style="left:1024.3px;top:157.3px;width:23.7px;height:1px;background:#3a3a3a;"></div>
<div style="left:1024.3px;top:158.3px;width:23.7px;height:1px;background:#5e5e5e;"></div>
<svg style="left:1029.4px;top:161.6px" width="13" height="2" viewBox="0 0 13 2"><rect x="0.0" y="0" width="2.1" height="1.8" fill="#2d2d2d"/><rect x="3.6" y="0" width="2.1" height="1.8" fill="#2d2d2d"/><rect x="7.2" y="0" width="2.1" height="1.8" fill="#2d2d2d"/><rect x="10.8" y="0" width="2.1" height="1.8" fill="#2d2d2d"/></svg>
<span class="t" style="left:1031.4px;top:167.5px;font-size:12.5px;color:#cfcfcf;line-height:13px;height:13px">A</span>
<div style="left:1040.2px;top:169px;width:1px;height:10.5px;background:#cfcfcf;"></div>
<svg style="left:1032px;top:186.3px" width="9" height="10" viewBox="0 0 9 10"><path d="M4 0.4 L8 0.4 L8 9.6 L6.8 9.6 L6.8 1.6 L5.8 1.6 L5.8 9.6 L4.4 9.6 L4.4 5.4 C0.4 5.4 0.4 0.4 4 0.4 Z" fill="url(#ag)"/></svg>
<div style="left:1024.3px;top:200.8px;width:23.7px;height:1px;background:#3a3a3a;"></div>
<div style="left:1024.3px;top:201.8px;width:23.7px;height:1px;background:#5e5e5e;"></div>
<div style="left:1050px;top:47px;width:150px;height:590px;background:#535353;"></div>
<div style="left:1050px;top:47px;width:150px;height:11px;background:#3b3b3b;"></div>
<div style="left:1050px;top:47px;width:23.5px;height:11.5px;background:#535353;border-right:1px solid #2e2e2e"></div>
<span class="t" style="left:1054.1px;top:48.4px;font-size:7.5px;color:#f0f0f0;">颜色</span>
<div style="left:1073.5px;top:47px;width:24px;height:10.5px;background:#414141;border-right:1px solid #2e2e2e;border-bottom:1px solid #333"></div>
<span class="t" style="left:1078.3px;top:48.4px;font-size:7.5px;color:#a8a8a8;">色板</span>
<svg style="left:1188.5px;top:49.5px" width="9" height="6" viewBox="0 0 9 6"><path d="M0 0.6 L2.6 0.6 L1.3 2.4 Z" fill="#e6e6e6"/><rect x="3.4" y="0" width="5.6" height="1.2" fill="#e6e6e6"/><rect x="3.4" y="2.2" width="5.6" height="1.2" fill="#e6e6e6"/><rect x="3.4" y="4.4" width="5.6" height="1.2" fill="#e6e6e6"/></svg>
<div style="left:1059.5px;top:71px;width:11.5px;height:12px;background:#fff;border:1px solid #dedede"></div>
<div style="left:1052.2px;top:63.5px;width:13.2px;height:13.3px;background:#050100;border:1.2px solid #a8a8a8;box-shadow:0 0 0 0.8px #3a3a3a"></div>
<span class="t" style="left:1076px;top:64.7px;font-size:7.2px;color:#e8e8e8;">R</span>
<div style="left:1086.6px;top:66.0px;width:50.2px;height:3.3px;background:linear-gradient(to right,#000 3%,#ff0808);border-radius:1.6px;box-shadow:0 0.8px 0 #6c6c6c, 0 -0.6px 0 #474747"></div>
<svg style="left:1084.6px;top:70.2px" width="6.4" height="4.4" viewBox="0 0 6.4 4.4"><path d="M3.2 0 L6.4 4.4 L0 4.4 Z" fill="url(#ag)"/></svg>
<div style="left:1140px;top:64.7px;width:32px;height:11.3px;background:#3f3f3f;border:1px solid #3a3a3a"></div>
<span class="t" style="left:1142.5px;top:65.9px;font-size:7.4px;color:#f4f4f4;">5</span>
<span class="t" style="left:1076px;top:80.7px;font-size:7.2px;color:#e8e8e8;">G</span>
<div style="left:1086.6px;top:82.0px;width:50.2px;height:3.3px;background:linear-gradient(to right,#000 3%,#08f008);border-radius:1.6px;box-shadow:0 0.8px 0 #6c6c6c, 0 -0.6px 0 #474747"></div>
<svg style="left:1083.3999999999999px;top:86.2px" width="6.4" height="4.4" viewBox="0 0 6.4 4.4"><path d="M3.2 0 L6.4 4.4 L0 4.4 Z" fill="url(#ag)"/></svg>
<div style="left:1140px;top:80.7px;width:32px;height:11.3px;background:#3f3f3f;border:1px solid #3a3a3a"></div>
<span class="t" style="left:1142.5px;top:81.9px;font-size:7.4px;color:#f4f4f4;">1</span>
<span class="t" style="left:1076px;top:96.2px;font-size:7.2px;color:#e8e8e8;">B</span>
<div style="left:1086.6px;top:97.5px;width:50.2px;height:3.3px;background:linear-gradient(to right,#000 3%,#0808ff);border-radius:1.6px;box-shadow:0 0.8px 0 #6c6c6c, 0 -0.6px 0 #474747"></div>
<svg style="left:1083.3999999999999px;top:101.7px" width="6.4" height="4.4" viewBox="0 0 6.4 4.4"><path d="M3.2 0 L6.4 4.4 L0 4.4 Z" fill="url(#ag)"/></svg>
<div style="left:1140px;top:96.2px;width:32px;height:11.3px;background:#3f3f3f;border:1px solid #3a3a3a"></div>
<span class="t" style="left:1142.5px;top:97.4px;font-size:7.4px;color:#f4f4f4;">0</span>
<div style="left:1053.3px;top:115px;width:119.5px;height:9.3px;background:linear-gradient(to right,#e80000 0%,#ff8a00 8%,#fff000 15%,#7ac000 22%,#00983c 30%,#00a0a0 40%,#0098e0 50%,#0038b0 58%,#14107c 65%,#7a0090 73%,#d800a0 82%,#f00050 92%,#e80000 100%);"></div>
<div style="left:1053.3px;top:115px;width:119.5px;height:9.3px;background:linear-gradient(to bottom,rgba(255,255,255,0.95) 0%,rgba(255,255,255,0) 45%,rgba(0,0,0,0) 55%,rgba(0,0,0,0.9) 100%);"></div>
<div style="left:1172.7px;top:115px;width:4.8px;height:4.7px;background:#fff;"></div>
<div style="left:1172.7px;top:119.7px;width:4.8px;height:4.6px;background:#000;"></div>
<div style="left:1050px;top:127px;width:150px;height:2px;background:#2e2e2e;"></div>
<div style="left:1050px;top:129px;width:150px;height:11px;background:#3b3b3b;"></div>
<div style="left:1050px;top:129px;width:23.5px;height:11.5px;background:#535353;border-right:1px solid #2e2e2e"></div>
<span class="t" style="left:1054.1px;top:130.4px;font-size:7.5px;color:#f0f0f0;">调整</span>
<div style="left:1073.5px;top:129px;width:24px;height:10.5px;background:#414141;border-right:1px solid #2e2e2e;border-bottom:1px solid #333"></div>
<span class="t" style="left:1078.3px;top:130.4px;font-size:7.5px;color:#a8a8a8;">样式</span>
<svg style="left:1188.5px;top:131.5px" width="9" height="6" viewBox="0 0 9 6"><path d="M0 0.6 L2.6 0.6 L1.3 2.4 Z" fill="#e6e6e6"/><rect x="3.4" y="0" width="5.6" height="1.2" fill="#e6e6e6"/><rect x="3.4" y="2.2" width="5.6" height="1.2" fill="#e6e6e6"/><rect x="3.4" y="4.4" width="5.6" height="1.2" fill="#e6e6e6"/></svg>
<span class="t" style="left:1055px;top:143.5px;font-size:7.6px;color:#f0f0f0;">添加调整</span>
<svg style="left:0;top:0" width="0" height="0"><defs><linearGradient id="ag" x1="0" x2="0" y1="0" y2="1"><stop offset="0" stop-color="#bdbdbd"/><stop offset="1" stop-color="#787878"/></linearGradient><linearGradient id="ag2" x1="0" x2="1" y1="1" y2="0"><stop offset="0" stop-color="#4c4c4c"/><stop offset="1" stop-color="#b4b4b4"/></linearGradient><linearGradient id="gm" x1="0" x2="1"><stop offset="0" stop-color="#484848"/><stop offset="1" stop-color="#b0b0b0"/></linearGradient></defs></svg>
<svg style="left:1079.3px;top:159px" width="11" height="10" viewBox="0 0 11 10"><circle cx="5.5" cy="5" r="2.3" fill="#c8c8c8"/><ellipse cx="5.5" cy="5" rx="1" ry="1.7" fill="#555"/><path d="M5.5 0 L5.5 1.8 M5.5 8.2 L5.5 10 M0.3 5 L2.3 5 M8.7 5 L10.7 5 M1.8 1.3 L3.1 2.6 M7.9 7.4 L9.2 8.7 M9.2 1.3 L7.9 2.6 M1.8 8.7 L3.1 7.4" stroke="#c8c8c8" stroke-width="0.9"/></svg>
<svg style="left:1094.0px;top:159px" width="11" height="10" viewBox="0 0 11 10"><path d="M0.3 8 L0.3 5.3 L1.5 4.6 L2.3 5.2 L3.2 3 L4 4.4 L5 2 L5.8 3.8 L6.8 2.2 L7.6 4.2 L8.6 3 L9.4 5 L10.7 4.6 L10.7 8 Z" fill="url(#ag)"/></svg>
<svg style="left:1109.5px;top:159px" width="11" height="10" viewBox="0 0 11 10"><rect x="0.4" y="0.9" width="10.2" height="8.4" fill="url(#ag)" stroke="#6a6a6a" stroke-width="0.6"/><path d="M0.8 6.3 L10.2 6.3 M4 1.2 L4 9" stroke="#666" stroke-width="0.5"/><path d="M1 9 C5 9 5 1.5 10 1.2" stroke="#dadada" stroke-width="0.9" fill="none"/></svg>
<svg style="left:1124.5px;top:159px" width="11" height="10" viewBox="0 0 11 10"><rect x="0.4" y="0.9" width="10.2" height="8.4" fill="url(#ag)" stroke="#6a6a6a" stroke-width="0.6"/><path d="M0.8 9 L10.2 1.2" stroke="#d8d8d8" stroke-width="0.9"/><path d="M1.6 3 L4 3 M2.8 1.8 L2.8 4.2" stroke="#4a4a4a" stroke-width="0.8"/><path d="M6.5 7.3 L9.3 7.3" stroke="#4a4a4a" stroke-width="0.9"/></svg>
<svg style="left:1139.5px;top:159px" width="11" height="10" viewBox="0 0 11 10"><path d="M0.3 0.8 L10.7 0.8 L5.5 9.8 Z" fill="url(#ag)"/><path d="M3.4 2.6 L7.6 2.6 L5.5 6.2 Z" fill="#858585"/></svg>
<svg style="left:1071.5px;top:176px" width="11" height="10" viewBox="0 0 11 10"><rect x="0.4" y="0.9" width="10.2" height="8.4" fill="url(#ag2)" stroke="#8a8a8a" stroke-width="0.6"/><rect x="2.2" y="1.2" width="1.6" height="2.6" fill="#ddd"/><rect x="4.8" y="1.2" width="1.6" height="2.6" fill="#ddd"/><rect x="7.4" y="1.2" width="1.6" height="2.6" fill="#ddd"/></svg>
<svg style="left:1086.5px;top:176px" width="11" height="10" viewBox="0 0 11 10"><path d="M5.5 0.3 L5.5 3 M1.8 3 L9.2 3" stroke="#c4c4c4" stroke-width="1.1"/><path d="M1.9 3 L0.5 7 M1.9 3 L3.3 7 M9.1 3 L7.7 7 M9.1 3 L10.5 7" stroke="#b0b0b0" stroke-width="0.7"/><path d="M0 6.8 C0.4 9.3 3.4 9.3 3.8 6.8 Z M7.2 6.8 C7.6 9.3 10.6 9.3 11 6.8 Z" fill="#a8a8a8"/><circle cx="5.5" cy="1.4" r="1.1" fill="#c4c4c4"/></svg>
<svg style="left:1102.0px;top:176px" width="11" height="10" viewBox="0 0 11 10"><rect x="0.4" y="0.9" width="10.2" height="8.4" fill="url(#ag)" stroke="#6a6a6a" stroke-width="0.6"/><rect x="2.6" y="1.2" width="2.2" height="7.8" fill="#5a5a5a"/><rect x="0.8" y="1.2" width="1.4" height="7.8" fill="#888"/></svg>
<svg style="left:1117.0px;top:176px" width="11" height="10" viewBox="0 0 11 10"><rect x="0.3" y="1.6" width="7.8" height="5.6" rx="0.8" fill="url(#ag)"/><rect x="2" y="0.6" width="3" height="1.4" fill="#b0b0b0"/><rect x="3.2" y="3" width="3.4" height="2.8" fill="#5a5a5a"/><circle cx="8" cy="7" r="2.7" fill="#9a9a9a" stroke="#606060" stroke-width="0.6"/><circle cx="8" cy="7" r="1.2" fill="#777"/></svg>
<svg style="left:1132.0px;top:176px" width="11" height="10" viewBox="0 0 11 10"><circle cx="5.5" cy="3.2" r="2.9" fill="#c4c4c4"/><circle cx="3.2" cy="6.8" r="2.9" fill="#a4a4a4"/><circle cx="7.8" cy="6.8" r="2.9" fill="#b4b4b4"/><path d="M4 4.3 L7 4.3 L5.5 7.2 Z" fill="#505050"/></svg>
<svg style="left:1147.0px;top:176px" width="11" height="10" viewBox="0 0 11 10"><rect x="0.4" y="0.9" width="10.2" height="8.4" fill="url(#ag)" stroke="#6a6a6a" stroke-width="0.6"/><path d="M0.6 3.6 L10.4 3.6 M0.6 6.4 L10.4 6.4 M3.8 1 L3.8 9.2 M7.2 1 L7.2 9.2" stroke="#4e4e4e" stroke-width="0.9"/></svg>
<svg style="left:1079.3px;top:192.8px" width="11" height="10" viewBox="0 0 11 10"><rect x="0.4" y="1.4" width="10.2" height="7.6" fill="url(#ag)" stroke="#6a6a6a" stroke-width="0.6"/><path d="M0.8 8.6 L10.2 1.8 L0.8 1.8 Z" fill="#c0c0c0"/><circle cx="5.8" cy="5.2" r="1.9" fill="#4a4a4a"/><path d="M3 7.5 L8.5 3" stroke="#4a4a4a" stroke-width="0.8"/></svg>
<svg style="left:1094.2px;top:192.8px" width="11" height="10" viewBox="0 0 11 10"><rect x="0.4" y="1.4" width="10.2" height="7.6" fill="url(#ag)" stroke="#6a6a6a" stroke-width="0.6"/><path d="M1 8.6 L10 2" stroke="#555" stroke-width="2.2"/><path d="M1 6 L6 2 M5 8.6 L10 5" stroke="#c8c8c8" stroke-width="0.6"/></svg>
<svg style="left:1109.5px;top:192.8px" width="11" height="10" viewBox="0 0 11 10"><rect x="0.4" y="1.4" width="10.2" height="7.6" fill="url(#ag)" stroke="#6a6a6a" stroke-width="0.6"/><path d="M0.8 6.6 L3 6.6 L3 5.2 L5.2 5.2 L5.2 3.8 L7.4 3.8 L7.4 2.6 L10.2 2.6 L10.2 4.6 L8 4.6 L8 5.8 L5.8 5.8 L5.8 7.2 L3.6 7.2 L3.6 8.4 L0.8 8.4 Z" fill="#3c3c3c"/></svg>
<svg style="left:1124.5px;top:192.8px" width="11" height="10" viewBox="0 0 11 10"><rect x="0.4" y="1.4" width="10.2" height="7.6" fill="#8a8a8a" stroke="#6a6a6a" stroke-width="0.6"/><path d="M0.8 1.8 L5.5 5.2 L0.8 8.6 Z M10.2 1.8 L5.5 5.2 L10.2 8.6 Z" fill="#b8b8b8"/><path d="M0.8 1.8 L10.2 8.6 M10.2 1.8 L0.8 8.6" stroke="#5a5a5a" stroke-width="0.6"/></svg>
<svg style="left:1139.5px;top:192.8px" width="11" height="10" viewBox="0 0 11 10"><rect x="0.4" y="1.4" width="10.2" height="7.6" fill="url(#gm)" stroke="#6a6a6a" stroke-width="0.5"/></svg>
<div style="left:1050px;top:210px;width:150px;height:2px;background:#2e2e2e;"></div>
<div style="left:1050px;top:212px;width:150px;height:11px;background:#3b3b3b;"></div>
<div style="left:1050px;top:212px;width:23.5px;height:11.5px;background:#535353;border-right:1px solid #2e2e2e"></div>
<span class="t" style="left:1054.1px;top:213.4px;font-size:7.5px;color:#f0f0f0;">图层</span>
<div style="left:1073.5px;top:212px;width:24.5px;height:10.5px;background:#414141;border-right:1px solid #2e2e2e;border-bottom:1px solid #333"></div>
<span class="t" style="left:1078.3px;top:213.4px;font-size:7.5px;color:#a8a8a8;">通道</span>
<div style="left:1098.0px;top:212px;width:24.5px;height:10.5px;background:#414141;border-right:1px solid #2e2e2e;border-bottom:1px solid #333"></div>
<span class="t" style="left:1102.8px;top:213.4px;font-size:7.5px;color:#a8a8a8;">路径</span>
<svg style="left:1188.5px;top:214.5px" width="9" height="6" viewBox="0 0 9 6"><path d="M0 0.6 L2.6 0.6 L1.3 2.4 Z" fill="#e6e6e6"/><rect x="3.4" y="0" width="5.6" height="1.2" fill="#e6e6e6"/><rect x="3.4" y="2.2" width="5.6" height="1.2" fill="#e6e6e6"/><rect x="3.4" y="4.4" width="5.6" height="1.2" fill="#e6e6e6"/></svg>
<div style="left:1052px;top:225.2px;width:44.3px;height:12.2px;background:#5e5e5e;border:1px solid #434343;border-radius:2px"></div>
<svg style="left:1055.5px;top:227.3px" width="7" height="7" viewBox="0 0 7 7"><circle cx="4" cy="2.8" r="2.1" fill="none" stroke="#bdbdbd" stroke-width="0.9"/><path d="M2.6 4.4 L0.6 6.6" stroke="#bdbdbd" stroke-width="0.9"/></svg>
<span class="t" style="left:1065.8px;top:226.6px;font-size:7.5px;color:#e8e8e8;">类型</span>
<svg style="left:1089.5px;top:227.5px" width="4" height="8" viewBox="0 0 4 8"><path d="M0.3 3 L3.7 3 L2 0.8 Z M0.3 5 L3.7 5 L2 7.2 Z" fill="#e0e0e0"/></svg>
<svg style="left:1109px;top:226.5px" width="9" height="8" viewBox="0 0 9 8"><rect x="0.6" y="0.6" width="7.8" height="6.8" fill="none" stroke="#8c8c8c" stroke-width="1"/><path d="M1.5 6.5 L3.5 3.8 L5 5.5 L6 4.5 L7.5 6.5 Z" fill="#8c8c8c"/><circle cx="5.8" cy="2.6" r="0.8" fill="#8c8c8c"/></svg>
<svg style="left:1124px;top:226.5px" width="8" height="8" viewBox="0 0 8 8"><circle cx="4" cy="4" r="3.3" fill="none" stroke="#8c8c8c" stroke-width="1"/><path d="M4 0.7 A3.3 3.3 0 0 1 4 7.3 Z" fill="#8c8c8c"/></svg>
<span class="t" style="left:1139.5px;top:226px;font-size:9.5px;color:#8c8c8c;font-family:'Liberation Serif',serif;font-weight:bold;line-height:11px;height:11px">T</span>
<svg style="left:1154px;top:226.5px" width="9" height="8" viewBox="0 0 9 8"><rect x="1.5" y="1.5" width="6" height="5" fill="none" stroke="#8c8c8c" stroke-width="1"/><rect x="0.3" y="0.3" width="2.2" height="2.2" fill="#8c8c8c"/><rect x="6.5" y="0.3" width="2.2" height="2.2" fill="#8c8c8c"/><rect x="0.3" y="5.5" width="2.2" height="2.2" fill="#8c8c8c"/><rect x="6.5" y="5.5" width="2.2" height="2.2" fill="#8c8c8c"/></svg>
<svg style="left:1169px;top:226px" width="9" height="9" viewBox="0 0 9 9"><rect x="0.5" y="3.5" width="6" height="5" fill="#8c8c8c"/><path d="M2 3.5 L2 2 C2 0.2 5 0.2 5 2 L5 3.5" fill="none" stroke="#8c8c8c" stroke-width="1"/><rect x="5" y="5" width="3.5" height="3.5" fill="#a0a0a0"/></svg>
<div style="left:1191.5px;top:225.8px;width:4.8px;height:10.2px;background:#404040;border-radius:1.5px"></div>
<div style="left:1192px;top:226.2px;width:3.8px;height:3.6px;background:#7a7a7a;border-radius:1px"></div>
<div style="left:1052px;top:242.3px;width:68.4px;height:12.3px;background:#5e5e5e;border:1px solid #434343;border-radius:2px"></div>
<span class="t" style="left:1057px;top:244px;font-size:7.6px;color:#c8c8c8;">正常</span>
<svg style="left:1114px;top:245.5px" width="4" height="8" viewBox="0 0 4 8"><path d="M0.3 3 L3.7 3 L2 0.8 Z M0.3 5 L3.7 5 L2 7.2 Z" fill="#9a9a9a"/></svg>
<span class="t" style="left:1125.5px;top:244px;font-size:7.6px;color:#c4c4c4;">不透明度:</span>
<div style="left:1162px;top:242.6px;width:22.8px;height:12.2px;background:#474747;border:1px solid #404040"></div>
<span class="t" style="left:1165px;top:244px;font-size:7px;color:#7a7a7a;">100%</span>
<div style="left:1184.6px;top:242.6px;width:11.4px;height:12.2px;background:#5f5f5f;border:1px solid #434343;border-radius:0 2px 2px 0"></div>
<svg style="left:1188.3px;top:247.8px" width="4" height="3" viewBox="0 0 4 3"><path d="M0 0 L4 0 L2 2.6 Z" fill="#d0d0d0"/></svg>
<div style="left:1050px;top:258px;width:150px;height:1px;background:#474747;"></div>
<span class="t" style="left:1053.5px;top:261px;font-size:7.6px;color:#c4c4c4;">锁定:</span>
<svg style="left:1076.5px;top:262px" width="8" height="8" viewBox="0 0 8 8"><rect x="0.5" y="0.5" width="7" height="7" fill="#8a8a8a"/><rect x="0.5" y="0.5" width="3.5" height="3.5" fill="#6a6a6a"/><rect x="4" y="4" width="3.5" height="3.5" fill="#6a6a6a"/></svg>
<svg style="left:1089.5px;top:261.5px" width="9" height="9" viewBox="0 0 9 9"><path d="M8.5 0.5 L4 5.5 L3 4.7 Z" fill="#9a9a9a"/><path d="M3.5 5.2 C3 7 1.8 7.8 0.5 7.8 C1.5 7 1.3 5.6 2.5 4.8 Z" fill="#9a9a9a"/></svg>
<svg style="left:1103px;top:261.5px" width="9" height="9" viewBox="0 0 9 9"><path d="M4.5 0.3 L4.5 8.7 M0.3 4.5 L8.7 4.5" stroke="#9a9a9a" stroke-width="0.9"/><path d="M3 1.8 L4.5 0 L6 1.8 Z M3 7.2 L4.5 9 L6 7.2 Z M1.8 3 L0 4.5 L1.8 6 Z M7.2 3 L9 4.5 L7.2 6 Z" fill="#9a9a9a"/></svg>
<svg style="left:1118px;top:261.5px" width="7" height="9" viewBox="0 0 7 9"><rect x="0.5" y="4" width="6" height="4.6" fill="#9a9a9a"/><path d="M1.7 4 L1.7 2.4 C1.7 0.4 5.3 0.4 5.3 2.4 L5.3 4" fill="none" stroke="#9a9a9a" stroke-width="1"/></svg>
<span class="t" style="left:1141px;top:261px;font-size:7.6px;color:#c4c4c4;">填充:</span>
<div style="left:1162px;top:260.3px;width:22.8px;height:12.2px;background:#474747;border:1px solid #404040"></div>
<span class="t" style="left:1165px;top:261.5px;font-size:7px;color:#7a7a7a;">100%</span>
<div style="left:1184.6px;top:260.3px;width:11.4px;height:12.2px;background:#5f5f5f;border:1px solid #434343;border-radius:0 2px 2px 0"></div>
<svg style="left:1188.3px;top:265.3px" width="4" height="3" viewBox="0 0 4 3"><path d="M0 0 L4 0 L2 2.6 Z" fill="#d0d0d0"/></svg>
<div style="left:1050px;top:275.5px;width:150px;height:350px;background:#454545;"></div>
<div style="left:1050px;top:275.5px;width:150px;height:1px;background:#383838;"></div>
<div style="left:1190.5px;top:276px;width:9.5px;height:349px;background:#4b4b4b;"></div>
<div style="left:1050px;top:276.5px;width:19px;height:24px;background:#535353;border-right:1px solid #3e3e3e"></div>
<div style="left:1069px;top:276.5px;width:121.5px;height:24px;background:#596678;"></div>
<div style="left:1050px;top:300.5px;width:140.5px;height:1px;background:#3a3a3a;"></div>
<svg style="left:1054.5px;top:285px" width="9" height="6" viewBox="0 0 9 6"><path d="M0.3 3 C2 0.2 7 0.2 8.7 3 C7 5.8 2 5.8 0.3 3 Z" fill="none" stroke="#d8d8d8" stroke-width="0.9"/><circle cx="4.5" cy="3" r="1.5" fill="#d8d8d8"/></svg>
<div style="left:1070.5px;top:277.5px;width:12.5px;height:21.5px;background:#f4f4f4;border:1px solid #222;box-shadow:0 0 0 0.8px #c8c8c8"></div>
<div style="left:1076.3px;top:278.5px;width:0.9px;height:19.5px;background:#777;"></div>
<div style="left:1071.5px;top:288px;width:10.5px;height:0.9px;background:#999;"></div>
<span class="t" style="left:1089.5px;top:283.5px;font-size:7.6px;color:#ffffff;font-style:italic;transform:skewX(-12deg)">背景</span>
<svg style="left:1172.6px;top:284.2px" width="7" height="8" viewBox="0 0 7 8"><rect x="0.6" y="3.6" width="5.8" height="3.9" fill="#7d8796" stroke="#e4e4e4" stroke-width="1"/><path d="M1.9 3.4 L1.9 2.2 C1.9 0.4 5.1 0.4 5.1 2.2 L5.1 3.4" fill="none" stroke="#e4e4e4" stroke-width="1"/></svg>
<div style="left:1050px;top:625px;width:150px;height:12px;background:#4f4f4f;border-top:1px solid #383838"></div>
<svg style="left:1072px;top:629px" width="10" height="6" viewBox="0 0 10 6"><rect x="0.6" y="1" width="4.8" height="3.6" rx="1.8" fill="none" stroke="#777" stroke-width="1"/><rect x="4.6" y="1" width="4.8" height="3.6" rx="1.8" fill="none" stroke="#777" stroke-width="1"/></svg>
<span class="t" style="left:1090.5px;top:627px;font-size:8px;color:#858585;font-style:italic;font-family:'Liberation Serif',serif">fx</span>
<svg style="left:1106.5px;top:627.5px" width="9" height="8" viewBox="0 0 9 8"><rect x="0.3" y="0.3" width="8.4" height="7.4" fill="#d0d0d0"/><circle cx="4.5" cy="4" r="2" fill="#555"/></svg>
<svg style="left:1124px;top:627.5px" width="11" height="9" viewBox="0 0 11 9"><circle cx="4" cy="4" r="3.4" fill="#d0d0d0"/><path d="M1.6 6.4 A3.4 3.4 0 0 0 6.4 1.6 Z" fill="#666"/><path d="M8 7 L10.4 7 L9.2 8.6 Z" fill="#ddd"/></svg>
<svg style="left:1140px;top:627.5px" width="9" height="8" viewBox="0 0 9 8"><path d="M0.3 1 L3.5 1 L4.3 2.2 L8.7 2.2 L8.7 7.5 L0.3 7.5 Z" fill="#c8c8c8"/></svg>
<svg style="left:1157px;top:627.5px" width="9" height="9" viewBox="0 0 9 9"><path d="M0.5 0.5 L8 0.5 L8 8.5 L3 8.5 L0.5 6 Z" fill="#c8c8c8"/><path d="M0.5 6 L3 6 L3 8.5 Z" fill="#666"/></svg>
<svg style="left:1174px;top:627.5px" width="8" height="9" viewBox="0 0 8 9"><path d="M1 2.5 L7 2.5 L6.5 8.5 L1.5 8.5 Z" fill="none" stroke="#707070" stroke-width="0.9"/><path d="M0.3 1.7 L7.7 1.7 M3 0.6 L5 0.6 M2.5 5 L5.5 5" stroke="#707070" stroke-width="0.9"/></svg>
</div></body></html>
